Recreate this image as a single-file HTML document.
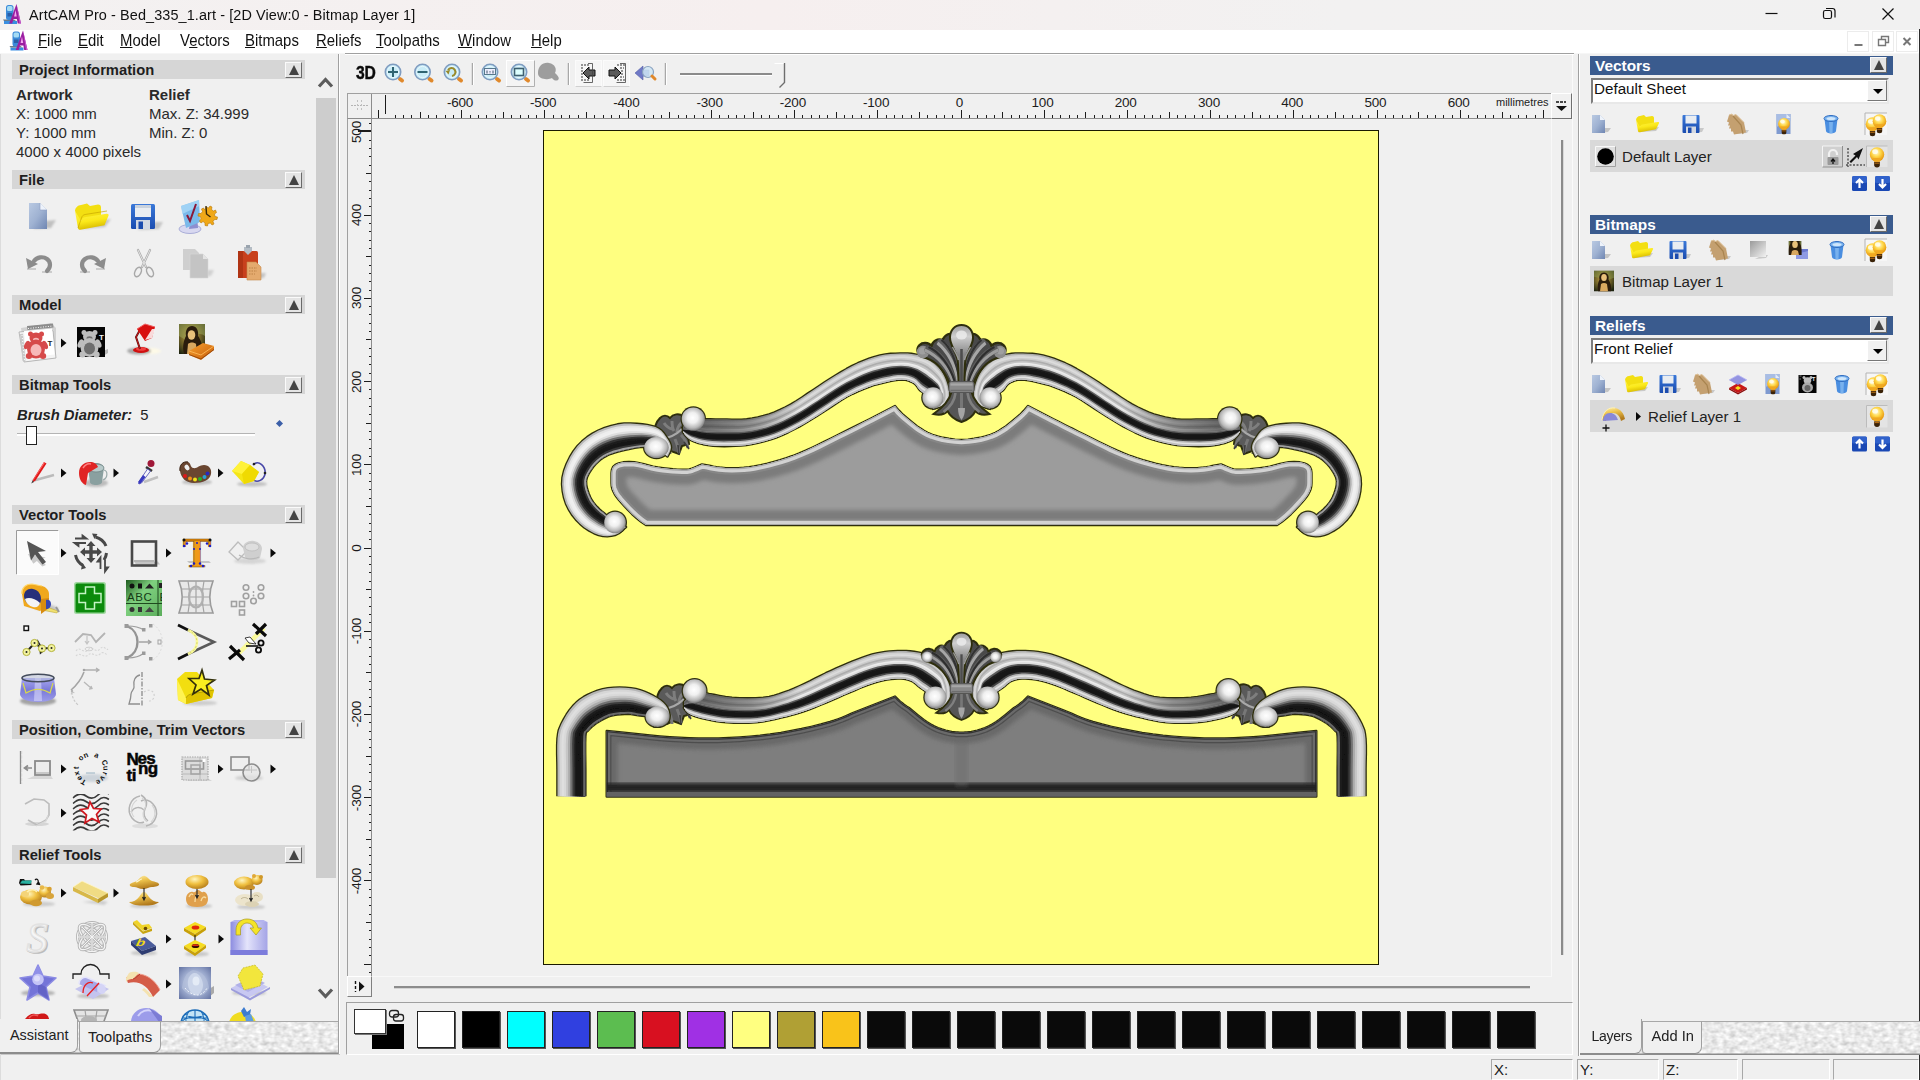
<!DOCTYPE html><html><head><meta charset="utf-8"><title>ArtCAM Pro</title><style>

*{box-sizing:border-box;margin:0;padding:0}
html,body{width:1920px;height:1080px;overflow:hidden;background:#f0f0f0;font-family:"Liberation Sans",sans-serif;color:#1a1a1a}
.a{position:absolute}
.t{position:absolute;white-space:nowrap;line-height:1}
svg{position:absolute;overflow:visible}
.hdr{position:absolute;left:12px;width:293px;height:19px;background:#d6d6d6}
.hdr b{position:absolute;left:7px;top:2px;font-size:14.75px;line-height:16px;color:#1e1e1e;white-space:nowrap}
.cb{position:absolute;width:17px;height:16px;background:#e4e4e4;border:1px solid;border-color:#fafafa #6a6a6a #6a6a6a #fafafa}
.cb i{position:absolute;left:3px;top:2px;width:0;height:0;border-left:5px solid transparent;border-right:5px solid transparent;border-bottom:10px solid #444}
.rh{position:absolute;left:1590px;width:303px;height:19px;background:#3a5b8e}
.rh b{position:absolute;left:5px;top:1px;font-size:15.4px;line-height:17px;color:#fff;white-space:nowrap}
.row{position:absolute;left:1590px;width:303px;background:#d9d9d9}
.dd{position:absolute;left:1591px;width:298px;height:26px;background:#fff;border:2px solid;border-color:#7d7d7d #e8e8e8 #e8e8e8 #7d7d7d}
.dd span{position:absolute;left:1px;top:0px;font-size:15.2px;line-height:18px;color:#111;white-space:nowrap}
.dd em{position:absolute;right:0;top:0;width:20px;height:21px;background:#f0f0f0;border:1px solid;border-color:#fff #777 #777 #fff}
.dd em i{position:absolute;left:5px;top:8px;width:0;height:0;border-left:5px solid transparent;border-right:5px solid transparent;border-top:5px solid #000}
.ar{position:absolute;width:0;height:0;border-top:4px solid transparent;border-bottom:4px solid transparent;border-left:5px solid #111}
.sw{position:absolute;top:1011px;width:38px;height:37px;border:1px solid #222;box-shadow:1px 1px 0 #555}

</style></head><body>
<div class="a" style="left:0;top:0;width:1920px;height:30px;background:linear-gradient(90deg,#f3f1f1 0%,#f6efef 40%,#f2f1f1 70%,#f1f1f1 100%)"></div>
<div class="t" style="left:29px;top:6.5px;font-size:15.3px;letter-spacing:0.1px;color:#111;transform:scaleX(0.944);transform-origin:0 0">ArtCAM Pro - Bed_335_1.art - [2D View:0 - Bitmap Layer 1]</div>
<svg style="left:1750px;top:0" width="170" height="30" viewBox="0 0 170 30"><path d="M15.5 13.5h12" stroke="#111" stroke-width="1.2" fill="none"/><rect x="73.5" y="10.5" width="8" height="8" rx="1.8" fill="none" stroke="#111" stroke-width="1.2"/><path d="M76 8.5h6.5a2.5 2.5 0 0 1 2.500 2.500v6.500" fill="none" stroke="#111" stroke-width="1.2"/><path d="M132.500 8.500l11 11M143.500 8.500l-11 11" stroke="#111" stroke-width="1.2" fill="none"/></svg>
<div class="a" style="left:0;top:30px;width:1920px;height:23px;background:#fff"></div>
<div class="a" style="left:0;top:53px;width:1920px;height:1px;background:#f6f6f6"></div>
<div class="t" style="left:38px;top:32.5px;font-size:15.7px;color:#111;transform:scaleX(0.95);transform-origin:0 0"><u>F</u>ile</div>
<div class="t" style="left:78px;top:32.5px;font-size:15.7px;color:#111;transform:scaleX(0.95);transform-origin:0 0"><u>E</u>dit</div>
<div class="t" style="left:120px;top:32.5px;font-size:15.7px;color:#111;transform:scaleX(0.95);transform-origin:0 0"><u>M</u>odel</div>
<div class="t" style="left:180px;top:32.5px;font-size:15.7px;color:#111;transform:scaleX(0.95);transform-origin:0 0">V<u>e</u>ctors</div>
<div class="t" style="left:245px;top:32.5px;font-size:15.7px;color:#111;transform:scaleX(0.95);transform-origin:0 0"><u>B</u>itmaps</div>
<div class="t" style="left:316px;top:32.5px;font-size:15.7px;color:#111;transform:scaleX(0.95);transform-origin:0 0"><u>R</u>eliefs</div>
<div class="t" style="left:376px;top:32.5px;font-size:15.7px;color:#111;transform:scaleX(0.95);transform-origin:0 0"><u>T</u>oolpaths</div>
<div class="t" style="left:458px;top:32.5px;font-size:15.7px;color:#111;transform:scaleX(0.95);transform-origin:0 0"><u>W</u>indow</div>
<div class="t" style="left:531px;top:32.5px;font-size:15.7px;color:#111;transform:scaleX(0.95);transform-origin:0 0"><u>H</u>elp</div>
<div class="a" style="left:1847px;top:31px;width:22px;height:21px;background:#fff;border:1px solid #ececec"></div>
<div class="a" style="left:1872px;top:31px;width:22px;height:21px;background:#fff;border:1px solid #ececec"></div>
<div class="a" style="left:1896px;top:31px;width:22px;height:21px;background:#fff;border:1px solid #ececec"></div>
<svg style="left:1847px;top:31px" width="72" height="22" viewBox="0 0 72 22"><path d="M7.500 14h8" stroke="#777" stroke-width="2"/><path d="M31.500 8.500h7v6h-7zM34.500 8v-2.500h7v6h-2.500" fill="none" stroke="#777" stroke-width="1.4"/><path d="M56.500 7l7 7M63.500 7l-7 7" stroke="#777" stroke-width="2"/></svg>
<div class="a" style="left:0;top:1056px;width:1920px;height:24px;background:#f0f0f0"></div>
<div class="a" style="left:0;top:1054px;width:340px;height:1px;background:#c8c8c8"></div>
<div class="a" style="left:1491px;top:1059px;width:82px;height:21px;border:1px solid;border-color:#a8a8a8 #fff #fff #a8a8a8"></div>
<div class="t" style="left:1494px;top:1062px;font-size:15px;color:#222">X:</div>
<div class="a" style="left:1577px;top:1059px;width:82px;height:21px;border:1px solid;border-color:#a8a8a8 #fff #fff #a8a8a8"></div>
<div class="t" style="left:1580px;top:1062px;font-size:15px;color:#222">Y:</div>
<div class="a" style="left:1663px;top:1059px;width:75px;height:21px;border:1px solid;border-color:#a8a8a8 #fff #fff #a8a8a8"></div>
<div class="t" style="left:1666px;top:1062px;font-size:15px;color:#222">Z:</div>
<div class="a" style="left:1742px;top:1059px;width:88px;height:21px;border:1px solid;border-color:#a8a8a8 #fff #fff #a8a8a8"></div>
<div class="a" style="left:1833px;top:1059px;width:86px;height:21px;border:1px solid;border-color:#a8a8a8 #fff #fff #a8a8a8"></div>
<div class="a" style="left:1919px;top:29px;width:1px;height:1051px;background:#2c2c2c"></div><div class="a" style="left:0;top:54px;width:1px;height:1026px;background:#dcdcdc"></div>
<svg style="left:0;top:0" width="40" height="54" viewBox="0 0 40 54"><g transform="translate(3 4)"><path d="M1 17h13v3h-13z" fill="#3a8ee0"/><path d="M0 15.500h11l2 1.500h-12z" fill="#6a7a8a"/><rect x="3" y="1" width="7.500" height="15" rx="2.500" fill="#3c8ad8"/><rect x="4" y="2" width="5.500" height="5" rx="1.500" fill="#a6dcf4"/><rect x="4.500" y="9" width="4.500" height="3.500" fill="#2a5ea8"/><path d="M13.500 0l4.500 19.500h-3.300l-0.800-4.500h-3.500l-1.200 4.500h-3z" fill="#9a1ea0"/><path d="M12.500 6l1.200 6.500h-2.600z" fill="#f4a8f0"/><path d="M13.500 0l4.500 19.500h-1.500z" fill="#c858cc"/></g><g transform="translate(9.5 30.5)"><path d="M1 17h13v3h-13z" fill="#3a8ee0"/><path d="M0 15.500h11l2 1.500h-12z" fill="#6a7a8a"/><rect x="3" y="1" width="7.500" height="15" rx="2.500" fill="#3c8ad8"/><rect x="4" y="2" width="5.500" height="5" rx="1.500" fill="#a6dcf4"/><rect x="4.500" y="9" width="4.500" height="3.500" fill="#2a5ea8"/><path d="M13.500 0l4.500 19.500h-3.300l-0.800-4.500h-3.500l-1.200 4.500h-3z" fill="#9a1ea0"/><path d="M12.500 6l1.200 6.500h-2.600z" fill="#f4a8f0"/><path d="M13.500 0l4.500 19.500h-1.500z" fill="#c858cc"/></g></svg>
<div class="a" style="left:338px;top:54px;width:2px;height:1000px;background:linear-gradient(90deg,#a0a0a0 50%,#fff 50%)"></div>
<div class="a" style="left:316px;top:98px;width:20px;height:780px;background:#cdcdcd"></div>
<svg style="left:316px;top:70px" width="20" height="940" viewBox="0 0 20 940"><path d="M3 16.500l6.500-7 6.500 7" fill="none" stroke="#5c5c5c" stroke-width="3.200"/><path d="M3 919.500l6.500 7 6.500-7" fill="none" stroke="#5c5c5c" stroke-width="3.200"/></svg>
<div class="hdr" style="top:60px"><b>Project Information</b><div class="cb" style="left:273px;top:2px"><i></i></div></div>
<div class="hdr" style="top:170px"><b>File</b><div class="cb" style="left:273px;top:2px"><i></i></div></div>
<div class="hdr" style="top:295px"><b>Model</b><div class="cb" style="left:273px;top:2px"><i></i></div></div>
<div class="hdr" style="top:375px"><b>Bitmap Tools</b><div class="cb" style="left:273px;top:2px"><i></i></div></div>
<div class="hdr" style="top:505px"><b>Vector Tools</b><div class="cb" style="left:273px;top:2px"><i></i></div></div>
<div class="hdr" style="top:720px"><b>Position, Combine, Trim Vectors</b><div class="cb" style="left:273px;top:2px"><i></i></div></div>
<div class="hdr" style="top:845px"><b>Relief Tools</b><div class="cb" style="left:273px;top:2px"><i></i></div></div>
<div class="t" style="left:16px;top:87px;font-size:15px;font-weight:bold;color:#2a2a2a">Artwork</div>
<div class="t" style="left:149px;top:87px;font-size:15px;font-weight:bold;color:#2a2a2a">Relief</div>
<div class="t" style="left:16px;top:106px;font-size:15px;color:#2a2a2a">X: 1000 mm</div>
<div class="t" style="left:149px;top:106px;font-size:15px;color:#2a2a2a">Max. Z: 34.999</div>
<div class="t" style="left:16px;top:125px;font-size:15px;color:#2a2a2a">Y: 1000 mm</div>
<div class="t" style="left:149px;top:125px;font-size:15px;color:#2a2a2a">Min. Z: 0</div>
<div class="t" style="left:16px;top:144px;font-size:15px;color:#2a2a2a">4000 x 4000 pixels</div>
<div class="t" style="left:17px;top:408px;font-size:14.8px;color:#222"><b><i>Brush Diameter:</i></b>&nbsp; 5</div>
<div class="a" style="left:17px;top:433px;width:238px;height:3px;background:linear-gradient(#b4b4b4 34%,#fff 34%)"></div>
<div class="a" style="left:26px;top:426px;width:11px;height:19px;background:#fff;border:1.500px solid #222"></div>
<div class="a" style="left:277px;top:421px;width:5px;height:5px;background:#3b5fa8;transform:rotate(45deg)"></div>
<svg style="left:0;top:0" width="340" height="1021" viewBox="0 0 340 1021"><defs>
<filter id="b1" x="-30%" y="-30%" width="160%" height="160%"><feGaussianBlur stdDeviation="0.9"/></filter>
<filter id="b2" x="-30%" y="-30%" width="160%" height="160%"><feGaussianBlur stdDeviation="1.6"/></filter>
<filter id="b05" x="-30%" y="-30%" width="160%" height="160%"><feGaussianBlur stdDeviation="0.5"/></filter>
<linearGradient id="gDoc" x1="0" y1="0" x2="1" y2="1"><stop offset="0" stop-color="#b9c9e2"/><stop offset="0.5" stop-color="#9fb2d2"/><stop offset="1" stop-color="#6f86b2"/></linearGradient>
<linearGradient id="gFold" x1="0" y1="0" x2="0.3" y2="1"><stop offset="0" stop-color="#fff450"/><stop offset="0.6" stop-color="#fbe91a"/><stop offset="1" stop-color="#d9bc00"/></linearGradient>
<linearGradient id="gGold" x1="0" y1="0" x2="0.4" y2="1"><stop offset="0" stop-color="#fff2b4"/><stop offset="0.45" stop-color="#ecc24c"/><stop offset="1" stop-color="#b27a1c"/></linearGradient>
<radialGradient id="gGoldR" cx="0.4" cy="0.3" r="0.7"><stop offset="0" stop-color="#fff6c0"/><stop offset="0.5" stop-color="#f0c040"/><stop offset="1" stop-color="#b8801c"/></radialGradient>
<linearGradient id="gBlueV" x1="0" y1="0" x2="0" y2="1"><stop offset="0" stop-color="#a8a8f0"/><stop offset="0.5" stop-color="#7a7ad8"/><stop offset="1" stop-color="#9c9cea"/></linearGradient>
<linearGradient id="gBlueH" x1="0" y1="0" x2="1" y2="0"><stop offset="0" stop-color="#8c8ce0"/><stop offset="0.45" stop-color="#e4e4fb"/><stop offset="1" stop-color="#a4a4e6"/></linearGradient>
<linearGradient id="gGreenA" x1="0" y1="0" x2="1" y2="1"><stop offset="0" stop-color="#1e5a1e"/><stop offset="0.4" stop-color="#7fd07f"/><stop offset="1" stop-color="#5cae5c"/></linearGradient>
<linearGradient id="gSave" x1="0" y1="0" x2="0" y2="1"><stop offset="0" stop-color="#3a78d8"/><stop offset="1" stop-color="#1a4cb0"/></linearGradient>
<radialGradient id="gMona" cx="0.45" cy="0.4" r="0.7"><stop offset="0" stop-color="#c9a24a"/><stop offset="0.5" stop-color="#7a6a2a"/><stop offset="1" stop-color="#1e2410"/></radialGradient>
<linearGradient id="gBook" x1="0" y1="0" x2="1" y2="1"><stop offset="0" stop-color="#f5a030"/><stop offset="1" stop-color="#c85c08"/></linearGradient>
<radialGradient id="gRelSq" cx="0.5" cy="0.5" r="0.75"><stop offset="0" stop-color="#e4ebf8"/><stop offset="0.55" stop-color="#9aa8cc"/><stop offset="1" stop-color="#5a6a9c"/></radialGradient>
<radialGradient id="gBulb" cx="0.45" cy="0.35" r="0.6"><stop offset="0" stop-color="#fffbe0"/><stop offset="0.5" stop-color="#ffd84a"/><stop offset="1" stop-color="#e89a10"/></radialGradient>
</defs><clipPath id="lp"><rect x="0" y="54" width="316" height="967"/></clipPath><g clip-path="url(#lp)"><g transform="translate(38 216)"><path d="M-5 13l18-1 5-8-10 1z" fill="#999" opacity="0.55" filter="url(#b1)"/><path d="M-9-13h11l7 7v19h-18z" fill="url(#gDoc)"/><path d="M2-13l7 7h-7z" fill="#eef3fb"/><path d="M2-13v7h7" fill="none" stroke="#8fa0c4" stroke-width="0.600"/></g><g transform="translate(91 217)"><path d="M-10 12l24-2 6-8-20 3z" fill="#999" opacity="0.5" filter="url(#b1)"/><path d="M-16-6c0-3 3-6 6-6l6-1.500 3 2.500 8-1.500c2 0 3 1 3 3v8l-22 5z" fill="#f3df12"/><path d="M-16-6l3 17c0 1 1 2 2.500 1.800l24-4.500 4-9.500c0.500-1.500-0.500-2.300-2-2l-22 3.500c-2 0.500-3 1.500-3.500 3.500z" fill="url(#gFold)"/><path d="M-13 11l3.500-10c0.500-2 1.500-3 3.500-3.500l22-3.500" fill="none" stroke="#c8a800" stroke-width="0.700"/></g><g transform="translate(143 217)"><path d="M-6 13l22-1 4-7-8 0z" fill="#999" opacity="0.5" filter="url(#b1)"/><rect x="-12" y="-13" width="24" height="25" rx="1.500" fill="url(#gSave)"/><rect x="-8" y="-12" width="16" height="12" fill="#e9edf2"/><rect x="-8" y="-12" width="16" height="3" fill="#c9d2de"/><rect x="-7" y="3" width="14" height="9" fill="#d4d9e2"/><rect x="-4.500" y="4.500" width="4.500" height="7.500" fill="#1c4cae"/></g><g transform="translate(196 217)"><ellipse cx="-6" cy="12" rx="11" ry="4.500" fill="#d8d8f0" stroke="#9aa0d0" stroke-width="0.800"/><path d="M-7 12l3-16 5 1 1 14z" fill="#8d8fd0"/><path d="M-15-11l18-6 1 22-14 6z" fill="#7ab9ea"/><path d="M-15-11l18-6 0.300 6-17 8z" fill="#a9d8f7" opacity="0.800"/><path d="M-9-2l3 6 6-17" fill="none" stroke="#8a1838" stroke-width="2"/><path d="M10-10l2.500 1 1.500-2 2 1-0.500 2.500 2 1.500 2-1 1 2.500-2 1.500 0.500 2.500 2.500 0.500-0.500 2.500-2.500 0-1.500 2 1 2.500-2 1-1.500-2-2.500 0.500-0.500 2.500-2.500-0.500 0-2.500-2-1.500-2 1.500-1.500-2 1.500-2-0.500-2.500-2.500-0.500 0.500-2.500 2.500 0 1.500-2-1-2.500 2-1 1.500 2z" fill="#f0a818" stroke="#b87808" stroke-width="0.600"/><path d="M10-11l0.500 8 4 3" fill="none" stroke="#3a2a08" stroke-width="1.400"/></g><g transform="translate(40 264)"><path d="M-13 5h9M2 8h10" stroke="#c4c4c4" stroke-width="2" opacity="0.8"/><path d="M-6-3c3-4 9-5 13-2c4 3 4 8 0 12" fill="none" stroke="#8c8c8c" stroke-width="4.200" stroke-linecap="round"/><path d="M-14-6l2 11 10-5z" fill="#8c8c8c"/></g><g transform="translate(92 264)"><path d="M4 5h9M-12 8h10" stroke="#c4c4c4" stroke-width="2" opacity="0.8"/><path d="M6-3c-3-4-9-5-13-2c-4 3-4 8 0 12" fill="none" stroke="#8c8c8c" stroke-width="4.200" stroke-linecap="round"/><path d="M14-6l-2 11-10-5z" fill="#8c8c8c"/></g><g transform="translate(144 263)"><path d="M-6-13l8 17M6-13l-8 17" stroke="#a8a8a8" stroke-width="2.200" stroke-linecap="round"/><path d="M-6-13l8 17M6-13l-8 17" stroke="#f2f2f2" stroke-width="0.800" stroke-linecap="round"/><ellipse cx="-6" cy="9" rx="3" ry="5" transform="rotate(25 -6 9)" fill="none" stroke="#a8a8a8" stroke-width="1.500"/><ellipse cx="6" cy="9" rx="3" ry="5" transform="rotate(-25 6 9)" fill="none" stroke="#a8a8a8" stroke-width="1.500"/></g><g transform="translate(197 263)"><path d="M-4 14l18-1 3-6-6 0z" fill="#aaa" opacity="0.45" filter="url(#b1)"/><path d="M-14-14h12l4 4v17h-16z" fill="#cfcfcf"/><path d="M-7-9h13l5 5v19h-18z" fill="#c4c4c4" stroke="#d8d8d8" stroke-width="0.600"/><path d="M6-9v5h5z" fill="#e4e4e4"/></g><g transform="translate(250 263)"><path d="M-4 16l18-1 2-5-6 0z" fill="#999" opacity="0.5" filter="url(#b1)"/><rect x="-12" y="-12" width="20" height="27" rx="1.500" fill="#c8401c"/><rect x="-12" y="-12" width="5" height="27" fill="#b03414"/><path d="M-6-12v-4h8v4l-4 4z" fill="#b4bcc4"/><path d="M-4-18h4v3h-4z" fill="#9aa4ae"/><path d="M-3-1h9l5 5v13h-14z" fill="#e4aa6e"/><path d="M-3-1h9l5 5v13h-14z" fill="none" stroke="#c88a4a" stroke-width="0.600"/><path d="M-1 5h8M-1 8h8M-1 11h6" stroke="#b47a3e" stroke-width="0.800" stroke-dasharray="1.500 1"/></g><g transform="translate(37 342)"><path d="M-16-14l30-5 5 5v30l-31 4z" fill="#d2d2d2"/><path d="M-18-10l31-3 3 2 3 27-32 4z" fill="#f4f4f4" stroke="#aaa" stroke-width="0.800"/><path d="M-10-16l26-2.500 0.500 4-26 2.500z" fill="#8c8c8c"/><path d="M-9-13.500l25-2.500" stroke="#fff" stroke-width="1" stroke-dasharray="1 1.500"/><path d="M-17-8l3-0.300 2.500 27-3 0.300z" fill="#c8c8c8"/><path d="M-15-7l2.500 25" stroke="#fff" stroke-width="1" stroke-dasharray="1 2"/><path d="M-13-11l28-2.500 2.500 26-28 3z" fill="#fff"/><g transform="translate(-1 3)" ><ellipse cx="-5.500" cy="-11" rx="2.500" ry="2.500" fill="#d64a4a"/><ellipse cx="5.500" cy="-11" rx="2.500" ry="2.500" fill="#d64a4a"/><ellipse cx="0" cy="-7" rx="6.500" ry="5.500" fill="#d64a4a"/><ellipse cx="0" cy="-5" rx="3" ry="2.300" fill="#f7b9b9"/><ellipse cx="0" cy="4" rx="9" ry="9.500" fill="#d64a4a"/><ellipse cx="0" cy="5" rx="5.500" ry="6" fill="#f7b9b9"/><ellipse cx="-7" cy="11" rx="3.200" ry="3" fill="#d64a4a"/><ellipse cx="7" cy="11" rx="3.200" ry="3" fill="#d64a4a"/><ellipse cx="-9" cy="0" rx="2.500" ry="4.500" transform="rotate(25 -9 0)" fill="#d64a4a"/><ellipse cx="9" cy="0" rx="2.500" ry="4.500" transform="rotate(-25 9 0)" fill="#d64a4a"/></g><text x="10.5" y="3.5" font-family="Liberation Sans,sans-serif" font-weight="bold" font-size="8" fill="#222">T</text></g><path d="M61 338.5l5.5 4.5-5.5 4.5z" fill="#0a0a0a"/><g transform="translate(91 342)"><path d="M12 9l5-2v4l-5 3z" fill="#b8b8b8"/><rect x="-14" y="-15" width="28" height="30" fill="#050505"/><g transform="translate(-1.5 1.5)"><ellipse cx="-5.500" cy="-11" rx="2.500" ry="2.500" fill="#bdbdbd"/><ellipse cx="5.500" cy="-11" rx="2.500" ry="2.500" fill="#bdbdbd"/><ellipse cx="0" cy="-7" rx="6.500" ry="5.500" fill="#bdbdbd"/><ellipse cx="0" cy="-5" rx="3" ry="2.300" fill="#6e6e6e"/><ellipse cx="0" cy="4" rx="9" ry="9.500" fill="#bdbdbd"/><ellipse cx="0" cy="5" rx="5.500" ry="6" fill="#6e6e6e"/><ellipse cx="-7" cy="11" rx="3.200" ry="3" fill="#bdbdbd"/><ellipse cx="7" cy="11" rx="3.200" ry="3" fill="#bdbdbd"/><ellipse cx="-9" cy="0" rx="2.500" ry="4.500" transform="rotate(25 -9 0)" fill="#bdbdbd"/><ellipse cx="9" cy="0" rx="2.500" ry="4.500" transform="rotate(-25 9 0)" fill="#bdbdbd"/></g><text x="8" y="-2" font-family="Liberation Sans,sans-serif" font-weight="bold" font-size="8" fill="#f4f4f4">T</text></g><g transform="translate(143 341)"><ellipse cx="8" cy="10" rx="10" ry="3" fill="#fffbe6" opacity="0.9" filter="url(#b1)"/><ellipse cx="-4" cy="10" rx="12" ry="3.500" fill="#777" opacity="0.6" filter="url(#b1)"/><ellipse cx="-2" cy="9" rx="8" ry="3" fill="#d01010"/><ellipse cx="-2" cy="8" rx="5" ry="1.800" fill="#f04040"/><path d="M-3 8l-4-12 5-9" fill="none" stroke="#5a1010" stroke-width="2"/><path d="M-3 8l-4-12 5-9" fill="none" stroke="#c01818" stroke-width="1"/><path d="M-6-12l8-5 10 3-3 11-7 3z" fill="#d81010"/><path d="M2-1l7-11 3 0-3 9z" fill="#fff" opacity="0.850"/><path d="M-6-12l8-5 10 3" fill="none" stroke="#f06060" stroke-width="1"/></g><g transform="translate(194 342)"><rect x="-15" y="-18" width="26" height="30" fill="url(#gMona)"/><path d="M-15-18h26v12c-4-3-8-3-10 2l-6 4-10-6z" fill="#9aa65a" opacity="0.550"/><path d="M-10 12c-2-8 0-14 2-18c-1-6 2-10 6-10c4 0 7 4 6 10c3 4 5 10 4 18z" fill="#2a1c0c"/><ellipse cx="-2.500" cy="-7" rx="3.800" ry="4.800" fill="#e8c07a"/><path d="M-6 2c2-2 6-2 8 0l1 10h-10z" fill="#d8a860"/><path d="M-5 9l14-8 11 3 0 4-13 10-12-5z" fill="url(#gBook)"/><path d="M-5 9l12 4 13-9" fill="none" stroke="#ffc060" stroke-width="0.800"/><path d="M-5 12.500l12 4.500 13-9.500" fill="none" stroke="#8a3c04" stroke-width="0.800"/></g><g transform="translate(40 472)"><path d="M-8 9l22-6" stroke="#999" stroke-width="2.500" opacity="0.6" filter="url(#b05)"/><path d="M4-10l2.500 1.500-11 17-3 2 0.800-3.500z" fill="#e01818"/><path d="M4-10l1 0.600-11.500 17.500-1 0.800z" fill="#ff7070"/><path d="M-7.500 8.500l-1.300 3 2.800-1.500z" fill="#444"/></g><path d="M61 468.5l5.5 4.5-5.5 4.5z" fill="#0a0a0a"/><g transform="translate(92 474)"><ellipse cx="4" cy="9" rx="12" ry="4" fill="#888" opacity="0.5" filter="url(#b1)"/><path d="M-4-6c0-3 4-5 8-5s8 2 8 5l-2 14c0 2-3 3-6 3s-6-1-6-3z" fill="#8aa0a0"/><ellipse cx="4" cy="-6" rx="8" ry="4" fill="#b8caca" stroke="#6a8080" stroke-width="0.700"/><path d="M12-4c4 1 4 8-1 10" fill="none" stroke="#9aa" stroke-width="1.200"/><path d="M-13-1c0-7 5-11 11-11c4 0 7 2 8 5l-10 6-2 12c-4-1-7-6-7-12z" fill="#e02424"/><path d="M-9-6c2-3 5-5 8-4" fill="none" stroke="#ff8080" stroke-width="1.400"/></g><path d="M113.5 468.5l5.5 4.5-5.5 4.5z" fill="#0a0a0a"/><g transform="translate(146 472)"><path d="M-2 10l14-5" stroke="#999" stroke-width="2.500" opacity="0.55" filter="url(#b05)"/><circle cx="5" cy="-8.500" r="3.500" fill="#a01838"/><path d="M0-5l6 4" stroke="#333" stroke-width="2.400"/><path d="M1.500-3l3 2-9 12-2.500 1 0-2.500z" fill="#f4f4fb" stroke="#4848b0" stroke-width="0.800"/><path d="M-3 3l2.500 2-4.500 6-2.500 1 0-2.500z" fill="#3838c0"/></g><g transform="translate(195 473)"><ellipse cx="2" cy="9" rx="15" ry="3" fill="#888" opacity="0.45" filter="url(#b1)"/><path d="M-15-2c-1-6 3-10 8-9c3 1 2 5 5 6c4 1 6-3 11-3c5 0 8 4 7 9c-1 6-8 9-17 9c-8 0-13-5-14-12z" fill="#6a4630"/><path d="M-15-2c-1-6 3-10 8-9" fill="none" stroke="#3a2416" stroke-width="1"/><ellipse cx="-8" cy="-5.500" rx="2.200" ry="3" fill="#f0f0f0" transform="rotate(-30 -8 -5.500)"/><circle cx="-10" cy="3" r="2" fill="#e01818"/><circle cx="-5" cy="5.500" r="2" fill="#f09018"/><circle cx="0" cy="6.500" r="2" fill="#f0e018"/><circle cx="5" cy="6" r="2" fill="#28b028"/><circle cx="9.500" cy="4" r="2" fill="#28a0d8"/><circle cx="12.500" cy="0.500" r="2" fill="#2828c0"/></g><path d="M218 468.5l5.5 4.5-5.5 4.5z" fill="#0a0a0a"/><g transform="translate(249 473)"><ellipse cx="3" cy="11" rx="15" ry="2.500" fill="#888" opacity="0.45" filter="url(#b1)"/><path d="M4-8c6-6 13 2 12 9c-1 6-8 9-11 6" fill="none" stroke="#4848a8" stroke-width="1.600"/><circle cx="5" cy="-9" r="1.300" fill="#222"/><circle cx="16" cy="0" r="1.300" fill="#222"/><path d="M-17-2l9-10 9 4 9 7-5 9-10 3z" fill="#f5e616"/><path d="M-17-2l9-10 9 4-8 9z" fill="#fff23a"/><path d="M-7 1l8-9 9 7-5 9-10 3z" fill="#eed800" opacity="0.900"/></g><rect x="16.5" y="530.5" width="42" height="44" fill="#fbfbfb"/><path d="M16.500 574.500v-44h42" fill="none" stroke="#9a9a9a" stroke-width="1"/><path d="M58.500 530.500v44h-42" fill="none" stroke="#fff" stroke-width="1"/><g transform="translate(37 552)"><path d="M-9 1l20 5-6 3 6 8-4 2-6-8-4 4z" fill="#aaa" opacity="0.600" filter="url(#b05)" transform="translate(-1 -3) scale(0.9 0.7) translate(0 6)"/><path d="M-10-11l19 10-8 1 8 10-3.500 2.500-7.500-10-4 6z" fill="#555"/></g><path d="M61 548.5l5.5 4.5-5.5 4.5z" fill="#0a0a0a"/><g transform="translate(91 552)"><g fill="#484848" stroke="none"><path d="M-1.700-6.500h3.400v13h-3.400zM-6.500-1.700h13v3.400h-13z"/><path d="M0-11l4.500 5h-9zM0 11l4.500-5h-9zM-11 0l5-4.500v9zM11 0l-5-4.500v9z"/></g><g fill="none" stroke="#484848" stroke-width="3"><path d="M-15.500 3a15.500 15.500 0 0 0 7.500 10.500"/><path d="M4.500-15a15.500 15.500 0 0 1 10.500 9"/><path d="M15.500 1a15.500 15.500 0 0 1-2.500 7"/></g><g fill="#484848"><path d="M-10 17.500l5-1.500-3.500-5z"/><path d="M1-18.500l5.500 0.500-3 5z"/></g><g stroke="#484848" stroke-width="1.800" fill="#484848"><path d="M-16-13.500h8M-8.500-16.500l4 3-4 0z"/><path d="M-5-9h-8M-12.500-6l-4-3 4 0z"/><path d="M9.500 17v-8M6.500 9.500l3-4 0 4z"/><path d="M14 8v8M17 15.500l-3 4 0-4z"/></g></g><g transform="translate(144 553.5)"><path d="M-10 8h24l2 3h-24z" fill="#999" opacity="0.500" filter="url(#b05)"/><rect x="-12" y="-12" width="24" height="24" fill="none" stroke="#484848" stroke-width="2.600"/><path d="M-10.500 7.500h21" stroke="#b4b4b4" stroke-width="2"/></g><path d="M166 548.5l5.5 4.5-5.5 4.5z" fill="#0a0a0a"/><g transform="translate(197 553)"><path d="M-10 8h22l2 2h-22z" fill="#999" opacity="0.500" filter="url(#b05)"/><text x="0" y="14" text-anchor="middle" font-family="Liberation Serif,serif" font-weight="bold" font-size="42" fill="#f09a18" stroke="#7a4a08" stroke-width="0.6" transform="scale(1.02 1)">T</text><path d="M-13-13h26" stroke="#c87808" stroke-width="2"/><g fill="#1a1ac8"><circle cx="-13" cy="-7" r="1.200"/><circle cx="-10" cy="-9.500" r="1.200"/><circle cx="10" cy="-9.500" r="1.200"/><circle cx="13" cy="-7" r="1.200"/><circle cx="-6" cy="13" r="1.200"/><circle cx="-3" cy="10.500" r="1.200"/><circle cx="3" cy="10.500" r="1.200"/><circle cx="6" cy="13" r="1.200"/><circle cx="0" cy="-10" r="1"/><circle cx="-3" cy="-4" r="1"/><circle cx="3" cy="-4" r="1"/></g><circle cx="-13" cy="-13" r="1.500" fill="#111"/><circle cx="13" cy="-13" r="1.500" fill="#111"/></g><g transform="translate(247 552)"><ellipse cx="3" cy="9" rx="16" ry="3" fill="#bbb" opacity="0.500" filter="url(#b1)"/><path d="M-18 0l9-10 9 9-9 9z" fill="none" stroke="#bdbdbd" stroke-width="1.300"/><path d="M-4-4c0-5 6-8 11-7c5 1 8 4 8 8l-2 9c-3 3-12 3-15-1z" fill="#cfcfcf"/><ellipse cx="5" cy="-5" rx="7" ry="4" fill="#dedede" stroke="#bbb" stroke-width="0.800"/><path d="M-8 3c4 3 12 6 20 2" fill="none" stroke="#b8b8b8" stroke-width="1.200"/></g><path d="M270.5 548.5l5.5 4.5-5.5 4.5z" fill="#0a0a0a"/><g transform="translate(38 598)"><path d="M-4 11l22 2 3-3-10-4z" fill="#999" opacity="0.500" filter="url(#b1)"/><path d="M6 8l14 5-1 2-15-3z" fill="#f0e070" stroke="#b8a020" stroke-width="0.500"/><path d="M18 9l3 5" stroke="#999" stroke-width="2"/><path d="M-16-4c-1-5 3-10 10-10l10 2c4 1 7 4 7 8v10l-9 7-16-5z" fill="#f0a81c"/><path d="M-16-4c-1-5 3-10 10-10l10 2" fill="none" stroke="#ffd870" stroke-width="1.200"/><path d="M-14-2c0-5 4-8 9-7c5 1 8 5 8 10c0 5-3 8-8 7c-5-1-9-5-9-10z" fill="#28307a"/><path d="M-13 1c3-2 10-1 15 4c-1 3-3 5-7 4c-4-1-7-4-8-8z" fill="#f4f4f4"/><path d="M3 1l8-1v10l-8 6z" fill="#d88c10"/><path d="M8 2c3-1 5 1 5 4s-2 5-5 5z" fill="#3848b0"/></g><g transform="translate(90 598)"><rect x="-16" y="-16" width="32" height="32" rx="2.500" fill="#9fd89f"/><rect x="-14.500" y="-14.500" width="29" height="29" rx="1.500" fill="#0c8a0c"/><path d="M-4.500-11h9v6.500h6.500v9h-6.500v6.500h-9v-6.500h-6.500v-9h6.500z" fill="#0c8a0c" stroke="#c4f4c4" stroke-width="1.500"/></g><g transform="translate(144 598)"><clipPath id="abcc"><rect x="-18" y="-18" width="36" height="36"/></clipPath><g clip-path="url(#abcc)"><rect x="-18" y="-18" width="36" height="36" fill="url(#gGreenA)"/><path d="M-18 5.500h36M14-18v36" stroke="#1e4a1e" stroke-width="1"/><circle cx="-12" cy="-12" r="2.500" fill="#111"/><rect x="-6" y="-14.500" width="4" height="5" fill="#111"/><path d="M1-9.500l4.500-5 4.500 5z" fill="#222"/><circle cx="-12" cy="11.500" r="2.500" fill="#333"/><rect x="-6" y="9" width="4" height="5" fill="#333"/><path d="M1 14l4.500-5 4.500 5z" fill="#444"/><text x="-17" y="2.500" font-family="Liberation Sans,sans-serif" font-size="11.5" fill="#153a15" letter-spacing="0.6">ABC</text><text x="15.5" y="2.500" font-family="Liberation Sans,sans-serif" font-size="11.5" fill="#153a15">E</text><rect x="15" y="-15" width="3" height="5" fill="#222"/></g></g><g transform="translate(196 597)"><path d="M-17-16h34c-4 10-4 22 0 32h-34c4-10 4-22 0-32z" fill="#e9e9e9" stroke="#9a9a9a" stroke-width="1.600"/><path d="M-15-8h30M-14 0h28M-15 8h30M-8-16c2 10 2 22 0 32M0-16v32M8-16c-2 10-2 22 0 32" fill="none" stroke="#a4a4a4" stroke-width="1.200"/><ellipse cx="0" cy="0" rx="7" ry="10.500" fill="none" stroke="#b0b0b0" stroke-width="2.200"/></g><g transform="translate(248 600)"><g fill="none" stroke="#a0a0a0" stroke-width="1.600"><rect x="-16.500" y="1.500" width="5" height="5"/><rect x="-8.500" y="1.500" width="5" height="5"/><rect x="-8.500" y="10" width="5" height="5"/><circle cx="-2" cy="-12.500" r="2.800"/><circle cx="13" cy="-12.500" r="2.800"/><circle cx="-2" cy="-4" r="2.800"/><circle cx="13" cy="-4" r="2.800"/><circle cx="5.500" cy="1" r="2.800"/></g><circle cx="5.500" cy="-8" r="0.900" fill="#a0a0a0"/><circle cx="5.500" cy="-4.500" r="0.900" fill="#a0a0a0"/></g><g transform="translate(38 643)"><rect x="-14" y="-17" width="4.500" height="4.500" fill="#fff" stroke="#111" stroke-width="1.400"/><path d="M-11.500 9l8-9 7.500 5.500 9.500-0.500" fill="none" stroke="#222" stroke-width="2"/><path d="M-1-3l3.500 6M5 8l-3-2 0.500 4z" stroke="#222" stroke-width="1.500" fill="#222"/><g fill="#f2f2a0" stroke="#b4b43c" stroke-width="1"><circle cx="-11.500" cy="9" r="3.600"/><circle cx="-3.500" cy="0" r="3.600"/><circle cx="4" cy="5.500" r="3.600"/><circle cx="13.500" cy="5" r="3.600"/></g><g fill="#222"><circle cx="-11.500" cy="9" r="1"/><circle cx="-3.500" cy="0" r="1"/><circle cx="4" cy="5.500" r="1"/><circle cx="13.500" cy="5" r="1"/></g></g><g transform="translate(91 645)"><path d="M-16-3l8-8 8 1 5 7 9-9" fill="none" stroke="#b4b4b4" stroke-width="1.800"/><path d="M-4-9v7M-6-4l2 3 2-3" fill="none" stroke="#c4c4c4" stroke-width="1.200"/><path d="M-15 6c4-6 8 4 12-1s8 4 12-1 6 2 8 0M-15 11c4-5 8 3 12-1s8 3 12-1 6 2 8 0" fill="none" stroke="#d6d6d6" stroke-width="1.100" stroke-dasharray="2 1.500"/><ellipse cx="-2" cy="4" rx="4" ry="1.800" fill="none" stroke="#d0d0d0"/></g><g transform="translate(143 642)"><path d="M-16-16c14 6 14 26 0 32" fill="none" stroke="#949494" stroke-width="2.400"/><path d="M-15-16c6 0 11 1 16 4M-15 16c6 0 11-1 16-5" fill="none" stroke="#9c9c9c" stroke-width="1.200"/><path d="M10-18a22 22 0 0 1 0 36" fill="none" stroke="#dcdcdc" stroke-width="1" stroke-dasharray="2 2"/><path d="M-4 0h11M5-2l3 2-3 2" fill="none" stroke="#a4a4a4" stroke-width="1.300"/><g fill="#9a9a9a"><rect x="-18.500" y="-18" width="4" height="4"/><rect x="-18.500" y="14" width="4" height="4"/><rect x="-1" y="-14" width="3.500" height="3.500"/><rect x="-1" y="9.500" width="3.500" height="3.500"/><rect x="6" y="-18" width="3.500" height="3.500"/><rect x="6" y="15" width="3.500" height="3.500"/></g><rect x="15" y="-2" width="3" height="4" fill="none" stroke="#a4a4a4"/></g><g transform="translate(196 642)"><path d="M-18-17l10 5M-18 17l10-5" stroke="#111" stroke-width="2.800"/><path d="M-8-12l26 12-26 12" fill="none" stroke="#5a5a5a" stroke-width="2.600"/><path d="M-8-12c12 5 12 19 0 24" fill="none" stroke="#fafa9a" stroke-width="2.600"/><path d="M-8-12c12 5 12 19 0 24" fill="none" stroke="#c8c86a" stroke-width="0.800" stroke-dasharray="2 2"/></g><g transform="translate(248 642)"><path d="M-10 12l26-26" stroke="#fafa9a" stroke-width="4.500"/><path d="M-18 4l14 14M-19 17l11-9" stroke="#0a0a0a" stroke-width="3.200"/><path d="M5-18l13 12M8-8l10-10" stroke="#0a0a0a" stroke-width="3.200"/><path d="M-3-4l5-1 6 7-7-1z" fill="#fff" stroke="#111" stroke-width="0.800"/><path d="M-2 4h12" stroke="#111" stroke-width="1.600"/><circle cx="13" cy="1" r="2.600" fill="none" stroke="#0a0a0a" stroke-width="1.800"/><circle cx="10.500" cy="8" r="2.600" fill="none" stroke="#0a0a0a" stroke-width="1.800"/></g><g transform="translate(38 689)"><ellipse cx="0" cy="12" rx="18" ry="4.500" fill="#666" opacity="0.550" filter="url(#b1)"/><path d="M-16-11l-2 16c0 5 8 8 18 8s18-3 18-8l-2-16z" fill="url(#gBlueV)"/><path d="M-3-11l-1 23h8l-1-23z" fill="#d8d8fa" opacity="0.600"/><ellipse cx="0" cy="-11" rx="16" ry="3.800" fill="#b8c0d8" fill-opacity="0.500" stroke="#444c5c" stroke-width="1.600"/><path d="M-15-6l3 10c8-5 16-5 24 0l3-10" fill="none" stroke="#d8d84a" stroke-width="1.200"/></g><g transform="translate(90 687)"><path d="M-6-17h14M6-19l3 2-3 2" fill="none" stroke="#b0b0b0" stroke-width="1.300"/><path d="M-6-15c-3 8-7 13-13 18" fill="none" stroke="#a4a4a4" stroke-width="1.600"/><circle cx="-6" cy="-17" r="1.300" fill="#a4a4a4"/><path d="M-6-5l7 6M-1 2l3-0.500-1-2.500" fill="none" stroke="#b8b8b8" stroke-width="1.300"/><path d="M-18 5c0 5 2 9 6 13M-18 5l-1 3M-18 5l3 1" fill="none" stroke="#c8c8c8" stroke-width="1.200" stroke-dasharray="2.500 1.500"/><circle cx="-18" cy="4" r="1.200" fill="#b4b4b4"/></g><g transform="translate(142 689)"><path d="M0-17v34" stroke="#8a8a8a" stroke-width="1.300" stroke-dasharray="5 1.500 1.500 1.500"/><path d="M-2-14c-5 1-7 6-6 11c1 3-3 5-3 8c0 4-1 7-2 10h11" fill="none" stroke="#8e8e8e" stroke-width="1.300"/><path d="M2 3c4-3 9-2 10 2s-2 7-5 7" fill="none" stroke="#d0d0d0" stroke-width="1.100" stroke-dasharray="2 2"/></g><g transform="translate(196 688)"><ellipse cx="4" cy="15" rx="17" ry="2.500" fill="#999" opacity="0.400" filter="url(#b1)"/><path d="M-19-9l8-7 12 0 17 18-2 8-26 6-8-4z" fill="#f2de10"/><path d="M-10 10c1-3 4-4 8-4.500l20-3.500-2 8-26 6z" fill="#e0c400"/><path d="M-19-9l1 21 8 4 0-6z" fill="#fff352"/><path d="M-10 10c1-3 4-4 8-4.500l20-3.500" fill="none" stroke="#a89200" stroke-width="0.700"/><path d="M6-18l2.500 9 10 1-8 5.500 2.500 9.500-8-6-8 5 3-9-7-6.500 10 0z" fill="#f8ee20" stroke="#33300c" stroke-width="1.700" stroke-linejoin="miter"/></g><g transform="translate(37 768)"><path d="M-16.500-17v33" stroke="#8c8c8c" stroke-width="1.300"/><path d="M-16.500-17v33" stroke="#d0d0d0" stroke-width="0.700" transform="translate(1.200 0)" stroke-dasharray="3 1.500"/><path d="M-3 8h17l2 3h-26z" fill="#bbb" opacity="0.450" filter="url(#b05)"/><path d="M-5 0h-7M-9-2.500l-3.500 2.500 3.500 2.500" fill="none" stroke="#8c8c8c" stroke-width="1.700"/><rect x="-2" y="-7" width="15" height="14" fill="#ececec" stroke="#8a8a8a" stroke-width="1.800"/><path d="M-1 5h13" stroke="#bcbcbc" stroke-width="1.500"/></g><path d="M61 764.5l5.5 4.5-5.5 4.5z" fill="#0a0a0a"/><g transform="translate(91 769)"><ellipse cx="2" cy="9" rx="15" ry="4" fill="#9ab" opacity="0.400" filter="url(#b1)"/><text transform="rotate(-150.0) translate(0 -12.5)" font-family="Liberation Sans,sans-serif" font-weight="bold" font-size="7.5" text-anchor="middle" fill="#111">T</text><text transform="rotate(-128.5) translate(0 -12.5)" font-family="Liberation Sans,sans-serif" font-weight="bold" font-size="7.5" text-anchor="middle" fill="#111">e</text><text transform="rotate(-107.0) translate(0 -12.5)" font-family="Liberation Sans,sans-serif" font-weight="bold" font-size="7.5" text-anchor="middle" fill="#111">x</text><text transform="rotate(-85.5) translate(0 -12.5)" font-family="Liberation Sans,sans-serif" font-weight="bold" font-size="7.5" text-anchor="middle" fill="#111">t</text><text transform="rotate(-42.5) translate(0 -12.5)" font-family="Liberation Sans,sans-serif" font-weight="bold" font-size="7.5" text-anchor="middle" fill="#111">o</text><text transform="rotate(-21.0) translate(0 -12.5)" font-family="Liberation Sans,sans-serif" font-weight="bold" font-size="7.5" text-anchor="middle" fill="#111">n</text><text transform="rotate(22.0) translate(0 -12.5)" font-family="Liberation Sans,sans-serif" font-weight="bold" font-size="7.5" text-anchor="middle" fill="#111">a</text><text transform="rotate(65.0) translate(0 -12.5)" font-family="Liberation Sans,sans-serif" font-weight="bold" font-size="7.5" text-anchor="middle" fill="#111">C</text><text transform="rotate(86.5) translate(0 -12.5)" font-family="Liberation Sans,sans-serif" font-weight="bold" font-size="7.5" text-anchor="middle" fill="#111">u</text><text transform="rotate(108.0) translate(0 -12.5)" font-family="Liberation Sans,sans-serif" font-weight="bold" font-size="7.5" text-anchor="middle" fill="#111">r</text><text transform="rotate(129.5) translate(0 -12.5)" font-family="Liberation Sans,sans-serif" font-weight="bold" font-size="7.5" text-anchor="middle" fill="#111">v</text><text transform="rotate(151.0) translate(0 -12.5)" font-family="Liberation Sans,sans-serif" font-weight="bold" font-size="7.5" text-anchor="middle" fill="#111">e</text><path d="M-5 4h9" stroke="#9ab4c4" stroke-width="1"/></g><g transform="translate(143 767)"><g font-family="Liberation Sans,sans-serif" font-weight="bold" font-size="17" fill="#050505" stroke="#050505" stroke-width="0.5"><text x="-16.500" y="-2" letter-spacing="-1.1">N</text><text x="-5.5" y="-3.5" letter-spacing="-0.8">es</text><text x="-5" y="7" letter-spacing="-0.6">ng</text><text x="-16.500" y="14" letter-spacing="-0.500">ti</text></g></g><g transform="translate(195 768)"><path d="M-10 11h24l3 2h-24z" fill="#bbb" opacity="0.500" filter="url(#b05)"/><rect x="-13" y="-11" width="26" height="23" fill="#dcdcdc" stroke="#a8a8a8" stroke-width="1.200" stroke-dasharray="1.500 1"/><path d="M-12 6h25M5-11v23" stroke="#b8b8b8" stroke-width="1"/><rect x="-9.500" y="-7" width="18" height="8" fill="none" stroke="#999" stroke-width="1.600"/><rect x="-4" y="-3" width="9" height="9" fill="none" stroke="#a4a4a4" stroke-width="1.500"/><rect x="7.500" y="-9" width="3" height="3" fill="#fff"/></g><path d="M218 764.5l5.5 4.5-5.5 4.5z" fill="#0a0a0a"/><g transform="translate(246 769)"><ellipse cx="3" cy="9" rx="14" ry="2.500" fill="#aaa" opacity="0.450" filter="url(#b1)"/><rect x="-15" y="-12" width="18" height="13" fill="#efefef" stroke="#8c8c8c" stroke-width="1.600"/><circle cx="5.500" cy="3.500" r="8.500" fill="#e4e4e4" fill-opacity="0.700" stroke="#8c8c8c" stroke-width="1.600"/><path d="M5.500-3v7M0 1h11" stroke="#c4c4c4" stroke-width="1"/></g><path d="M270.5 764.5l5.5 4.5-5.5 4.5z" fill="#0a0a0a"/><g transform="translate(37 812)"><ellipse cx="0" cy="12" rx="12" ry="2" fill="#bbb" opacity="0.500" filter="url(#b05)"/><path d="M-12-8l9-5 10 1 5 4v11l-3 5-9 5-9-5" fill="none" stroke="#bcbcbc" stroke-width="1.600"/><path d="M11 3l-2 6-10 5" fill="none" stroke="#d8d8d8" stroke-width="1.200"/></g><path d="M61 808.5l5.5 4.5-5.5 4.5z" fill="#0a0a0a"/><g transform="translate(91 812)"><clipPath id="cw"><rect x="-18.500" y="-18" width="37" height="36.500"/></clipPath><g clip-path="url(#cw)"><path d="M-18 -14c5-5 9-5 13-2s8 3 12-1 7-4 11-1" fill="none" stroke="#3a3a3a" stroke-width="1.700"/><path d="M-18 -8.5c5-5 9-5 13-2s8 3 12-1 7-4 11-1" fill="none" stroke="#3a3a3a" stroke-width="1.700"/><path d="M-18 -3c5-5 9-5 13-2s8 3 12-1 7-4 11-1" fill="none" stroke="#3a3a3a" stroke-width="1.700"/><path d="M-18 2.5c5-5 9-5 13-2s8 3 12-1 7-4 11-1" fill="none" stroke="#3a3a3a" stroke-width="1.700"/><path d="M-18 8c5-5 9-5 13-2s8 3 12-1 7-4 11-1" fill="none" stroke="#3a3a3a" stroke-width="1.700"/><path d="M-18 13.5c5-5 9-5 13-2s8 3 12-1 7-4 11-1" fill="none" stroke="#3a3a3a" stroke-width="1.700"/><path d="M-18 19c5-5 9-5 13-2s8 3 12-1 7-4 11-1" fill="none" stroke="#3a3a3a" stroke-width="1.700"/></g><path d="M0-12l3.500 6.500 7.500 0.500-4.500 5.500 2.500 7.500-7-3.500-7 4.500 1.500-8-6-5.500 7.500-1z" fill="#fbfbfb" stroke="#d01820" stroke-width="1.700" stroke-linejoin="miter" transform="translate(-1 2)"/></g><g transform="translate(143 812)"><ellipse cx="2" cy="14" rx="13" ry="2.500" fill="#ccc" opacity="0.500" filter="url(#b05)"/><path d="M-3-16c-10 2-14 14-8 22c3 4 8 6 12 4M3 14c10-2 14-14 7-22c-3-4-8-5-12-3M-2-17c5 3 7 8 4 14c-2 4-1 9 3 12M-12 0c3-5 9-6 13-2" fill="none" stroke="#b4b4b4" stroke-width="1.500"/><path d="M-1-14c4 3 5 7 2 12c-2 4-1 9 3 12M-6-12c-6 4-7 12-3 17M8 10c5-5 5-12 1-17" fill="none" stroke="#d4d4d4" stroke-width="1.100"/></g><g transform="translate(37 892)"><path d="M-18-9l1-4 4 0 1 1.500 6 0 0.500 4.500-11 0.500z" fill="#111"/><path d="M-17-8.500l2-3 10 0-1.500 3.500z" fill="#28b0a0"/><path d="M-2-12c2-2 4 0 3 3M0-8l1.500-2 1 2.500z" fill="none" stroke="#111" stroke-width="1.300"/><ellipse cx="2" cy="12" rx="16" ry="2.500" fill="#999" opacity="0.400" filter="url(#b1)"/><ellipse cx="-6" cy="5" rx="11" ry="7.500" fill="url(#gGoldR)"/><ellipse cx="8" cy="0" rx="6" ry="5.500" fill="url(#gGoldR)"/><circle cx="5" cy="-4.500" r="2.300" fill="#e8b848"/><circle cx="12.500" cy="-3" r="2.300" fill="#d8a030"/><ellipse cx="13" cy="4" rx="4" ry="3" fill="#d8a43a"/><ellipse cx="-1" cy="11" rx="6" ry="3.200" fill="#d09a30"/><ellipse cx="-12" cy="2" rx="4" ry="3" fill="#f4d478"/><path d="M-10 0c3-3 8-3 10 0" fill="none" stroke="#fff2b4" stroke-width="1.500"/></g><path d="M61 888.5l5.5 4.5-5.5 4.5z" fill="#0a0a0a"/><g transform="translate(90 893)"><path d="M-8 9l22 3 4-3-8-2z" fill="#999" opacity="0.400" filter="url(#b1)"/><path d="M-17-6l9-6 26 12-8 6z" fill="#f0dc84"/><path d="M-17-6l25 12v4l-25-12z" fill="#d8b848"/><path d="M8 6l10-6v4l-10 6z" fill="#b8962c"/><path d="M-17-6l9-6 26 12" fill="none" stroke="#fff6c8" stroke-width="0.800"/></g><path d="M113.5 888.5l5.5 4.5-5.5 4.5z" fill="#0a0a0a"/><g transform="translate(144 892)"><ellipse cx="0" cy="14" rx="14" ry="2" fill="#999" opacity="0.400" filter="url(#b1)"/><path d="M-14-8c3-2 6-2 8-4s4-5 7-4 4 4 7 5 6 1 7 3-4 3-7 3-5 2-9 2-6-2-9-2-5-1-4-3z" fill="url(#gGold)"/><path d="M-8-10c2 0 4-3 6-3" fill="none" stroke="#fff8d0" stroke-width="1.200"/><path d="M-15 10c4 0 8-2 10-5s3-5 5-5 3 2 5 5 6 5 10 5c-3 3-9 3.500-15 3.500s-12-0.500-15-3.500z" fill="url(#gGold)"/><path d="M0-4v11M-1.500 5l1.500 3 1.500-3" fill="none" stroke="#222" stroke-width="1.100"/></g><g transform="translate(197 892)"><ellipse cx="2" cy="14" rx="13" ry="2.500" fill="#999" opacity="0.450" filter="url(#b1)"/><ellipse cx="0" cy="-10" rx="11.500" ry="7" fill="url(#gGoldR)"/><path d="M-11 7c0-5 4-8 7-7s3-2 5-2 3 3 5 2 5 2 5 7-3 8-11 8-11-3-11-8z" fill="#e0a04c"/><path d="M-8 5c1-3 3-4 4-2M-2 10c0-5 2-8 4-7M4 9c1-4 3-5 5-3" fill="none" stroke="#f8dca0" stroke-width="1.300"/><path d="M0-3v8M-1.500 3l1.500 3 1.500-3" fill="none" stroke="#222" stroke-width="1.100"/></g><g transform="translate(249 892)"><ellipse cx="2" cy="15" rx="14" ry="2.500" fill="#999" opacity="0.400" filter="url(#b1)"/><ellipse cx="-4" cy="8" rx="10" ry="6" fill="#ece4cc"/><ellipse cx="8" cy="5" rx="6" ry="5" fill="#e8dfc4"/><ellipse cx="3" cy="12" rx="7" ry="3" fill="#dcd2b4"/><path d="M-8 7c2-2 5-2 7 0M5 4c2-1.500 4-1 5 1" fill="none" stroke="#b8ac88" stroke-width="0.900"/><ellipse cx="-5" cy="-9" rx="10" ry="6.500" fill="url(#gGoldR)"/><ellipse cx="8" cy="-12" rx="5.500" ry="5" fill="url(#gGoldR)"/><circle cx="5" cy="-16" r="2" fill="#e0a838"/><circle cx="12" cy="-15" r="2" fill="#d09828"/><ellipse cx="1" cy="-4.500" rx="5" ry="2.500" fill="#c8902c"/><path d="M2-3v11M0.500 6l1.500 3 1.500-3" fill="none" stroke="#222" stroke-width="1.100"/></g><g transform="translate(40 938)"><text x="-13.5" y="14" font-family="Liberation Serif,serif" font-style="italic" font-size="42" fill="#bcbcbc" stroke="#bcbcbc" stroke-width="1.6" transform="translate(1.2 1.2)">S</text><text x="-13.5" y="14" font-family="Liberation Serif,serif" font-style="italic" font-size="42" fill="#f6f6f6" stroke="#e2e2e2" stroke-width="1.4">S</text></g><g transform="translate(92 937)"><circle r="15" fill="#e6e6e6" opacity="0.600"/><circle r="14.500" fill="none" stroke="#b4b4b4" stroke-width="3"/><circle r="14.500" fill="none" stroke="#f4f4f4" stroke-width="1.200"/><ellipse cx="0" cy="0" rx="16.500" ry="7" transform="rotate(45)" fill="none" stroke="#b4b4b4" stroke-width="3.200"/><ellipse cx="0" cy="0" rx="16.500" ry="7" transform="rotate(45)" fill="none" stroke="#f4f4f4" stroke-width="1.300"/><ellipse cx="0" cy="0" rx="16.500" ry="7" transform="rotate(-45)" fill="none" stroke="#b4b4b4" stroke-width="3.200"/><ellipse cx="0" cy="0" rx="16.500" ry="7" transform="rotate(-45)" fill="none" stroke="#f4f4f4" stroke-width="1.300"/><path d="M-10-10l20 20M10-10l-20 20M-14 0h28M0-14v28" stroke="#bcbcbc" stroke-width="2.600"/><path d="M-10-10l20 20M10-10l-20 20M-14 0h28M0-14v28" stroke="#f4f4f4" stroke-width="1"/></g><g transform="translate(143 938)"><ellipse cx="1" cy="15" rx="13" ry="2.500" fill="#999" opacity="0.450" filter="url(#b1)"/><path d="M-12 3l14-4 11 9-14 5z" fill="#4a5c9c"/><path d="M-12 3v4l11 10v-4zM-1 13v4l14-5v-4z" fill="#2e3c72"/><text x="-4" y="10" font-family="Liberation Sans,sans-serif" font-weight="bold" font-size="13" fill="#f0d818" transform="skewX(-25) scale(1.15 0.8)">b</text><path d="M-10-16l4-2 5 5 7-1 3 4-9 3z" fill="#f0d428"/><path d="M-10-16v2.500l10 9.500 9-3v-2.500l-9 3z" fill="#c8a410"/><circle cx="2.500" cy="-9.500" r="1.800" fill="#6a4a08"/></g><path d="M166 934.5l5.5 4.5-5.5 4.5z" fill="#0a0a0a"/><g transform="translate(195 938)"><ellipse cx="2" cy="16" rx="12" ry="2.500" fill="#999" opacity="0.450" filter="url(#b1)"/><path d="M-11-10l11-6 11 5-11 7z" fill="#f6dc20"/><path d="M-11-10v3l11 6.500 11-7.500v-3l-11 7z" fill="#c8a008"/><ellipse cx="0.500" cy="-10.500" rx="3.800" ry="2" fill="#e02808"/><path d="M0-3v9M-1.500 4l1.500 3 1.500-3" fill="none" stroke="#222" stroke-width="1.100"/><path d="M-11 8l11-6 11 5-11 8z" fill="#f6dc20"/><path d="M-11 8v3l11 7 11-8v-3l-11 8z" fill="#c8a008"/><ellipse cx="0.500" cy="8" rx="3.800" ry="2" fill="#3a0a04"/><path d="M-3.300 8c1-2.500 6-2.500 7.600 0z" fill="#e03010"/></g><path d="M218.5 934.5l5.5 4.5-5.5 4.5z" fill="#0a0a0a"/><g transform="translate(249 938)"><rect x="-18.500" y="-16" width="37" height="33" fill="url(#gBlueH)"/><path d="M-18.500 12h37v5h-37z" fill="#7c7cdc"/><path d="M-18.500-16l4-2h29l4 2z" fill="#b4b4ee"/><path d="M-13-3v-5c0-7 5-11 11-11s10 3 11 9h3.500l-5.500 7-6-7h3.500c-1-3-3-5-6.500-5s-6.500 3-6.500 7v5z" fill="#f4e428" stroke="#a8981c" stroke-width="0.700"/></g><g transform="translate(38 983)"><ellipse cx="0" cy="10" rx="17" ry="3" fill="#777" opacity="0.500" filter="url(#b1)"/><path d="M0-18l5 11 13 2-10 9 3 13-11-7-11 7 3-13-10-9 13-2z" fill="#7474d8" stroke="#8c8ce4" stroke-width="1.600" stroke-linejoin="round"/><path d="M0-18l5 11-5 7-5-7z" fill="#9090e8"/><path d="M0 0l8 4 3 13-11-7z" fill="#5c5cc0" opacity="0.700"/><circle cx="0" cy="-3.500" r="5.800" fill="#c4c4f6"/><circle cx="-1" cy="-4.500" r="3" fill="#dcdcfb"/></g><g transform="translate(91 983)"><ellipse cx="2" cy="13" rx="16" ry="2.500" fill="#888" opacity="0.450" filter="url(#b1)"/><path d="M-18-4v-5h8a9.500 9.500 0 0 1 19 0h9v5" fill="none" stroke="#222" stroke-width="1.300"/><path d="M-16 6l18 10 16-10-18-8z" fill="#c4c4ee"/><path d="M-12 1c0-5 5-8 9-6l18 8c-4-2-9 1-9 6z" fill="#a8a8e8"/><path d="M-12 1c0-5 5-8 9-6l18 8" fill="none" stroke="#e4e4fb" stroke-width="1.500"/><ellipse cx="10.500" cy="6" rx="4.200" ry="5" fill="#d4d4f6" transform="rotate(-25 10.500 6)"/><path d="M-8 10c0-8 5-12 10-10M-4 13l12-13" fill="none" stroke="#e82020" stroke-width="1.300"/></g><g transform="translate(143 984)"><path d="M-17-6c10-8 26-4 34 12l-7 7c-5-11-14-17-25-14z" fill="#d45c48"/><path d="M-17-6c10-8 26-4 34 12" fill="none" stroke="#f0a090" stroke-width="1"/><path d="M-17-6l3-5c5-2 8-1 10 0l-6 6c-2 0-5 0-7 3z" fill="#f4e2b0"/><path d="M1 4c3 2 6 5 9 9l-4 0c-2-3-4-5-7-7z" fill="#f4e2b0"/><path d="M-3-10c-3 3-6 5-7 5" fill="none" stroke="#b84030" stroke-width="1"/></g><path d="M166 979.5l5.5 4.5-5.5 4.5z" fill="#0a0a0a"/><g transform="translate(195 983)"><path d="M14 6l5-3v7l-5 4z" fill="#aaa"/><rect x="-16" y="-16" width="32" height="32" fill="url(#gRelSq)"/><path d="M-2-13c-7 2-10 9-11 18c3 5 9 8 14 8c6 0 11-3 13-8c-1-9-6-17-16-18z" fill="#b4c0dc" opacity="0.650"/><path d="M-1-10c-4 1-7 6-6 12s4 10 8 10 7-5 7-10-4-13-9-12z" fill="#ccd6ea"/><ellipse cx="1" cy="-2" rx="3.500" ry="4.500" fill="#e4ebf6"/><path d="M-10 5c3 4 8 7 12 7s8-3 10-7" fill="none" stroke="#eef2fa" stroke-width="1" stroke-dasharray="2 1.500"/></g><g transform="translate(249 982)"><ellipse cx="0" cy="11" rx="17" ry="2.500" fill="#888" opacity="0.400" filter="url(#b1)"/><path d="M-18 6l20-10 17 9-20 11z" fill="#c8c8f2"/><path d="M-18 6v2l19 10.500 20-11.500v-2l-20 11z" fill="#9c9cdc"/><path d="M-14 3l18-8 12 6-17 9z" fill="#b0b0e8"/><path d="M-11-6l5-8 12-3 8 9-3 12-16 4z" fill="#f2e63c" stroke="#c8bc28" stroke-width="0.800" stroke-dasharray="2 1"/></g><g transform="translate(36 1020)"><path d="M-13 2c3-5 7-9 12-8s9-3 13 2l3 8h-30z" fill="#d01818"/><path d="M-7-2c2-3 6-4 9-2" stroke="#f05858" stroke-width="1.5" fill="none"/></g><g transform="translate(91 1018)"><path d="M-17-8h34l-5 14h-24z" fill="#e4e4e4" stroke="#8c8c8c" stroke-width="1.600"/><path d="M-15-2h30M-6-8l2 14M6-8l-2 14" stroke="#a4a4a4" stroke-width="1.200"/><ellipse cx="-2" cy="2" rx="8" ry="4" fill="#b4b4b4"/></g><g transform="translate(146 1022)"><path d="M-15 0c0-8 7-14 15-14s16 6 16 14z" fill="#9c9cea"/><path d="M-8-6c3-5 9-7 14-5" fill="none" stroke="#d4d4fb" stroke-width="2"/><path d="M3-14l13 8v6h-3z" fill="#7c7cd4"/></g><g transform="translate(195 1024)"><circle r="14" fill="#c4e4f6" stroke="#1c6cb8" stroke-width="1.500"/><path d="M-14 0a14 7 0 0 1 28 0M-10-10a16 16 0 0 0 20 0M-6-13c-4 6-4 16 0 26M6-13c4 6 4 16 0 26M0-14v28M-12-6l24 0M-13 3h26" fill="none" stroke="#1c6cb8" stroke-width="1.100"/></g><g transform="translate(243 1022)"><path d="M-14 0c2-7 8-10 14-10s11 4 13 10z" fill="#f0dc20"/><path d="M-2-11l3-4 3 5 4-3-1 6-6 2z" fill="#3c7cd0"/><path d="M2-6l6-2 3 8h-8z" fill="#5c9ce0"/></g></g></svg>
<svg style="left:0;top:1021px" width="338" height="33" viewBox="0 0 338 33"><filter id="nz" x="0" y="0" width="100%" height="100%"><feTurbulence type="fractalNoise" baseFrequency="0.16 0.24" numOctaves="2" seed="4"/><feColorMatrix type="matrix" values="0.6 0 0 0 0.52  0.6 0 0 0 0.52  0.6 0 0 0 0.52  0 0 0 0 1"/></filter><rect x="0" y="0" width="338" height="33" filter="url(#nz)"/><path d="M0 0.500h338" stroke="#a8a8a8"/><path d="M0 32.300h338" stroke="#8c8c8c" stroke-width="1.400"/></svg>
<div class="a" style="left:0;top:1019px;width:78px;height:34px;background:#f0f0f0;border-right:1px solid #a0a0a0;border-bottom:1.4px solid #8c8c8c;border-bottom-right-radius:7px"></div>
<div class="a" style="left:79px;top:1021px;width:82px;height:32px;background:#f0f0f0;border:1px solid #a0a0a0;border-bottom:1.4px solid #8c8c8c;border-top-color:#a8a8a8;border-bottom-right-radius:7px;border-bottom-left-radius:4px"></div>
<div class="t" style="left:10px;top:1028px;font-size:14.4px;color:#222">Assistant</div>
<div class="t" style="left:88px;top:1029px;font-size:15px;color:#222">Toolpaths</div>
<div class="a" style="left:345px;top:53px;width:1229px;height:2px;background:linear-gradient(#a0a0a0 50%,#fff 50%)"></div>
<div class="a" style="left:347px;top:93px;width:1205px;height:26px;border:1px solid;border-color:#a0a0a0 #fff #8c8c8c #a0a0a0"></div>
<div class="a" style="left:347px;top:118px;width:25px;height:859px;border:1px solid;border-color:#8c8c8c #8c8c8c #a0a0a0 #a0a0a0"></div>
<div class="a" style="left:371px;top:94px;width:1px;height:24px;background:#8c8c8c"></div>
<svg style="left:347px;top:93px" width="25" height="25" viewBox="0 0 25 25" shape-rendering="crispEdges"><path d="M4 12.500h18" stroke="#b4b4b4" stroke-dasharray="2 1"/><path d="M10.500 7v12M14.500 7v12" stroke="#c0c0c0" stroke-dasharray="2 2"/></svg>
<svg style="left:0;top:0" width="1920" height="1080" viewBox="0 0 1920 1080" shape-rendering="crispEdges"><path d="M395.5 115v3 M403.5 115v3 M411.5 115v3 M420.5 112v6 M428.5 115v3 M436.5 115v3 M445.5 115v3 M453.5 115v3 M461.5 110v8 M470.5 115v3 M478.5 115v3 M486.5 115v3 M495.5 115v3 M503.5 112v6 M511.5 115v3 M520.5 115v3 M528.5 115v3 M536.5 115v3 M544.5 110v8 M553.5 115v3 M561.5 115v3 M569.5 115v3 M578.5 115v3 M586.5 112v6 M594.5 115v3 M603.5 115v3 M611.5 115v3 M619.5 115v3 M628.5 110v8 M636.5 115v3 M644.5 115v3 M653.5 115v3 M661.5 115v3 M669.5 112v6 M678.5 115v3 M686.5 115v3 M694.5 115v3 M703.5 115v3 M711.5 110v8 M719.5 115v3 M728.5 115v3 M736.5 115v3 M744.5 115v3 M753.5 112v6 M761.5 115v3 M769.5 115v3 M778.5 115v3 M786.5 115v3 M794.5 110v8 M802.5 115v3 M811.5 115v3 M819.5 115v3 M827.5 115v3 M836.5 112v6 M844.5 115v3 M852.5 115v3 M861.5 115v3 M869.5 115v3 M877.5 110v8 M886.5 115v3 M894.5 115v3 M902.5 115v3 M911.5 115v3 M919.5 112v6 M927.5 115v3 M936.5 115v3 M944.5 115v3 M952.5 115v3 M961.5 110v8 M969.5 115v3 M977.5 115v3 M986.5 115v3 M994.5 115v3 M1002.5 112v6 M1011.5 115v3 M1019.5 115v3 M1027.5 115v3 M1035.5 115v3 M1044.5 110v8 M1052.5 115v3 M1060.5 115v3 M1069.5 115v3 M1077.5 115v3 M1085.5 112v6 M1094.5 115v3 M1102.5 115v3 M1110.5 115v3 M1119.5 115v3 M1127.5 110v8 M1135.5 115v3 M1144.5 115v3 M1152.5 115v3 M1160.5 115v3 M1169.5 112v6 M1177.5 115v3 M1185.5 115v3 M1194.5 115v3 M1202.5 115v3 M1210.5 110v8 M1219.5 115v3 M1227.5 115v3 M1235.5 115v3 M1244.5 115v3 M1252.5 112v6 M1260.5 115v3 M1269.5 115v3 M1277.5 115v3 M1285.5 115v3 M1293.5 110v8 M1302.5 115v3 M1310.5 115v3 M1318.5 115v3 M1327.5 115v3 M1335.5 112v6 M1343.5 115v3 M1352.5 115v3 M1360.5 115v3 M1368.5 115v3 M1377.5 110v8 M1385.5 115v3 M1393.5 115v3 M1402.5 115v3 M1410.5 115v3 M1418.5 112v6 M1427.5 115v3 M1435.5 115v3 M1443.5 115v3 M1452.5 115v3 M1460.5 110v8 M1468.5 115v3 M1477.5 115v3 M1485.5 115v3 M1493.5 115v3 M1502.5 112v6 M1510.5 115v3 M1518.5 115v3 M1526.5 115v3 M1535.5 115v3 M1543.5 110v8 M385.500 95v19M378.500 110v8" stroke="#1c1c1c" stroke-width="1" fill="none"/><path d="M369 972.5h2 M364 964.5h7 M369 955.5h2 M369 947.5h2 M369 939.5h2 M369 930.5h2 M366 922.5h5 M369 914.5h2 M369 905.5h2 M369 897.5h2 M369 889.5h2 M364 880.5h7 M369 872.5h2 M369 864.5h2 M369 855.5h2 M369 847.5h2 M366 839.5h5 M369 830.5h2 M369 822.5h2 M369 814.5h2 M369 805.5h2 M364 797.5h7 M369 789.5h2 M369 781.5h2 M369 772.5h2 M369 764.5h2 M366 756.5h5 M369 747.5h2 M369 739.5h2 M369 731.5h2 M369 722.5h2 M364 714.5h7 M369 706.5h2 M369 697.5h2 M369 689.5h2 M369 681.5h2 M366 672.5h5 M369 664.5h2 M369 656.5h2 M369 647.5h2 M369 639.5h2 M364 631.5h7 M369 622.5h2 M369 614.5h2 M369 606.5h2 M369 597.5h2 M366 589.5h5 M369 581.5h2 M369 572.5h2 M369 564.5h2 M369 556.5h2 M364 548.5h7 M369 539.5h2 M369 531.5h2 M369 523.5h2 M369 514.5h2 M366 506.5h5 M369 498.5h2 M369 489.5h2 M369 481.5h2 M369 473.5h2 M364 464.5h7 M369 456.5h2 M369 448.5h2 M369 439.5h2 M369 431.5h2 M366 423.5h5 M369 414.5h2 M369 406.5h2 M369 398.5h2 M369 389.5h2 M364 381.5h7 M369 373.5h2 M369 364.5h2 M369 356.5h2 M369 348.5h2 M366 339.5h5 M369 331.5h2 M369 323.5h2 M369 314.5h2 M369 306.5h2 M364 298.5h7 M369 290.5h2 M369 281.5h2 M369 273.5h2 M369 265.5h2 M366 256.5h5 M369 248.5h2 M369 240.5h2 M369 231.5h2 M369 223.5h2 M364 215.5h7 M369 206.5h2 M369 198.5h2 M369 190.5h2 M369 181.5h2 M366 173.5h5 M369 165.5h2 M369 156.5h2 M369 148.5h2 M369 140.5h2 M364 131.5h7 M369 123.5h2 M358 131.500h13M358 130.500h13" stroke="#1c1c1c" stroke-width="1" fill="none"/></svg>
<div class="t" style="left:430.0px;top:96px;width:60px;text-align:center;font-size:13.5px;letter-spacing:-0.2px;color:#1c1c1c">-600</div>
<div class="t" style="left:513.2px;top:96px;width:60px;text-align:center;font-size:13.5px;letter-spacing:-0.2px;color:#1c1c1c">-500</div>
<div class="t" style="left:596.4px;top:96px;width:60px;text-align:center;font-size:13.5px;letter-spacing:-0.2px;color:#1c1c1c">-400</div>
<div class="t" style="left:679.6px;top:96px;width:60px;text-align:center;font-size:13.5px;letter-spacing:-0.2px;color:#1c1c1c">-300</div>
<div class="t" style="left:762.9px;top:96px;width:60px;text-align:center;font-size:13.5px;letter-spacing:-0.2px;color:#1c1c1c">-200</div>
<div class="t" style="left:846.1px;top:96px;width:60px;text-align:center;font-size:13.5px;letter-spacing:-0.2px;color:#1c1c1c">-100</div>
<div class="t" style="left:929.3px;top:96px;width:60px;text-align:center;font-size:13.5px;letter-spacing:-0.2px;color:#1c1c1c">0</div>
<div class="t" style="left:1012.5px;top:96px;width:60px;text-align:center;font-size:13.5px;letter-spacing:-0.2px;color:#1c1c1c">100</div>
<div class="t" style="left:1095.7px;top:96px;width:60px;text-align:center;font-size:13.5px;letter-spacing:-0.2px;color:#1c1c1c">200</div>
<div class="t" style="left:1179.0px;top:96px;width:60px;text-align:center;font-size:13.5px;letter-spacing:-0.2px;color:#1c1c1c">300</div>
<div class="t" style="left:1262.2px;top:96px;width:60px;text-align:center;font-size:13.5px;letter-spacing:-0.2px;color:#1c1c1c">400</div>
<div class="t" style="left:1345.4px;top:96px;width:60px;text-align:center;font-size:13.5px;letter-spacing:-0.2px;color:#1c1c1c">500</div>
<div class="t" style="left:1428.6px;top:96px;width:60px;text-align:center;font-size:13.5px;letter-spacing:-0.2px;color:#1c1c1c">600</div>
<div class="t" style="left:1496px;top:97px;font-size:11px;color:#1c1c1c">millimetres</div>
<div class="t" style="left:327px;top:873.9px;width:60px;height:14px;text-align:center;font-size:13.5px;letter-spacing:-0.2px;color:#1c1c1c;transform:rotate(-90deg);transform-origin:50% 50%">-400</div>
<div class="t" style="left:327px;top:790.7px;width:60px;height:14px;text-align:center;font-size:13.5px;letter-spacing:-0.2px;color:#1c1c1c;transform:rotate(-90deg);transform-origin:50% 50%">-300</div>
<div class="t" style="left:327px;top:707.4px;width:60px;height:14px;text-align:center;font-size:13.5px;letter-spacing:-0.2px;color:#1c1c1c;transform:rotate(-90deg);transform-origin:50% 50%">-200</div>
<div class="t" style="left:327px;top:624.2px;width:60px;height:14px;text-align:center;font-size:13.5px;letter-spacing:-0.2px;color:#1c1c1c;transform:rotate(-90deg);transform-origin:50% 50%">-100</div>
<div class="t" style="left:327px;top:541.0px;width:60px;height:14px;text-align:center;font-size:13.5px;letter-spacing:-0.2px;color:#1c1c1c;transform:rotate(-90deg);transform-origin:50% 50%">0</div>
<div class="t" style="left:327px;top:457.8px;width:60px;height:14px;text-align:center;font-size:13.5px;letter-spacing:-0.2px;color:#1c1c1c;transform:rotate(-90deg);transform-origin:50% 50%">100</div>
<div class="t" style="left:327px;top:374.6px;width:60px;height:14px;text-align:center;font-size:13.5px;letter-spacing:-0.2px;color:#1c1c1c;transform:rotate(-90deg);transform-origin:50% 50%">200</div>
<div class="t" style="left:327px;top:291.3px;width:60px;height:14px;text-align:center;font-size:13.5px;letter-spacing:-0.2px;color:#1c1c1c;transform:rotate(-90deg);transform-origin:50% 50%">300</div>
<div class="t" style="left:327px;top:208.1px;width:60px;height:14px;text-align:center;font-size:13.5px;letter-spacing:-0.2px;color:#1c1c1c;transform:rotate(-90deg);transform-origin:50% 50%">400</div>
<div class="t" style="left:327px;top:124.9px;width:60px;height:14px;text-align:center;font-size:13.5px;letter-spacing:-0.2px;color:#1c1c1c;transform:rotate(-90deg);transform-origin:50% 50%">500</div>
<div class="a" style="left:1551px;top:93px;width:21px;height:26px;background:#f0f0f0;border:1px solid;border-color:#fff #707070 #707070 #fff"></div>
<svg style="left:1551px;top:93px" width="21" height="26" viewBox="0 0 21 26"><path d="M5 9h3M9 9h3M13 9h2" stroke="#111" stroke-width="1.3"/><path d="M5 13h11l-5.500 5z" fill="#111"/></svg>
<div class="t" style="left:356px;top:63.5px;font-size:18.2px;font-weight:bold;color:#0a0a0a;letter-spacing:-0.3px;-webkit-text-stroke:0.4px #0a0a0a;transform:scaleX(0.86);transform-origin:0 0">3D</div>
<svg style="left:0;top:0" width="1920" height="100" viewBox="0 0 1920 100"><g transform="translate(393,72)"><path d="M7 7l2 1.500" stroke="#e0892c" stroke-width="4" stroke-linecap="round"/><circle r="7.7" fill="#c9ecf7" stroke="#7f9cc0" stroke-width="1.6"/><circle r="5.600" fill="none" stroke="#e9f8fd" stroke-width="1"/><path d="M-5 0h10M0 -5v10" stroke="#2f6472" stroke-width="2"/></g><g transform="translate(422.5,72)"><path d="M7 7l2 1.500" stroke="#e0892c" stroke-width="4" stroke-linecap="round"/><circle r="7.7" fill="#c9ecf7" stroke="#7f9cc0" stroke-width="1.6"/><circle r="5.600" fill="none" stroke="#e9f8fd" stroke-width="1"/><path d="M-5 0h10" stroke="#2f6472" stroke-width="2"/></g><g transform="translate(452,72)"><path d="M7 7l2 1.500" stroke="#e0892c" stroke-width="4" stroke-linecap="round"/><circle r="7.7" fill="#c9ecf7" stroke="#7f9cc0" stroke-width="1.6"/><circle r="5.600" fill="none" stroke="#e9f8fd" stroke-width="1"/><path d="M-4 -2a4 4 0 1 1 4 6" fill="none" stroke="#9a8a2a" stroke-width="2"/><path d="M-6.500 -1l3 3.500 1.500-4.500z" fill="#9a8a2a"/></g><g transform="translate(490,72)"><path d="M7 7l2 1.500" stroke="#e0892c" stroke-width="4" stroke-linecap="round"/><circle r="7.7" fill="#c9ecf7" stroke="#7f9cc0" stroke-width="1.6"/><circle r="5.600" fill="none" stroke="#e9f8fd" stroke-width="1"/><rect x="-5.500" y="-3.500" width="11" height="6" fill="#eef" stroke="#56788c" stroke-width="1"/><path d="M-3 -1.500v3M3 -1.500v3M0 -1v0.800M0 0.500v0.800" stroke="#3a5566" stroke-width="1"/></g><rect x="506.500" y="60.500" width="28" height="26" fill="#f4f4f4" stroke="#fff"/><path d="M506.500 86.500h28v-26" fill="none" stroke="#b0b0b0"/><g transform="translate(519,72)"><path d="M7 7l2 1.500" stroke="#e0892c" stroke-width="4" stroke-linecap="round"/><circle r="7.7" fill="#c9ecf7" stroke="#7f9cc0" stroke-width="1.6"/><circle r="5.600" fill="none" stroke="#e9f8fd" stroke-width="1"/><rect x="-4.500" y="-3.500" width="9" height="7" fill="#dff" stroke="#3e6070" stroke-width="1.600"/></g><path d="M538 73c0-7 5-11 11-10c6 1 8 6 6 10c3 3 5 5 3 7c-2 1.500-5 0-6-2c-2 1-4 1.500-7 1c-4-0.500-7-2-7-6z" fill="#9d9d9d"/><path d="M472.5 63v22" stroke="#a8a8a8" stroke-width="1.500"/><path d="M473.5 63v22" stroke="#fff" stroke-width="1"/><path d="M568.5 63v22" stroke="#a8a8a8" stroke-width="1.500"/><path d="M569.5 63v22" stroke="#fff" stroke-width="1"/><path d="M665.5 63v22" stroke="#a8a8a8" stroke-width="1.500"/><path d="M666.5 63v22" stroke="#fff" stroke-width="1"/><rect x="575.5" y="60.500" width="26" height="26" fill="#f6f6f6" stroke="#fbfbfb"/><path d="M575.5 86.500h26" stroke="#d0d0d0" fill="none"/><rect x="603.5" y="60.500" width="26" height="26" fill="#f6f6f6" stroke="#fbfbfb"/><path d="M603.5 86.500h26" stroke="#d0d0d0" fill="none"/><g transform="translate(588,73)"><path d="M-7 -8h8M-7 -5h3M-7 -2h2M-7 1h2M-7 4h3M-7 7h8" stroke="#333" stroke-width="1" stroke-dasharray="2 1"/><path d="M-5 0l6-6v3h6v6h-6v3z" fill="#5a5a5a" stroke="#111" stroke-width="1"/><path d="M0 -9.500h4.500v19h-9" fill="none" stroke="#444" stroke-width="0.800"/></g><g transform="translate(616,73)"><path d="M1 -8h8M4 -5h4M5 -2h3M5 1h3M4 4h4M1 7h8" stroke="#333" stroke-width="1" stroke-dasharray="2 1"/><path d="M5 0l-6-6v3h-6v6h6v3z" fill="#5a5a5a" stroke="#111" stroke-width="1"/><path d="M4 -9.500h5.500v19h-9" fill="none" stroke="#444" stroke-width="0.800"/></g><g transform="translate(645,73)"><path d="M-10 0l8-7v4h6v6h-6v4z" fill="#6f79c6" stroke="#5560a8" stroke-width="0.600"/><circle cx="3" cy="-1" r="5.500" fill="#cfe6f4" fill-opacity="0.850" stroke="#8aa3c0" stroke-width="1.200"/><path d="M7 3l3 3" stroke="#e0892c" stroke-width="3" stroke-linecap="round"/></g><path d="M680 74h92" stroke="#6a6a6a" stroke-width="1.600"/><path d="M680 75.500h92" stroke="#fff" stroke-width="1"/><path d="M774.500 63.500h10v19l-5 5" fill="#f0f0f0" stroke="none"/><path d="M784.500 63v19.500l-5 5" fill="none" stroke="#6e6e6e" stroke-width="1.400"/><path d="M774.500 63.500h9" stroke="#fff"/></svg>
<div class="a" style="left:1551px;top:119px;width:1px;height:858px;background:#f8f8f8"></div>
<div class="a" style="left:372px;top:976px;width:1180px;height:1px;background:#f8f8f8"></div>
<div class="a" style="left:1561px;top:140px;width:3px;height:815px;background:linear-gradient(90deg,#8a8a8a 66%,#d8d8d8 66%)"></div>
<div class="a" style="left:1572px;top:55px;width:1px;height:1000px;background:#fafafa"></div>
<div class="a" style="left:543px;top:130px;width:835.5px;height:834.5px;background:#ffff80;border:1.3px solid #1a1a00"></div>
<svg style="left:0;top:0" width="1920" height="1080" viewBox="0 0 1920 1080"><defs><radialGradient id="rb" cx="0.47" cy="0.45" r="0.56"><stop offset="0" stop-color="#ffffff"/><stop offset="0.4" stop-color="#f0f0f0"/><stop offset="0.78" stop-color="#b8b8b8"/><stop offset="1" stop-color="#7c7c7c"/></radialGradient><linearGradient id="bud" x1="0" y1="0" x2="0" y2="1"><stop offset="0" stop-color="#9c9c9c"/><stop offset="0.2" stop-color="#cfcfcf"/><stop offset="0.5" stop-color="#888888"/><stop offset="1" stop-color="#6a6a6a"/></linearGradient><linearGradient id="fdT" gradientUnits="userSpaceOnUse" x1="700" y1="0" x2="800" y2="0"><stop offset="0" stop-color="#202020" stop-opacity="0.62"/><stop offset="0.5" stop-color="#202020" stop-opacity="0.4"/><stop offset="1" stop-color="#202020" stop-opacity="0"/></linearGradient><filter id="rbl" x="-5%" y="-5%" width="110%" height="110%"><feGaussianBlur stdDeviation="0.7"/></filter><filter id="rbl2" x="-5%" y="-5%" width="110%" height="110%"><feGaussianBlur stdDeviation="2.2"/></filter></defs><g filter="url(#rbl)"><clipPath id="ptc"><path d="M646.0 525.0L641.2 521.8L636.6 518.1L632.1 514.0L627.8 509.6L623.4 504.9L619.0 500.0L616.7 497.1L614.8 494.3L613.4 491.5L612.3 488.7L611.7 485.9L611.5 483.0L611.5 473.0L611.9 469.8L613.1 467.0L615.4 464.9L618.7 463.3L623.2 462.3L629.0 462.0L634.3 462.3L639.2 463.1L643.9 464.2L648.5 465.4L653.1 466.6L658.0 467.5L663.0 468.2L668.0 468.8L672.8 469.3L677.6 469.6L682.2 469.8L686.7 469.8L689.3 469.4L691.9 468.6L694.5 467.6L697.0 466.5L699.5 465.4L702.0 464.5L704.9 464.9L707.8 465.4L710.6 466.0L713.4 466.6L716.4 467.1L719.5 467.5L725.8 468.1L732.0 468.2L738.1 468.1L743.8 467.8L749.2 467.2L754.0 466.5L760.8 465.2L767.4 463.7L773.8 462.0L780.1 460.2L786.4 458.2L792.7 456.0L799.3 453.4L805.7 450.7L812.0 447.8L818.2 444.8L824.6 441.7L831.0 438.5L837.9 435.0L844.7 431.7L851.2 428.4L857.7 425.2L863.9 422.0L870.0 419.0L895.0 406.0L897.0 408.4L899.0 410.7L901.1 412.9L903.3 415.0L905.6 417.0L908.0 419.0L911.0 421.5L914.1 424.0L917.2 426.4L920.5 428.6L923.9 430.8L927.6 432.8L932.4 434.8L937.6 436.4L943.0 437.8L948.8 438.8L955.0 439.6L961.5 440.0L968.0 439.6L974.2 438.8L980.0 437.8L985.4 436.4L990.6 434.8L995.4 432.8L999.1 430.8L1002.5 428.6L1005.8 426.4L1008.9 424.0L1012.0 421.5L1015.0 419.0L1017.4 417.0L1019.7 415.0L1021.9 412.9L1024.0 410.7L1026.0 408.4L1028.0 406.0L1053.0 419.0L1059.1 422.0L1065.3 425.2L1071.8 428.4L1078.3 431.7L1085.1 435.0L1092.0 438.5L1098.4 441.7L1104.8 444.8L1111.0 447.8L1117.3 450.7L1123.7 453.4L1130.3 456.0L1136.6 458.2L1142.9 460.2L1149.2 462.0L1155.6 463.7L1162.2 465.2L1169.0 466.5L1173.8 467.2L1179.2 467.8L1184.9 468.1L1191.0 468.2L1197.2 468.1L1203.5 467.5L1206.6 467.1L1209.6 466.6L1212.4 466.0L1215.2 465.4L1218.1 464.9L1221.0 464.5L1223.5 465.4L1226.0 466.5L1228.5 467.6L1231.1 468.6L1233.7 469.4L1236.3 469.8L1240.8 469.8L1245.4 469.6L1250.2 469.3L1255.0 468.8L1260.0 468.2L1265.0 467.5L1269.9 466.6L1274.5 465.4L1279.1 464.2L1283.8 463.1L1288.7 462.3L1294.0 462.0L1299.8 462.3L1304.3 463.3L1307.6 464.9L1309.9 467.0L1311.1 469.8L1311.5 473.0L1311.5 483.0L1311.3 485.9L1310.7 488.7L1309.6 491.5L1308.2 494.3L1306.3 497.1L1304.0 500.0L1299.6 504.9L1295.2 509.6L1290.9 514.0L1286.4 518.1L1281.8 521.8L1277.0 525.0z"/></clipPath><path d="M646.0 525.0L641.2 521.8L636.6 518.1L632.1 514.0L627.8 509.6L623.4 504.9L619.0 500.0L616.7 497.1L614.8 494.3L613.4 491.5L612.3 488.7L611.7 485.9L611.5 483.0L611.5 473.0L611.9 469.8L613.1 467.0L615.4 464.9L618.7 463.3L623.2 462.3L629.0 462.0L634.3 462.3L639.2 463.1L643.9 464.2L648.5 465.4L653.1 466.6L658.0 467.5L663.0 468.2L668.0 468.8L672.8 469.3L677.6 469.6L682.2 469.8L686.7 469.8L689.3 469.4L691.9 468.6L694.5 467.6L697.0 466.5L699.5 465.4L702.0 464.5L704.9 464.9L707.8 465.4L710.6 466.0L713.4 466.6L716.4 467.1L719.5 467.5L725.8 468.1L732.0 468.2L738.1 468.1L743.8 467.8L749.2 467.2L754.0 466.5L760.8 465.2L767.4 463.7L773.8 462.0L780.1 460.2L786.4 458.2L792.7 456.0L799.3 453.4L805.7 450.7L812.0 447.8L818.2 444.8L824.6 441.7L831.0 438.5L837.9 435.0L844.7 431.7L851.2 428.4L857.7 425.2L863.9 422.0L870.0 419.0L895.0 406.0L897.0 408.4L899.0 410.7L901.1 412.9L903.3 415.0L905.6 417.0L908.0 419.0L911.0 421.5L914.1 424.0L917.2 426.4L920.5 428.6L923.9 430.8L927.6 432.8L932.4 434.8L937.6 436.4L943.0 437.8L948.8 438.8L955.0 439.6L961.5 440.0L968.0 439.6L974.2 438.8L980.0 437.8L985.4 436.4L990.6 434.8L995.4 432.8L999.1 430.8L1002.5 428.6L1005.8 426.4L1008.9 424.0L1012.0 421.5L1015.0 419.0L1017.4 417.0L1019.7 415.0L1021.9 412.9L1024.0 410.7L1026.0 408.4L1028.0 406.0L1053.0 419.0L1059.1 422.0L1065.3 425.2L1071.8 428.4L1078.3 431.7L1085.1 435.0L1092.0 438.5L1098.4 441.7L1104.8 444.8L1111.0 447.8L1117.3 450.7L1123.7 453.4L1130.3 456.0L1136.6 458.2L1142.9 460.2L1149.2 462.0L1155.6 463.7L1162.2 465.2L1169.0 466.5L1173.8 467.2L1179.2 467.8L1184.9 468.1L1191.0 468.2L1197.2 468.1L1203.5 467.5L1206.6 467.1L1209.6 466.6L1212.4 466.0L1215.2 465.4L1218.1 464.9L1221.0 464.5L1223.5 465.4L1226.0 466.5L1228.5 467.6L1231.1 468.6L1233.7 469.4L1236.3 469.8L1240.8 469.8L1245.4 469.6L1250.2 469.3L1255.0 468.8L1260.0 468.2L1265.0 467.5L1269.9 466.6L1274.5 465.4L1279.1 464.2L1283.8 463.1L1288.7 462.3L1294.0 462.0L1299.8 462.3L1304.3 463.3L1307.6 464.9L1309.9 467.0L1311.1 469.8L1311.5 473.0L1311.5 483.0L1311.3 485.9L1310.7 488.7L1309.6 491.5L1308.2 494.3L1306.3 497.1L1304.0 500.0L1299.6 504.9L1295.2 509.6L1290.9 514.0L1286.4 518.1L1281.8 521.8L1277.0 525.0z" fill="#9c9c9c" stroke="#2e2e0c" stroke-width="2.4" stroke-linejoin="round"/><g clip-path="url(#ptc)"><path d="M646.0 525.0L641.2 521.8L636.6 518.1L632.1 514.0L627.8 509.6L623.4 504.9L619.0 500.0L616.7 497.1L614.8 494.3L613.4 491.5L612.3 488.7L611.7 485.9L611.5 483.0L611.5 473.0L611.9 469.8L613.1 467.0L615.4 464.9L618.7 463.3L623.2 462.3L629.0 462.0L634.3 462.3L639.2 463.1L643.9 464.2L648.5 465.4L653.1 466.6L658.0 467.5L663.0 468.2L668.0 468.8L672.8 469.3L677.6 469.6L682.2 469.8L686.7 469.8L689.3 469.4L691.9 468.6L694.5 467.6L697.0 466.5L699.5 465.4L702.0 464.5L704.9 464.9L707.8 465.4L710.6 466.0L713.4 466.6L716.4 467.1L719.5 467.5L725.8 468.1L732.0 468.2L738.1 468.1L743.8 467.8L749.2 467.2L754.0 466.5L760.8 465.2L767.4 463.7L773.8 462.0L780.1 460.2L786.4 458.2L792.7 456.0L799.3 453.4L805.7 450.7L812.0 447.8L818.2 444.8L824.6 441.7L831.0 438.5L837.9 435.0L844.7 431.7L851.2 428.4L857.7 425.2L863.9 422.0L870.0 419.0L895.0 406.0L897.0 408.4L899.0 410.7L901.1 412.9L903.3 415.0L905.6 417.0L908.0 419.0L911.0 421.5L914.1 424.0L917.2 426.4L920.5 428.6L923.9 430.8L927.6 432.8L932.4 434.8L937.6 436.4L943.0 437.8L948.8 438.8L955.0 439.6L961.5 440.0L968.0 439.6L974.2 438.8L980.0 437.8L985.4 436.4L990.6 434.8L995.4 432.8L999.1 430.8L1002.5 428.6L1005.8 426.4L1008.9 424.0L1012.0 421.5L1015.0 419.0L1017.4 417.0L1019.7 415.0L1021.9 412.9L1024.0 410.7L1026.0 408.4L1028.0 406.0L1053.0 419.0L1059.1 422.0L1065.3 425.2L1071.8 428.4L1078.3 431.7L1085.1 435.0L1092.0 438.5L1098.4 441.7L1104.8 444.8L1111.0 447.8L1117.3 450.7L1123.7 453.4L1130.3 456.0L1136.6 458.2L1142.9 460.2L1149.2 462.0L1155.6 463.7L1162.2 465.2L1169.0 466.5L1173.8 467.2L1179.2 467.8L1184.9 468.1L1191.0 468.2L1197.2 468.1L1203.5 467.5L1206.6 467.1L1209.6 466.6L1212.4 466.0L1215.2 465.4L1218.1 464.9L1221.0 464.5L1223.5 465.4L1226.0 466.5L1228.5 467.6L1231.1 468.6L1233.7 469.4L1236.3 469.8L1240.8 469.8L1245.4 469.6L1250.2 469.3L1255.0 468.8L1260.0 468.2L1265.0 467.5L1269.9 466.6L1274.5 465.4L1279.1 464.2L1283.8 463.1L1288.7 462.3L1294.0 462.0L1299.8 462.3L1304.3 463.3L1307.6 464.9L1309.9 467.0L1311.1 469.8L1311.5 473.0L1311.5 483.0L1311.3 485.9L1310.7 488.7L1309.6 491.5L1308.2 494.3L1306.3 497.1L1304.0 500.0L1299.6 504.9L1295.2 509.6L1290.9 514.0L1286.4 518.1L1281.8 521.8L1277.0 525.0z" fill="none" stroke="#7c7c7c" stroke-width="30" stroke-linejoin="round" filter="url(#rbl2)"/><path d="M646.0 525.0L641.2 521.8L636.6 518.1L632.1 514.0L627.8 509.6L623.4 504.9L619.0 500.0L616.7 497.1L614.8 494.3L613.4 491.5L612.3 488.7L611.7 485.9L611.5 483.0L611.5 473.0L611.9 469.8L613.1 467.0L615.4 464.9L618.7 463.3L623.2 462.3L629.0 462.0L634.3 462.3L639.2 463.1L643.9 464.2L648.5 465.4L653.1 466.6L658.0 467.5L663.0 468.2L668.0 468.8L672.8 469.3L677.6 469.6L682.2 469.8L686.7 469.8L689.3 469.4L691.9 468.6L694.5 467.6L697.0 466.5L699.5 465.4L702.0 464.5L704.9 464.9L707.8 465.4L710.6 466.0L713.4 466.6L716.4 467.1L719.5 467.5L725.8 468.1L732.0 468.2L738.1 468.1L743.8 467.8L749.2 467.2L754.0 466.5L760.8 465.2L767.4 463.7L773.8 462.0L780.1 460.2L786.4 458.2L792.7 456.0L799.3 453.4L805.7 450.7L812.0 447.8L818.2 444.8L824.6 441.7L831.0 438.5L837.9 435.0L844.7 431.7L851.2 428.4L857.7 425.2L863.9 422.0L870.0 419.0L895.0 406.0L897.0 408.4L899.0 410.7L901.1 412.9L903.3 415.0L905.6 417.0L908.0 419.0L911.0 421.5L914.1 424.0L917.2 426.4L920.5 428.6L923.9 430.8L927.6 432.8L932.4 434.8L937.6 436.4L943.0 437.8L948.8 438.8L955.0 439.6L961.5 440.0L968.0 439.6L974.2 438.8L980.0 437.8L985.4 436.4L990.6 434.8L995.4 432.8L999.1 430.8L1002.5 428.6L1005.8 426.4L1008.9 424.0L1012.0 421.5L1015.0 419.0L1017.4 417.0L1019.7 415.0L1021.9 412.9L1024.0 410.7L1026.0 408.4L1028.0 406.0L1053.0 419.0L1059.1 422.0L1065.3 425.2L1071.8 428.4L1078.3 431.7L1085.1 435.0L1092.0 438.5L1098.4 441.7L1104.8 444.8L1111.0 447.8L1117.3 450.7L1123.7 453.4L1130.3 456.0L1136.6 458.2L1142.9 460.2L1149.2 462.0L1155.6 463.7L1162.2 465.2L1169.0 466.5L1173.8 467.2L1179.2 467.8L1184.9 468.1L1191.0 468.2L1197.2 468.1L1203.5 467.5L1206.6 467.1L1209.6 466.6L1212.4 466.0L1215.2 465.4L1218.1 464.9L1221.0 464.5L1223.5 465.4L1226.0 466.5L1228.5 467.6L1231.1 468.6L1233.7 469.4L1236.3 469.8L1240.8 469.8L1245.4 469.6L1250.2 469.3L1255.0 468.8L1260.0 468.2L1265.0 467.5L1269.9 466.6L1274.5 465.4L1279.1 464.2L1283.8 463.1L1288.7 462.3L1294.0 462.0L1299.8 462.3L1304.3 463.3L1307.6 464.9L1309.9 467.0L1311.1 469.8L1311.5 473.0L1311.5 483.0L1311.3 485.9L1310.7 488.7L1309.6 491.5L1308.2 494.3L1306.3 497.1L1304.0 500.0L1299.6 504.9L1295.2 509.6L1290.9 514.0L1286.4 518.1L1281.8 521.8L1277.0 525.0z" fill="none" stroke="#868686" stroke-width="13" stroke-linejoin="round"/><path d="M646.0 525.0L641.2 521.8L636.6 518.1L632.1 514.0L627.8 509.6L623.4 504.9L619.0 500.0L616.7 497.1L614.8 494.3L613.4 491.5L612.3 488.7L611.7 485.9L611.5 483.0L611.5 473.0L611.9 469.8L613.1 467.0L615.4 464.9L618.7 463.3L623.2 462.3L629.0 462.0L634.3 462.3L639.2 463.1L643.9 464.2L648.5 465.4L653.1 466.6L658.0 467.5L663.0 468.2L668.0 468.8L672.8 469.3L677.6 469.6L682.2 469.8L686.7 469.8L689.3 469.4L691.9 468.6L694.5 467.6L697.0 466.5L699.5 465.4L702.0 464.5L704.9 464.9L707.8 465.4L710.6 466.0L713.4 466.6L716.4 467.1L719.5 467.5L725.8 468.1L732.0 468.2L738.1 468.1L743.8 467.8L749.2 467.2L754.0 466.5L760.8 465.2L767.4 463.7L773.8 462.0L780.1 460.2L786.4 458.2L792.7 456.0L799.3 453.4L805.7 450.7L812.0 447.8L818.2 444.8L824.6 441.7L831.0 438.5L837.9 435.0L844.7 431.7L851.2 428.4L857.7 425.2L863.9 422.0L870.0 419.0L895.0 406.0L897.0 408.4L899.0 410.7L901.1 412.9L903.3 415.0L905.6 417.0L908.0 419.0L911.0 421.5L914.1 424.0L917.2 426.4L920.5 428.6L923.9 430.8L927.6 432.8L932.4 434.8L937.6 436.4L943.0 437.8L948.8 438.8L955.0 439.6L961.5 440.0L968.0 439.6L974.2 438.8L980.0 437.8L985.4 436.4L990.6 434.8L995.4 432.8L999.1 430.8L1002.5 428.6L1005.8 426.4L1008.9 424.0L1012.0 421.5L1015.0 419.0L1017.4 417.0L1019.7 415.0L1021.9 412.9L1024.0 410.7L1026.0 408.4L1028.0 406.0L1053.0 419.0L1059.1 422.0L1065.3 425.2L1071.8 428.4L1078.3 431.7L1085.1 435.0L1092.0 438.5L1098.4 441.7L1104.8 444.8L1111.0 447.8L1117.3 450.7L1123.7 453.4L1130.3 456.0L1136.6 458.2L1142.9 460.2L1149.2 462.0L1155.6 463.7L1162.2 465.2L1169.0 466.5L1173.8 467.2L1179.2 467.8L1184.9 468.1L1191.0 468.2L1197.2 468.1L1203.5 467.5L1206.6 467.1L1209.6 466.6L1212.4 466.0L1215.2 465.4L1218.1 464.9L1221.0 464.5L1223.5 465.4L1226.0 466.5L1228.5 467.6L1231.1 468.6L1233.7 469.4L1236.3 469.8L1240.8 469.8L1245.4 469.6L1250.2 469.3L1255.0 468.8L1260.0 468.2L1265.0 467.5L1269.9 466.6L1274.5 465.4L1279.1 464.2L1283.8 463.1L1288.7 462.3L1294.0 462.0L1299.8 462.3L1304.3 463.3L1307.6 464.9L1309.9 467.0L1311.1 469.8L1311.5 473.0L1311.5 483.0L1311.3 485.9L1310.7 488.7L1309.6 491.5L1308.2 494.3L1306.3 497.1L1304.0 500.0L1299.6 504.9L1295.2 509.6L1290.9 514.0L1286.4 518.1L1281.8 521.8L1277.0 525.0z" fill="none" stroke="#d2d2d2" stroke-width="8.5" stroke-linejoin="round"/><path d="M646.0 525.0L641.2 521.8L636.6 518.1L632.1 514.0L627.8 509.6L623.4 504.9L619.0 500.0L616.7 497.1L614.8 494.3L613.4 491.5L612.3 488.7L611.7 485.9L611.5 483.0L611.5 473.0L611.9 469.8L613.1 467.0L615.4 464.9L618.7 463.3L623.2 462.3L629.0 462.0L634.3 462.3L639.2 463.1L643.9 464.2L648.5 465.4L653.1 466.6L658.0 467.5L663.0 468.2L668.0 468.8L672.8 469.3L677.6 469.6L682.2 469.8L686.7 469.8L689.3 469.4L691.9 468.6L694.5 467.6L697.0 466.5L699.5 465.4L702.0 464.5L704.9 464.9L707.8 465.4L710.6 466.0L713.4 466.6L716.4 467.1L719.5 467.5L725.8 468.1L732.0 468.2L738.1 468.1L743.8 467.8L749.2 467.2L754.0 466.5L760.8 465.2L767.4 463.7L773.8 462.0L780.1 460.2L786.4 458.2L792.7 456.0L799.3 453.4L805.7 450.7L812.0 447.8L818.2 444.8L824.6 441.7L831.0 438.5L837.9 435.0L844.7 431.7L851.2 428.4L857.7 425.2L863.9 422.0L870.0 419.0L895.0 406.0L897.0 408.4L899.0 410.7L901.1 412.9L903.3 415.0L905.6 417.0L908.0 419.0L911.0 421.5L914.1 424.0L917.2 426.4L920.5 428.6L923.9 430.8L927.6 432.8L932.4 434.8L937.6 436.4L943.0 437.8L948.8 438.8L955.0 439.6L961.5 440.0L968.0 439.6L974.2 438.8L980.0 437.8L985.4 436.4L990.6 434.8L995.4 432.8L999.1 430.8L1002.5 428.6L1005.8 426.4L1008.9 424.0L1012.0 421.5L1015.0 419.0L1017.4 417.0L1019.7 415.0L1021.9 412.9L1024.0 410.7L1026.0 408.4L1028.0 406.0L1053.0 419.0L1059.1 422.0L1065.3 425.2L1071.8 428.4L1078.3 431.7L1085.1 435.0L1092.0 438.5L1098.4 441.7L1104.8 444.8L1111.0 447.8L1117.3 450.7L1123.7 453.4L1130.3 456.0L1136.6 458.2L1142.9 460.2L1149.2 462.0L1155.6 463.7L1162.2 465.2L1169.0 466.5L1173.8 467.2L1179.2 467.8L1184.9 468.1L1191.0 468.2L1197.2 468.1L1203.5 467.5L1206.6 467.1L1209.6 466.6L1212.4 466.0L1215.2 465.4L1218.1 464.9L1221.0 464.5L1223.5 465.4L1226.0 466.5L1228.5 467.6L1231.1 468.6L1233.7 469.4L1236.3 469.8L1240.8 469.8L1245.4 469.6L1250.2 469.3L1255.0 468.8L1260.0 468.2L1265.0 467.5L1269.9 466.6L1274.5 465.4L1279.1 464.2L1283.8 463.1L1288.7 462.3L1294.0 462.0L1299.8 462.3L1304.3 463.3L1307.6 464.9L1309.9 467.0L1311.1 469.8L1311.5 473.0L1311.5 483.0L1311.3 485.9L1310.7 488.7L1309.6 491.5L1308.2 494.3L1306.3 497.1L1304.0 500.0L1299.6 504.9L1295.2 509.6L1290.9 514.0L1286.4 518.1L1281.8 521.8L1277.0 525.0z" fill="none" stroke="#a8a8a8" stroke-width="2.2" stroke-linejoin="round"/></g><clipPath id="pbc"><path d="M606.7 796.5L606.7 731.0L614.2 731.8L621.6 732.5L628.8 733.2L636.0 734.0L643.0 734.8L650.0 735.5L660.0 736.4L669.9 737.2L679.6 737.8L689.1 738.2L698.3 738.4L707.0 738.5L718.3 738.4L729.1 738.0L739.6 737.4L749.9 736.6L760.0 735.7L770.0 734.5L780.8 732.9L791.3 731.0L801.5 729.0L811.3 726.8L820.8 724.5L830.0 722.0L834.0 720.7L838.0 719.3L841.9 717.9L845.6 716.3L849.3 714.7L852.8 713.0L895.0 696.5L897.1 698.7L899.3 700.8L901.6 702.8L904.0 704.7L906.5 706.4L909.0 708.0L912.0 710.5L915.0 713.0L918.0 715.4L920.9 717.7L923.8 719.9L926.7 722.0L930.4 724.3L934.2 726.4L938.0 728.1L941.9 729.5L945.7 730.6L949.5 731.5L951.7 731.9L953.8 732.1L955.9 732.4L957.8 732.5L959.7 732.6L961.5 732.6L963.3 732.6L965.2 732.5L967.1 732.4L969.2 732.1L971.3 731.9L973.5 731.5L977.3 730.6L981.1 729.5L985.0 728.1L988.8 726.4L992.6 724.3L996.3 722.0L999.2 719.9L1002.1 717.7L1005.0 715.4L1008.0 713.0L1011.0 710.5L1014.0 708.0L1016.5 706.4L1019.0 704.7L1021.4 702.8L1023.7 700.8L1025.9 698.7L1028.0 696.5L1070.2 713.0L1073.7 714.7L1077.4 716.3L1081.2 717.9L1085.0 719.3L1089.0 720.7L1093.0 722.0L1102.2 724.5L1111.7 726.8L1121.5 729.0L1131.7 731.0L1142.2 732.9L1153.0 734.5L1163.0 735.7L1173.1 736.6L1183.4 737.4L1193.9 738.0L1204.7 738.4L1216.0 738.5L1224.7 738.4L1233.9 738.2L1243.4 737.8L1253.1 737.2L1263.0 736.4L1273.0 735.5L1280.0 734.8L1287.0 734.0L1294.2 733.2L1301.4 732.5L1308.8 731.8L1316.3 731.0L1316.3 796.5z"/></clipPath><path d="M606.7 796.5L606.7 731.0L614.2 731.8L621.6 732.5L628.8 733.2L636.0 734.0L643.0 734.8L650.0 735.5L660.0 736.4L669.9 737.2L679.6 737.8L689.1 738.2L698.3 738.4L707.0 738.5L718.3 738.4L729.1 738.0L739.6 737.4L749.9 736.6L760.0 735.7L770.0 734.5L780.8 732.9L791.3 731.0L801.5 729.0L811.3 726.8L820.8 724.5L830.0 722.0L834.0 720.7L838.0 719.3L841.9 717.9L845.6 716.3L849.3 714.7L852.8 713.0L895.0 696.5L897.1 698.7L899.3 700.8L901.6 702.8L904.0 704.7L906.5 706.4L909.0 708.0L912.0 710.5L915.0 713.0L918.0 715.4L920.9 717.7L923.8 719.9L926.7 722.0L930.4 724.3L934.2 726.4L938.0 728.1L941.9 729.5L945.7 730.6L949.5 731.5L951.7 731.9L953.8 732.1L955.9 732.4L957.8 732.5L959.7 732.6L961.5 732.6L963.3 732.6L965.2 732.5L967.1 732.4L969.2 732.1L971.3 731.9L973.5 731.5L977.3 730.6L981.1 729.5L985.0 728.1L988.8 726.4L992.6 724.3L996.3 722.0L999.2 719.9L1002.1 717.7L1005.0 715.4L1008.0 713.0L1011.0 710.5L1014.0 708.0L1016.5 706.4L1019.0 704.7L1021.4 702.8L1023.7 700.8L1025.9 698.7L1028.0 696.5L1070.2 713.0L1073.7 714.7L1077.4 716.3L1081.2 717.9L1085.0 719.3L1089.0 720.7L1093.0 722.0L1102.2 724.5L1111.7 726.8L1121.5 729.0L1131.7 731.0L1142.2 732.9L1153.0 734.5L1163.0 735.7L1173.1 736.6L1183.4 737.4L1193.9 738.0L1204.7 738.4L1216.0 738.5L1224.7 738.4L1233.9 738.2L1243.4 737.8L1253.1 737.2L1263.0 736.4L1273.0 735.5L1280.0 734.8L1287.0 734.0L1294.2 733.2L1301.4 732.5L1308.8 731.8L1316.3 731.0L1316.3 796.5z" fill="#7e7e7e" stroke="#2e2e0c" stroke-width="2.4" stroke-linejoin="round"/><g clip-path="url(#pbc)"><path d="M606.7 796.5L606.7 731.0L614.2 731.8L621.6 732.5L628.8 733.2L636.0 734.0L643.0 734.8L650.0 735.5L660.0 736.4L669.9 737.2L679.6 737.8L689.1 738.2L698.3 738.4L707.0 738.5L718.3 738.4L729.1 738.0L739.6 737.4L749.9 736.6L760.0 735.7L770.0 734.5L780.8 732.9L791.3 731.0L801.5 729.0L811.3 726.8L820.8 724.5L830.0 722.0L834.0 720.7L838.0 719.3L841.9 717.9L845.6 716.3L849.3 714.7L852.8 713.0L895.0 696.5L897.1 698.7L899.3 700.8L901.6 702.8L904.0 704.7L906.5 706.4L909.0 708.0L912.0 710.5L915.0 713.0L918.0 715.4L920.9 717.7L923.8 719.9L926.7 722.0L930.4 724.3L934.2 726.4L938.0 728.1L941.9 729.5L945.7 730.6L949.5 731.5L951.7 731.9L953.8 732.1L955.9 732.4L957.8 732.5L959.7 732.6L961.5 732.6L963.3 732.6L965.2 732.5L967.1 732.4L969.2 732.1L971.3 731.9L973.5 731.5L977.3 730.6L981.1 729.5L985.0 728.1L988.8 726.4L992.6 724.3L996.3 722.0L999.2 719.9L1002.1 717.7L1005.0 715.4L1008.0 713.0L1011.0 710.5L1014.0 708.0L1016.5 706.4L1019.0 704.7L1021.4 702.8L1023.7 700.8L1025.9 698.7L1028.0 696.5L1070.2 713.0L1073.7 714.7L1077.4 716.3L1081.2 717.9L1085.0 719.3L1089.0 720.7L1093.0 722.0L1102.2 724.5L1111.7 726.8L1121.5 729.0L1131.7 731.0L1142.2 732.9L1153.0 734.5L1163.0 735.7L1173.1 736.6L1183.4 737.4L1193.9 738.0L1204.7 738.4L1216.0 738.5L1224.7 738.4L1233.9 738.2L1243.4 737.8L1253.1 737.2L1263.0 736.4L1273.0 735.5L1280.0 734.8L1287.0 734.0L1294.2 733.2L1301.4 732.5L1308.8 731.8L1316.3 731.0L1316.3 796.5z" fill="none" stroke="#696969" stroke-width="22" stroke-linejoin="round" filter="url(#rbl2)"/><path d="M606.7 796.5L606.7 731.0L614.2 731.8L621.6 732.5L628.8 733.2L636.0 734.0L643.0 734.8L650.0 735.5L660.0 736.4L669.9 737.2L679.6 737.8L689.1 738.2L698.3 738.4L707.0 738.5L718.3 738.4L729.1 738.0L739.6 737.4L749.9 736.6L760.0 735.7L770.0 734.5L780.8 732.9L791.3 731.0L801.5 729.0L811.3 726.8L820.8 724.5L830.0 722.0L834.0 720.7L838.0 719.3L841.9 717.9L845.6 716.3L849.3 714.7L852.8 713.0L895.0 696.5L897.1 698.7L899.3 700.8L901.6 702.8L904.0 704.7L906.5 706.4L909.0 708.0L912.0 710.5L915.0 713.0L918.0 715.4L920.9 717.7L923.8 719.9L926.7 722.0L930.4 724.3L934.2 726.4L938.0 728.1L941.9 729.5L945.7 730.6L949.5 731.5L951.7 731.9L953.8 732.1L955.9 732.4L957.8 732.5L959.7 732.6L961.5 732.6L963.3 732.6L965.2 732.5L967.1 732.4L969.2 732.1L971.3 731.9L973.5 731.5L977.3 730.6L981.1 729.5L985.0 728.1L988.8 726.4L992.6 724.3L996.3 722.0L999.2 719.9L1002.1 717.7L1005.0 715.4L1008.0 713.0L1011.0 710.5L1014.0 708.0L1016.5 706.4L1019.0 704.7L1021.4 702.8L1023.7 700.8L1025.9 698.7L1028.0 696.5L1070.2 713.0L1073.7 714.7L1077.4 716.3L1081.2 717.9L1085.0 719.3L1089.0 720.7L1093.0 722.0L1102.2 724.5L1111.7 726.8L1121.5 729.0L1131.7 731.0L1142.2 732.9L1153.0 734.5L1163.0 735.7L1173.1 736.6L1183.4 737.4L1193.9 738.0L1204.7 738.4L1216.0 738.5L1224.7 738.4L1233.9 738.2L1243.4 737.8L1253.1 737.2L1263.0 736.4L1273.0 735.5L1280.0 734.8L1287.0 734.0L1294.2 733.2L1301.4 732.5L1308.8 731.8L1316.3 731.0L1316.3 796.5z" fill="none" stroke="#4e4e4e" stroke-width="9.5" stroke-linejoin="round"/><path d="M606.7 796.5L606.7 731.0L614.2 731.8L621.6 732.5L628.8 733.2L636.0 734.0L643.0 734.8L650.0 735.5L660.0 736.4L669.9 737.2L679.6 737.8L689.1 738.2L698.3 738.4L707.0 738.5L718.3 738.4L729.1 738.0L739.6 737.4L749.9 736.6L760.0 735.7L770.0 734.5L780.8 732.9L791.3 731.0L801.5 729.0L811.3 726.8L820.8 724.5L830.0 722.0L834.0 720.7L838.0 719.3L841.9 717.9L845.6 716.3L849.3 714.7L852.8 713.0L895.0 696.5L897.1 698.7L899.3 700.8L901.6 702.8L904.0 704.7L906.5 706.4L909.0 708.0L912.0 710.5L915.0 713.0L918.0 715.4L920.9 717.7L923.8 719.9L926.7 722.0L930.4 724.3L934.2 726.4L938.0 728.1L941.9 729.5L945.7 730.6L949.5 731.5L951.7 731.9L953.8 732.1L955.9 732.4L957.8 732.5L959.7 732.6L961.5 732.6L963.3 732.6L965.2 732.5L967.1 732.4L969.2 732.1L971.3 731.9L973.5 731.5L977.3 730.6L981.1 729.5L985.0 728.1L988.8 726.4L992.6 724.3L996.3 722.0L999.2 719.9L1002.1 717.7L1005.0 715.4L1008.0 713.0L1011.0 710.5L1014.0 708.0L1016.5 706.4L1019.0 704.7L1021.4 702.8L1023.7 700.8L1025.9 698.7L1028.0 696.5L1070.2 713.0L1073.7 714.7L1077.4 716.3L1081.2 717.9L1085.0 719.3L1089.0 720.7L1093.0 722.0L1102.2 724.5L1111.7 726.8L1121.5 729.0L1131.7 731.0L1142.2 732.9L1153.0 734.5L1163.0 735.7L1173.1 736.6L1183.4 737.4L1193.9 738.0L1204.7 738.4L1216.0 738.5L1224.7 738.4L1233.9 738.2L1243.4 737.8L1253.1 737.2L1263.0 736.4L1273.0 735.5L1280.0 734.8L1287.0 734.0L1294.2 733.2L1301.4 732.5L1308.8 731.8L1316.3 731.0L1316.3 796.5z" fill="none" stroke="#6a6a6a" stroke-width="7" stroke-linejoin="round"/><path d="M606.7 796.5L606.7 731.0L614.2 731.8L621.6 732.5L628.8 733.2L636.0 734.0L643.0 734.8L650.0 735.5L660.0 736.4L669.9 737.2L679.6 737.8L689.1 738.2L698.3 738.4L707.0 738.5L718.3 738.4L729.1 738.0L739.6 737.4L749.9 736.6L760.0 735.7L770.0 734.5L780.8 732.9L791.3 731.0L801.5 729.0L811.3 726.8L820.8 724.5L830.0 722.0L834.0 720.7L838.0 719.3L841.9 717.9L845.6 716.3L849.3 714.7L852.8 713.0L895.0 696.5L897.1 698.7L899.3 700.8L901.6 702.8L904.0 704.7L906.5 706.4L909.0 708.0L912.0 710.5L915.0 713.0L918.0 715.4L920.9 717.7L923.8 719.9L926.7 722.0L930.4 724.3L934.2 726.4L938.0 728.1L941.9 729.5L945.7 730.6L949.5 731.5L951.7 731.9L953.8 732.1L955.9 732.4L957.8 732.5L959.7 732.6L961.5 732.6L963.3 732.6L965.2 732.5L967.1 732.4L969.2 732.1L971.3 731.9L973.5 731.5L977.3 730.6L981.1 729.5L985.0 728.1L988.8 726.4L992.6 724.3L996.3 722.0L999.2 719.9L1002.1 717.7L1005.0 715.4L1008.0 713.0L1011.0 710.5L1014.0 708.0L1016.5 706.4L1019.0 704.7L1021.4 702.8L1023.7 700.8L1025.9 698.7L1028.0 696.5L1070.2 713.0L1073.7 714.7L1077.4 716.3L1081.2 717.9L1085.0 719.3L1089.0 720.7L1093.0 722.0L1102.2 724.5L1111.7 726.8L1121.5 729.0L1131.7 731.0L1142.2 732.9L1153.0 734.5L1163.0 735.7L1173.1 736.6L1183.4 737.4L1193.9 738.0L1204.7 738.4L1216.0 738.5L1224.7 738.4L1233.9 738.2L1243.4 737.8L1253.1 737.2L1263.0 736.4L1273.0 735.5L1280.0 734.8L1287.0 734.0L1294.2 733.2L1301.4 732.5L1308.8 731.8L1316.3 731.0L1316.3 796.5z" fill="none" stroke="#363636" stroke-width="2.6" stroke-linejoin="round"/><rect x="600" y="783" width="730" height="9" fill="#242424" filter="url(#rbl2)"/><rect x="600" y="792" width="730" height="5" fill="#646464"/><rect x="955" y="740" width="13" height="46" fill="#6a6a6a" filter="url(#rbl2)" opacity="0.45"/></g><g id="lh0"><g transform="translate(673 433)"><path d="M-13-15c3-3 7-3 10 0c3-4 9-5 13-2l5 4-6 8c4 4 7 10 7 16l-7 2-3 8-8-3-6 3c-4-4-5-10-3-15l-6-5c-2-6 0-12 4-16z" fill="#5a5a5a" stroke="#2e2e0c" stroke-width="2"/><path d="M-9-10c2 3 4 5 8 6M-1-12c0 4 0 7 2 10M9-11c-3 3-5 6-5 10" fill="none" stroke="#7e7e7e" stroke-width="3"/><path d="M-8 8c3 3 5 8 5 13M2 6c2 5 4 10 4 14M8 2c3 3 6 8 7 13" fill="none" stroke="#777" stroke-width="3"/><path d="M-12 6c8-1 15-4 21-10" fill="none" stroke="#a8a8a8" stroke-width="2.2"/><path d="M-6 12l-2 8M5 12l1 10M11 9l5 7" stroke="#3c3c3c" stroke-width="1.6"/></g><ellipse cx="615" cy="522.5" rx="12.0" ry="12.0" fill="#2e2e0c"/><ellipse cx="656.5" cy="447.5" rx="13.5" ry="11.799999999999999" fill="#2e2e0c"/><ellipse cx="693.3" cy="419" rx="12.799999999999999" ry="12.799999999999999" fill="#2e2e0c"/><ellipse cx="933" cy="397.8" rx="11.799999999999999" ry="11.799999999999999" fill="#2e2e0c"/><path d="M626 527 624.1 528.6 621.5 531 618.4 533.4 615 535 611.4 535.8 607.3 536.2 603.1 536 598.7 535 594.1 533.2 589.2 530.6 584.4 527.4 580 523.7 575.9 519.5 572 514.6 568.7 509.3 566 503.7 564 497.6 562.7 491 562.1 484.2 562.5 477.5 564.1 470.7 566.7 463.7 570 457 573.7 451 577.7 445.8 582.2 441.3 587.2 437.2 592.5 433.7 598.3 430.6 604.6 428 611.1 425.9 617.5 424.4 624 423.6 630.6 423.6 636.9 423.9 642.5 424.4 647.3 425 651.6 425.9 655.4 427.1 658.7 428.7 661.5 430.8 663.9 433.4 665.8 436.2 667.5 438.7 668.9 441 670 443.2 670.7 445.3 671 447.5 670.5 449.9 669.5 452.6 668.3 454.9 667.5 456.5 656 447.5 656 447.5 656 447.5 656 447.5 656 447.5 656 447.5 656 447.5 656 447.5 656 447.5 656.4 447.5 657 447.5 657.1 447.5 656 447.5 653.3 447.3 649.4 447 644.8 446.8 640 447 634.7 447.8 628.9 448.9 623.1 450.2 618 451.5 613.9 452.7 610.3 453.9 607.1 455.3 604 457 600.9 459.1 598.1 461.5 595.4 464.1 593 467 590.7 470.2 588.6 473.6 586.9 477.3 586 481 586.2 485 587.1 489.2 588.5 493.4 590 497 591.5 500 593.2 502.5 595 504.8 597 507 599.1 509.2 601.4 511.2 603.7 513.1 606 515 608.5 517.1 611.1 519.2 613.4 521.2 615 522.5 615.6 523 615.6 523 615.2 522.7 615 522.5z" fill="none" stroke="#2e2e0c" stroke-width="2.6" stroke-linejoin="round"/><path d="M626 527 624.1 528.6 621.5 531 618.4 533.4 615 535 611.4 535.8 607.3 536.2 603.1 536 598.7 535 594.1 533.2 589.2 530.6 584.4 527.4 580 523.7 575.9 519.5 572 514.6 568.7 509.3 566 503.7 564 497.6 562.7 491 562.1 484.2 562.5 477.5 564.1 470.7 566.7 463.7 570 457 573.7 451 577.7 445.8 582.2 441.3 587.2 437.2 592.5 433.7 598.3 430.6 604.6 428 611.1 425.9 617.5 424.4 624 423.6 630.6 423.6 636.9 423.9 642.5 424.4 647.3 425 651.6 425.9 655.4 427.1 658.7 428.7 661.5 430.8 663.9 433.4 665.8 436.2 667.5 438.7 668.9 441 670 443.2 670.7 445.3 671 447.5 670.5 449.9 669.5 452.6 668.3 454.9 667.5 456.5 656 447.5 656 447.5 656 447.5 656 447.5 656 447.5 656 447.5 656 447.5 656 447.5 656 447.5 656.4 447.5 657 447.5 657.1 447.5 656 447.5 653.3 447.3 649.4 447 644.8 446.8 640 447 634.7 447.8 628.9 448.9 623.1 450.2 618 451.5 613.9 452.7 610.3 453.9 607.1 455.3 604 457 600.9 459.1 598.1 461.5 595.4 464.1 593 467 590.7 470.2 588.6 473.6 586.9 477.3 586 481 586.2 485 587.1 489.2 588.5 493.4 590 497 591.5 500 593.2 502.5 595 504.8 597 507 599.1 509.2 601.4 511.2 603.7 513.1 606 515 608.5 517.1 611.1 519.2 613.4 521.2 615 522.5 615.6 523 615.6 523 615.2 522.7 615 522.5z" fill="#bababa"/><path d="M625.2 526.7 623.5 528.2 621.1 530.4 618.2 532.6 615 534 611.5 534.7 607.6 534.9 603.5 534.5 599.3 533.5 594.8 531.6 590.1 529.1 585.5 526 581.3 522.4 577.4 518.3 573.7 513.7 570.4 508.6 567.8 503.2 565.9 497.3 564.6 490.9 563.9 484.3 564.3 477.8 565.8 471.2 568.4 464.5 571.6 458 575.2 452.2 579.1 447.2 583.5 442.8 588.2 438.9 593.4 435.5 599 432.5 605.1 430 611.3 427.9 617.5 426.5 623.9 425.7 630.4 425.5 636.7 425.7 642.3 426.1 647.1 426.7 651.4 427.5 655.2 428.7 658.5 430.1 661.2 432.1 663.4 434.5 665.1 437 666.6 439.4 667.9 441.5 668.9 443.5 669.6 445.5 669.8 447.5 669.4 449.8 668.4 452.2 667.3 454.3 666.6 455.8 656 447.5 656 447.5 656 447.5 656 447.5 656 447.5 656 447.5 656 447.5 656 447.5 656 447.5 656.4 447.5 657 447.5 657.1 447.5 656 447.5 653.3 447.3 649.4 447 644.8 446.8 640 447 634.7 447.8 628.9 448.9 623.1 450.2 618 451.5 613.9 452.7 610.3 453.9 607.1 455.3 604 457 600.9 459.1 598.1 461.5 595.4 464.1 593 467 590.7 470.2 588.6 473.6 586.9 477.3 586 481 586.2 485 587.1 489.2 588.5 493.4 590 497 591.5 500 593.2 502.5 595 504.8 597 507 599.1 509.2 601.4 511.2 603.7 513.1 606 515 608.5 517.1 611.1 519.2 613.4 521.2 615 522.5 615.6 523 615.6 523 615.2 522.7 615 522.5z" fill="#e2e2e2"/><path d="M624.3 526.3 622.8 527.7 620.6 529.8 618 531.8 615 533.1 611.7 533.6 607.9 533.6 603.9 533.1 599.8 531.9 595.6 530.1 591.1 527.6 586.7 524.6 582.6 521.1 578.9 517.2 575.3 512.8 572.2 507.9 569.7 502.7 567.8 496.9 566.4 490.7 565.8 484.3 566.1 478 567.6 471.7 570.1 465.2 573.2 459 576.7 453.5 580.4 448.7 584.7 444.4 589.3 440.6 594.3 437.3 599.7 434.4 605.5 432 611.5 430 617.6 428.6 623.8 427.7 630.3 427.4 636.5 427.6 642.1 427.9 647 428.4 651.3 429.2 655.1 430.2 658.3 431.6 660.9 433.4 662.8 435.6 664.4 437.9 665.7 440.1 666.9 442 667.9 443.8 668.5 445.7 668.7 447.5 668.3 449.6 667.4 451.8 666.4 453.7 665.7 455.1 656 447.5 656 447.5 656 447.5 656 447.5 656 447.5 656 447.5 656 447.5 656 447.5 656 447.5 656.4 447.5 657 447.5 657.1 447.5 656 447.5 653.3 447.3 649.4 447 644.8 446.8 640 447 634.7 447.8 628.9 448.9 623.1 450.2 618 451.5 613.9 452.7 610.3 453.9 607.1 455.3 604 457 600.9 459.1 598.1 461.5 595.4 464.1 593 467 590.7 470.2 588.6 473.6 586.9 477.3 586 481 586.2 485 587.1 489.2 588.5 493.4 590 497 591.5 500 593.2 502.5 595 504.8 597 507 599.1 509.2 601.4 511.2 603.7 513.1 606 515 608.5 517.1 611.1 519.2 613.4 521.2 615 522.5 615.6 523 615.6 523 615.2 522.7 615 522.5z" fill="#eeeeee"/><path d="M623.5 526 622.1 527.3 620.1 529.1 617.7 531 615 532.1 611.8 532.4 608.2 532.3 604.3 531.6 600.4 530.4 596.3 528.5 592 526.1 587.8 523.2 583.9 519.8 580.3 516.1 576.9 511.8 573.9 507.2 571.5 502.2 569.7 496.6 568.3 490.6 567.6 484.4 567.9 478.3 569.3 472.2 571.8 466 574.8 460 578.2 454.7 581.8 450.1 585.9 445.9 590.4 442.3 595.2 439.1 600.3 436.3 605.9 434 611.7 432.1 617.6 430.7 623.8 429.8 630.2 429.4 636.4 429.4 641.9 429.6 646.8 430.1 651.1 430.8 654.9 431.8 658.1 433 660.5 434.7 662.3 436.7 663.7 438.8 664.8 440.7 665.9 442.5 666.8 444.2 667.3 445.8 667.5 447.5 667.2 449.4 666.4 451.4 665.5 453.2 664.8 454.4 656 447.5 656 447.5 656 447.5 656 447.5 656 447.5 656 447.5 656 447.5 656 447.5 656 447.5 656.4 447.5 657 447.5 657.1 447.5 656 447.5 653.3 447.3 649.4 447 644.8 446.8 640 447 634.7 447.8 628.9 448.9 623.1 450.2 618 451.5 613.9 452.7 610.3 453.9 607.1 455.3 604 457 600.9 459.1 598.1 461.5 595.4 464.1 593 467 590.7 470.2 588.6 473.6 586.9 477.3 586 481 586.2 485 587.1 489.2 588.5 493.4 590 497 591.5 500 593.2 502.5 595 504.8 597 507 599.1 509.2 601.4 511.2 603.7 513.1 606 515 608.5 517.1 611.1 519.2 613.4 521.2 615 522.5 615.6 523 615.6 523 615.2 522.7 615 522.5z" fill="#f0f0f0"/><path d="M622.6 525.6 621.4 526.8 619.7 528.5 617.5 530.2 615 531.2 612 531.3 608.5 531 604.7 530.2 600.9 528.8 597 527 593 524.6 588.9 521.8 585.2 518.6 581.8 514.9 578.6 510.9 575.7 506.5 573.4 501.6 571.6 496.3 570.2 490.5 569.5 484.5 569.7 478.6 571.1 472.7 573.4 466.7 576.4 461 579.6 455.9 583.2 451.5 587.1 447.5 591.4 444 596 440.9 601 438.2 606.4 435.9 612 434.1 617.7 432.7 623.7 431.8 630 431.3 636.2 431.2 641.7 431.4 646.6 431.7 650.9 432.4 654.7 433.3 657.9 434.5 660.2 436 661.8 437.8 662.9 439.6 664 441.4 664.9 443 665.7 444.5 666.2 446 666.4 447.5 666.1 449.2 665.3 451 664.5 452.6 664 453.7 656 447.5 656 447.5 656 447.5 656 447.5 656 447.5 656 447.5 656 447.5 656 447.5 656 447.5 656.4 447.5 657 447.5 657.1 447.5 656 447.5 653.3 447.3 649.4 447 644.8 446.8 640 447 634.7 447.8 628.9 448.9 623.1 450.2 618 451.5 613.9 452.7 610.3 453.9 607.1 455.3 604 457 600.9 459.1 598.1 461.5 595.4 464.1 593 467 590.7 470.2 588.6 473.6 586.9 477.3 586 481 586.2 485 587.1 489.2 588.5 493.4 590 497 591.5 500 593.2 502.5 595 504.8 597 507 599.1 509.2 601.4 511.2 603.7 513.1 606 515 608.5 517.1 611.1 519.2 613.4 521.2 615 522.5 615.6 523 615.6 523 615.2 522.7 615 522.5z" fill="#dedede"/><path d="M621.8 525.3 620.7 526.3 619.2 527.9 617.3 529.4 615 530.2 612.1 530.2 608.8 529.7 605.1 528.7 601.5 527.3 597.8 525.4 593.9 523.1 590.1 520.4 586.5 517.3 583.3 513.8 580.2 510 577.4 505.7 575.2 501.1 573.5 496 572.1 490.3 571.3 484.5 571.5 478.8 572.9 473.2 575.1 467.5 578 462.1 581.1 457.2 584.5 452.9 588.3 449 592.5 445.6 596.9 442.7 601.7 440.1 606.8 437.9 612.2 436.2 617.7 434.8 623.6 433.9 629.9 433.3 636 433.1 641.5 433.1 646.4 433.4 650.8 434 654.6 434.9 657.7 435.9 659.8 437.3 661.2 438.8 662.2 440.5 663.1 442.1 663.9 443.5 664.6 444.8 665.1 446.2 665.2 447.5 664.9 449 664.3 450.6 663.6 452 663.1 453 656 447.5 656 447.5 656 447.5 656 447.5 656 447.5 656 447.5 656 447.5 656 447.5 656 447.5 656.4 447.5 657 447.5 657.1 447.5 656 447.5 653.3 447.3 649.4 447 644.8 446.8 640 447 634.7 447.8 628.9 448.9 623.1 450.2 618 451.5 613.9 452.7 610.3 453.9 607.1 455.3 604 457 600.9 459.1 598.1 461.5 595.4 464.1 593 467 590.7 470.2 588.6 473.6 586.9 477.3 586 481 586.2 485 587.1 489.2 588.5 493.4 590 497 591.5 500 593.2 502.5 595 504.8 597 507 599.1 509.2 601.4 511.2 603.7 513.1 606 515 608.5 517.1 611.1 519.2 613.4 521.2 615 522.5 615.6 523 615.6 523 615.2 522.7 615 522.5z" fill="#b2b2b2"/><path d="M620.9 524.9 620 525.9 618.8 527.3 617.1 528.6 615 529.2 612.3 529.1 609.1 528.4 605.6 527.3 602.1 525.8 598.5 523.9 594.8 521.6 591.2 519 587.8 516 584.7 512.7 581.8 509 579.2 505 577.1 500.6 575.3 495.6 574 490.2 573.2 484.6 573.3 479.1 574.6 473.7 576.8 468.3 579.6 463.1 582.6 458.4 585.9 454.3 589.5 450.6 593.5 447.3 597.8 444.5 602.4 442 607.2 439.9 612.4 438.3 617.7 436.9 623.6 435.9 629.8 435.2 635.9 434.9 641.3 434.8 646.2 435.1 650.6 435.6 654.4 436.4 657.5 437.4 659.5 438.5 660.7 439.9 661.5 441.4 662.2 442.8 663 444 663.5 445.2 663.9 446.3 664.1 447.5 663.8 448.8 663.3 450.2 662.6 451.5 662.2 452.3 656 447.5 656 447.5 656 447.5 656 447.5 656 447.5 656 447.5 656 447.5 656 447.5 656 447.5 656.4 447.5 657 447.5 657.1 447.5 656 447.5 653.3 447.3 649.4 447 644.8 446.8 640 447 634.7 447.8 628.9 448.9 623.1 450.2 618 451.5 613.9 452.7 610.3 453.9 607.1 455.3 604 457 600.9 459.1 598.1 461.5 595.4 464.1 593 467 590.7 470.2 588.6 473.6 586.9 477.3 586 481 586.2 485 587.1 489.2 588.5 493.4 590 497 591.5 500 593.2 502.5 595 504.8 597 507 599.1 509.2 601.4 511.2 603.7 513.1 606 515 608.5 517.1 611.1 519.2 613.4 521.2 615 522.5 615.6 523 615.6 523 615.2 522.7 615 522.5z" fill="#6e6e6e"/><path d="M620.1 524.6 619.3 525.4 618.3 526.7 616.9 527.8 615 528.3 612.4 527.9 609.3 527.1 606 525.8 602.6 524.2 599.3 522.4 595.8 520.1 592.3 517.6 589.2 514.7 586.2 511.6 583.4 508.1 581 504.3 578.9 500.1 577.2 495.3 575.8 490.1 575.1 484.6 575.2 479.4 576.4 474.2 578.5 469 581.2 464.1 584.1 459.6 587.2 455.7 590.8 452.1 594.6 449 598.7 446.2 603 443.9 607.7 441.9 612.6 440.3 617.8 439 623.5 437.9 629.6 437.2 635.7 436.7 641.2 436.6 646 436.7 650.4 437.3 654.2 438 657.2 438.8 659.2 439.8 660.2 441 660.7 442.3 661.3 443.4 662 444.5 662.5 445.5 662.8 446.5 662.9 447.5 662.7 448.6 662.2 449.8 661.7 450.9 661.3 451.7 656 447.5 656 447.5 656 447.5 656 447.5 656 447.5 656 447.5 656 447.5 656 447.5 656 447.5 656.4 447.5 657 447.5 657.1 447.5 656 447.5 653.3 447.3 649.4 447 644.8 446.8 640 447 634.7 447.8 628.9 448.9 623.1 450.2 618 451.5 613.9 452.7 610.3 453.9 607.1 455.3 604 457 600.9 459.1 598.1 461.5 595.4 464.1 593 467 590.7 470.2 588.6 473.6 586.9 477.3 586 481 586.2 485 587.1 489.2 588.5 493.4 590 497 591.5 500 593.2 502.5 595 504.8 597 507 599.1 509.2 601.4 511.2 603.7 513.1 606 515 608.5 517.1 611.1 519.2 613.4 521.2 615 522.5 615.6 523 615.6 523 615.2 522.7 615 522.5z" fill="#313131"/><path d="M619.2 524.2 618.6 525 617.9 526.1 616.7 527 615 527.3 612.6 526.8 609.6 525.8 606.4 524.4 603.2 522.7 600 520.8 596.7 518.6 593.5 516.2 590.5 513.4 587.7 510.4 585.1 507.2 582.7 503.6 580.8 499.6 579.1 495 577.7 489.9 576.9 484.7 577 479.7 578.1 474.7 580.2 469.8 582.8 465.1 585.6 460.8 588.6 457.1 592 453.7 595.7 450.7 599.6 448 603.7 445.8 608.1 443.9 612.8 442.4 617.8 441.1 623.4 440 629.5 439.1 635.6 438.6 641 438.3 645.8 438.4 650.2 438.9 654.1 439.5 657 440.3 658.8 441.1 659.7 442.1 660 443.1 660.4 444.1 661 445 661.4 445.8 661.7 446.7 661.8 447.5 661.6 448.4 661.2 449.4 660.7 450.3 660.4 451 656 447.5 656 447.5 656 447.5 656 447.5 656 447.5 656 447.5 656 447.5 656 447.5 656 447.5 656.4 447.5 657 447.5 657.1 447.5 656 447.5 653.3 447.3 649.4 447 644.8 446.8 640 447 634.7 447.8 628.9 448.9 623.1 450.2 618 451.5 613.9 452.7 610.3 453.9 607.1 455.3 604 457 600.9 459.1 598.1 461.5 595.4 464.1 593 467 590.7 470.2 588.6 473.6 586.9 477.3 586 481 586.2 485 587.1 489.2 588.5 493.4 590 497 591.5 500 593.2 502.5 595 504.8 597 507 599.1 509.2 601.4 511.2 603.7 513.1 606 515 608.5 517.1 611.1 519.2 613.4 521.2 615 522.5 615.6 523 615.6 523 615.2 522.7 615 522.5z" fill="#1c1c1c"/><path d="M618.4 523.9 618 524.5 617.4 525.4 616.5 526.2 615 526.3 612.8 525.7 609.9 524.5 606.8 522.9 603.8 521.2 600.7 519.3 597.6 517.1 594.6 514.8 591.8 512.1 589.2 509.3 586.7 506.2 584.5 502.9 582.6 499.1 581 494.7 579.6 489.8 578.8 484.8 578.8 479.9 579.9 475.2 581.8 470.6 584.3 466.1 587.1 462.1 590 458.5 593.2 455.3 596.7 452.4 600.5 449.8 604.4 447.7 608.6 445.9 613 444.4 617.8 443.2 623.3 442 629.4 441.1 635.4 440.4 640.8 440 645.6 440.1 650.1 440.5 653.9 441.1 656.8 441.7 658.5 442.4 659.1 443.2 659.3 444 659.5 444.8 660 445.5 660.3 446.2 660.5 446.8 660.6 447.5 660.5 448.3 660.1 449.1 659.8 449.8 659.5 450.3 656 447.5 656 447.5 656 447.5 656 447.5 656 447.5 656 447.5 656 447.5 656 447.5 656 447.5 656.4 447.5 657 447.5 657.1 447.5 656 447.5 653.3 447.3 649.4 447 644.8 446.8 640 447 634.7 447.8 628.9 448.9 623.1 450.2 618 451.5 613.9 452.7 610.3 453.9 607.1 455.3 604 457 600.9 459.1 598.1 461.5 595.4 464.1 593 467 590.7 470.2 588.6 473.6 586.9 477.3 586 481 586.2 485 587.1 489.2 588.5 493.4 590 497 591.5 500 593.2 502.5 595 504.8 597 507 599.1 509.2 601.4 511.2 603.7 513.1 606 515 608.5 517.1 611.1 519.2 613.4 521.2 615 522.5 615.6 523 615.6 523 615.2 522.7 615 522.5z" fill="#191919"/><path d="M617.5 523.5 617.3 524 616.9 524.8 616.3 525.4 615 525.4 612.9 524.5 610.2 523.2 607.2 521.4 604.3 519.6 601.5 517.7 598.6 515.6 595.7 513.4 593.1 510.9 590.6 508.2 588.3 505.3 586.2 502.1 584.5 498.5 582.9 494.3 581.5 489.7 580.6 484.8 580.6 480.2 581.6 475.7 583.5 471.3 585.9 467.1 588.5 463.3 591.3 459.9 594.4 456.8 597.8 454 601.3 451.6 605.1 449.6 609 447.9 613.2 446.5 617.9 445.2 623.3 444.1 629.3 443 635.2 442.2 640.6 441.8 645.4 441.8 649.9 442.1 653.8 442.6 656.6 443.2 658.1 443.7 658.6 444.3 658.6 444.9 658.7 445.5 659 446 659.2 446.5 659.4 447 659.5 447.5 659.4 448.1 659.1 448.7 658.8 449.2 658.7 449.6 656 447.5 656 447.5 656 447.5 656 447.5 656 447.5 656 447.5 656 447.5 656 447.5 656 447.5 656.4 447.5 657 447.5 657.1 447.5 656 447.5 653.3 447.3 649.4 447 644.8 446.8 640 447 634.7 447.8 628.9 448.9 623.1 450.2 618 451.5 613.9 452.7 610.3 453.9 607.1 455.3 604 457 600.9 459.1 598.1 461.5 595.4 464.1 593 467 590.7 470.2 588.6 473.6 586.9 477.3 586 481 586.2 485 587.1 489.2 588.5 493.4 590 497 591.5 500 593.2 502.5 595 504.8 597 507 599.1 509.2 601.4 511.2 603.7 513.1 606 515 608.5 517.1 611.1 519.2 613.4 521.2 615 522.5 615.6 523 615.6 523 615.2 522.7 615 522.5z" fill="#181818"/><path d="M616.7 523.2 616.6 523.6 616.5 524.2 616.1 524.6 615 524.4 613.1 523.4 610.5 521.9 607.6 520 604.9 518.1 602.2 516.2 599.5 514.1 596.8 512 594.4 509.6 592.1 507 589.9 504.4 588 501.4 586.3 498 584.8 494 583.4 489.5 582.5 484.9 582.4 480.5 583.4 476.3 585.2 472.1 587.5 468.1 590 464.5 592.7 461.3 595.6 458.4 598.8 455.7 602.2 453.4 605.7 451.5 609.4 449.9 613.4 448.6 617.9 447.3 623.2 446.1 629.1 445 635.1 444.1 640.4 443.5 645.2 443.4 649.7 443.7 653.6 444.2 656.4 444.6 657.8 445 658.1 445.4 657.8 445.8 657.8 446.1 658 446.5 658.2 446.8 658.3 447.2 658.3 447.5 658.2 447.9 658.1 448.3 657.9 448.6 657.8 448.9 656 447.5 656 447.5 656 447.5 656 447.5 656 447.5 656 447.5 656 447.5 656 447.5 656 447.5 656.4 447.5 657 447.5 657.1 447.5 656 447.5 653.3 447.3 649.4 447 644.8 446.8 640 447 634.7 447.8 628.9 448.9 623.1 450.2 618 451.5 613.9 452.7 610.3 453.9 607.1 455.3 604 457 600.9 459.1 598.1 461.5 595.4 464.1 593 467 590.7 470.2 588.6 473.6 586.9 477.3 586 481 586.2 485 587.1 489.2 588.5 493.4 590 497 591.5 500 593.2 502.5 595 504.8 597 507 599.1 509.2 601.4 511.2 603.7 513.1 606 515 608.5 517.1 611.1 519.2 613.4 521.2 615 522.5 615.6 523 615.6 523 615.2 522.7 615 522.5z" fill="#343434"/><path d="M615.8 522.8 615.9 523.1 616 523.6 615.8 523.8 615 523.5 613.2 522.3 610.8 520.6 608 518.5 605.4 516.5 603 514.6 600.4 512.7 598 510.6 595.7 508.3 593.6 505.9 591.6 503.4 589.7 500.7 588.2 497.5 586.6 493.7 585.2 489.4 584.3 484.9 584.2 480.7 585.1 476.8 586.9 472.9 589.1 469.2 591.5 465.8 594 462.7 596.8 459.9 599.9 457.4 603.1 455.2 606.4 453.4 609.9 451.9 613.7 450.6 618 449.4 623.1 448.1 629 446.9 634.9 445.9 640.2 445.3 645 445.1 649.5 445.4 653.4 445.7 656.2 446.1 657.5 446.2 657.5 446.4 657.1 446.6 656.9 446.8 657 447 657.1 447.2 657.1 447.3 657.2 447.5 657.1 447.7 657 447.9 656.9 448.1 656.9 448.2 656 447.5 656 447.5 656 447.5 656 447.5 656 447.5 656 447.5 656 447.5 656 447.5 656 447.5 656.4 447.5 657 447.5 657.1 447.5 656 447.5 653.3 447.3 649.4 447 644.8 446.8 640 447 634.7 447.8 628.9 448.9 623.1 450.2 618 451.5 613.9 452.7 610.3 453.9 607.1 455.3 604 457 600.9 459.1 598.1 461.5 595.4 464.1 593 467 590.7 470.2 588.6 473.6 586.9 477.3 586 481 586.2 485 587.1 489.2 588.5 493.4 590 497 591.5 500 593.2 502.5 595 504.8 597 507 599.1 509.2 601.4 511.2 603.7 513.1 606 515 608.5 517.1 611.1 519.2 613.4 521.2 615 522.5 615.6 523 615.6 523 615.2 522.7 615 522.5z" fill="#a1a1a1"/><ellipse cx="615" cy="522.5" rx="10.8" ry="10.8" fill="url(#rb)"/><ellipse cx="656.5" cy="447.5" rx="12.3" ry="10.6" fill="url(#rb)"/><path d="M683 427 685 425.6 687.8 423.5 691 421.5 694 420 696.6 419.4 699.1 419.3 701.9 419.3 705.5 419.4 710.2 419.4 715.7 419.5 721.5 419.6 727 419.6 732 419.7 736.8 419.8 741.6 419.8 746.7 419.4 752.1 418.6 757.7 417.5 763.4 416.1 769 414.4 774.5 412.4 780 410 785.5 407.3 791 404.4 796.6 401.1 802.1 397.5 807.7 393.7 813.3 390 818.9 386.3 824.4 382.6 829.9 379 835.5 375.5 841.1 372.2 846.6 369 852.2 366 857.8 363.3 863.4 360.9 869 358.8 874.6 356.9 880 355.5 885.3 354.5 890.5 353.9 895.4 353.7 900 353.5 904.1 353.5 907.8 353.6 911.4 353.9 915 354.5 918.8 355.2 922.7 356 926.5 357.2 930 359 933.4 361.6 936.6 364.9 939.5 368.5 942 372 944 375.4 945.6 378.9 946.8 382.3 947.8 385.5 948.5 388.5 949 391.5 949.1 394.2 949 396.7 948.7 398.9 948.1 401 947.1 402.8 945.5 404.4 942.7 405.8 939 407.1 935.5 408.1 933 408.8 933 397.8 933 397.8 933 397.8 933 397.8 933 397.8 933 397.8 933 397.8 933 397.8 933 397.8 933 397.8 933 397.8 933 397.8 933 397.8 933.3 398 933.8 398.2 933.8 398.3 933 397.8 930.7 396.6 927.4 394.9 923.9 392.9 921 391 919 389 917.5 386.8 916 384.7 914 383 911.4 381.7 908.6 380.6 905.4 379.8 902 379.5 898.3 379.7 894.3 380.2 890.2 381.1 886 382 881.9 382.9 877.9 383.9 873.6 385.1 869 386.7 863.8 388.7 858.3 391 852.5 393.7 846.7 396.7 840.9 400.2 834.9 404.1 828.9 408.1 823 412 817.2 415.7 811.5 419.2 805.8 422.7 800 426 794.1 429.2 788.1 432.2 782 435 776 437.5 770 439.6 763.9 441.3 757.9 442.8 752 444 746.4 444.9 740.9 445.5 735.5 445.8 730 446 724.3 446.1 718.6 445.9 713 445.6 707.8 445 703 444.1 698.5 442.9 694.5 441.6 691 440 688.2 438 685.9 435.7 684.2 433.5 683 432z" fill="none" stroke="#2e2e0c" stroke-width="2.6" stroke-linejoin="round"/><path d="M683 427 685 425.6 687.8 423.5 691 421.5 694 420 696.6 419.4 699.1 419.3 701.9 419.3 705.5 419.4 710.2 419.4 715.7 419.5 721.5 419.6 727 419.6 732 419.7 736.8 419.8 741.6 419.8 746.7 419.4 752.1 418.6 757.7 417.5 763.4 416.1 769 414.4 774.5 412.4 780 410 785.5 407.3 791 404.4 796.6 401.1 802.1 397.5 807.7 393.7 813.3 390 818.9 386.3 824.4 382.6 829.9 379 835.5 375.5 841.1 372.2 846.6 369 852.2 366 857.8 363.3 863.4 360.9 869 358.8 874.6 356.9 880 355.5 885.3 354.5 890.5 353.9 895.4 353.7 900 353.5 904.1 353.5 907.8 353.6 911.4 353.9 915 354.5 918.8 355.2 922.7 356 926.5 357.2 930 359 933.4 361.6 936.6 364.9 939.5 368.5 942 372 944 375.4 945.6 378.9 946.8 382.3 947.8 385.5 948.5 388.5 949 391.5 949.1 394.2 949 396.7 948.7 398.9 948.1 401 947.1 402.8 945.5 404.4 942.7 405.8 939 407.1 935.5 408.1 933 408.8 933 397.8 933 397.8 933 397.8 933 397.8 933 397.8 933 397.8 933 397.8 933 397.8 933 397.8 933 397.8 933 397.8 933 397.8 933 397.8 933.3 398 933.8 398.2 933.8 398.3 933 397.8 930.7 396.6 927.4 394.9 923.9 392.9 921 391 919 389 917.5 386.8 916 384.7 914 383 911.4 381.7 908.6 380.6 905.4 379.8 902 379.5 898.3 379.7 894.3 380.2 890.2 381.1 886 382 881.9 382.9 877.9 383.9 873.6 385.1 869 386.7 863.8 388.7 858.3 391 852.5 393.7 846.7 396.7 840.9 400.2 834.9 404.1 828.9 408.1 823 412 817.2 415.7 811.5 419.2 805.8 422.7 800 426 794.1 429.2 788.1 432.2 782 435 776 437.5 770 439.6 763.9 441.3 757.9 442.8 752 444 746.4 444.9 740.9 445.5 735.5 445.8 730 446 724.3 446.1 718.6 445.9 713 445.6 707.8 445 703 444.1 698.5 442.9 694.5 441.6 691 440 688.2 438 685.9 435.7 684.2 433.5 683 432z" fill="#afafaf"/><path d="M683 427.3 684.9 426.1 687.7 424.3 690.8 422.4 693.8 421.2 696.5 420.7 699.1 420.6 702 420.8 705.6 420.9 710.4 420.9 715.9 421 721.7 421.1 727.2 421.2 732.2 421.2 737 421.3 741.9 421.3 747 420.8 752.4 420 758.1 418.9 763.8 417.5 769.4 415.8 775 413.7 780.5 411.3 786 408.6 791.5 405.7 797.1 402.4 802.7 398.8 808.3 395 813.9 391.3 819.4 387.6 825 383.9 830.6 380.2 836.2 376.7 841.7 373.5 847.3 370.3 852.9 367.3 858.5 364.7 864 362.3 869.6 360.2 875 358.5 880.4 357.1 885.6 356.1 890.7 355.5 895.6 355.2 900.1 355 904.2 355 907.9 355.2 911.4 355.6 914.9 356.2 918.7 356.9 922.4 357.8 926 359.1 929.5 360.9 932.8 363.5 936 366.7 939 370.2 941.5 373.5 943.4 376.7 944.9 380 946 383.2 946.9 386.2 947.6 389.1 948 391.8 948.2 394.4 948.1 396.8 947.7 398.9 947.2 400.8 946.3 402.5 944.8 404 942.1 405.4 938.7 406.5 935.3 407.5 933 408.2 933 397.8 933 397.8 933 397.8 933 397.8 933 397.8 933 397.8 933 397.8 933 397.8 933 397.8 933 397.8 933 397.8 933 397.8 933 397.8 933.3 398 933.8 398.2 933.8 398.3 933 397.8 930.7 396.6 927.4 394.9 923.9 392.9 921 391 919 389 917.5 386.8 916 384.7 914 383 911.4 381.7 908.6 380.6 905.4 379.8 902 379.5 898.3 379.7 894.3 380.2 890.2 381.1 886 382 881.9 382.9 877.9 383.9 873.6 385.1 869 386.7 863.8 388.7 858.3 391 852.5 393.7 846.7 396.7 840.9 400.2 834.9 404.1 828.9 408.1 823 412 817.2 415.7 811.5 419.2 805.8 422.7 800 426 794.1 429.2 788.1 432.2 782 435 776 437.5 770 439.6 763.9 441.3 757.9 442.8 752 444 746.4 444.9 740.9 445.5 735.5 445.8 730 446 724.3 446.1 718.6 445.9 713 445.6 707.8 445 703 444.1 698.5 442.9 694.5 441.6 691 440 688.2 438 685.9 435.7 684.2 433.5 683 432z" fill="#d1d1d1"/><path d="M683 427.6 684.9 426.5 687.6 425 690.6 423.4 693.6 422.4 696.4 422 699 422 702 422.3 705.8 422.4 710.5 422.5 716.1 422.6 721.8 422.7 727.4 422.7 732.4 422.8 737.3 422.8 742.2 422.7 747.3 422.3 752.8 421.5 758.4 420.3 764.2 418.9 769.8 417.1 775.4 415 780.9 412.6 786.5 409.9 792.1 406.9 797.6 403.7 803.2 400 808.8 396.3 814.4 392.6 820 388.9 825.6 385.1 831.2 381.5 836.8 378 842.4 374.7 848 371.6 853.6 368.7 859.1 366.1 864.6 363.8 870.1 361.7 875.5 360 880.7 358.6 885.8 357.6 890.9 357 895.7 356.7 900.2 356.6 904.3 356.6 907.9 356.8 911.4 357.2 914.9 357.9 918.5 358.7 922.1 359.6 925.6 360.9 928.9 362.8 932.2 365.3 935.5 368.5 938.5 371.8 940.9 375 942.8 378.1 944.2 381.1 945.2 384.1 946.1 386.9 946.7 389.6 947.1 392.2 947.2 394.6 947.1 396.8 946.8 398.8 946.3 400.6 945.5 402.2 944 403.6 941.6 404.9 938.3 406 935.2 406.9 933 407.5 933 397.8 933 397.8 933 397.8 933 397.8 933 397.8 933 397.8 933 397.8 933 397.8 933 397.8 933 397.8 933 397.8 933 397.8 933 397.8 933.3 398 933.8 398.2 933.8 398.3 933 397.8 930.7 396.6 927.4 394.9 923.9 392.9 921 391 919 389 917.5 386.8 916 384.7 914 383 911.4 381.7 908.6 380.6 905.4 379.8 902 379.5 898.3 379.7 894.3 380.2 890.2 381.1 886 382 881.9 382.9 877.9 383.9 873.6 385.1 869 386.7 863.8 388.7 858.3 391 852.5 393.7 846.7 396.7 840.9 400.2 834.9 404.1 828.9 408.1 823 412 817.2 415.7 811.5 419.2 805.8 422.7 800 426 794.1 429.2 788.1 432.2 782 435 776 437.5 770 439.6 763.9 441.3 757.9 442.8 752 444 746.4 444.9 740.9 445.5 735.5 445.8 730 446 724.3 446.1 718.6 445.9 713 445.6 707.8 445 703 444.1 698.5 442.9 694.5 441.6 691 440 688.2 438 685.9 435.7 684.2 433.5 683 432z" fill="#dcdcdc"/><path d="M683 427.9 684.8 427 687.5 425.7 690.5 424.4 693.5 423.5 696.2 423.3 699 423.4 702.1 423.7 705.9 423.9 710.7 424 716.2 424.1 722 424.2 727.5 424.3 732.6 424.3 737.5 424.4 742.5 424.2 747.6 423.7 753.1 422.9 758.8 421.7 764.5 420.3 770.2 418.5 775.8 416.4 781.4 413.9 787 411.2 792.6 408.2 798.2 404.9 803.8 401.3 809.4 397.6 815 393.9 820.6 390.2 826.3 386.4 831.9 382.7 837.5 379.2 843.1 376 848.7 372.9 854.3 370 859.8 367.4 865.2 365.2 870.6 363.2 875.9 361.5 881.1 360.2 886.1 359.2 891.1 358.6 895.9 358.2 900.4 358.1 904.3 358.1 907.9 358.4 911.4 358.8 914.8 359.5 918.3 360.4 921.8 361.4 925.1 362.8 928.4 364.6 931.7 367.2 935 370.2 938 373.5 940.4 376.6 942.2 379.4 943.5 382.3 944.4 385 945.2 387.7 945.8 390.2 946.2 392.6 946.3 394.8 946.2 396.9 945.9 398.7 945.4 400.4 944.6 401.9 943.3 403.2 941 404.4 938 405.4 935 406.3 933 406.9 933 397.8 933 397.8 933 397.8 933 397.8 933 397.8 933 397.8 933 397.8 933 397.8 933 397.8 933 397.8 933 397.8 933 397.8 933 397.8 933.3 398 933.8 398.2 933.8 398.3 933 397.8 930.7 396.6 927.4 394.9 923.9 392.9 921 391 919 389 917.5 386.8 916 384.7 914 383 911.4 381.7 908.6 380.6 905.4 379.8 902 379.5 898.3 379.7 894.3 380.2 890.2 381.1 886 382 881.9 382.9 877.9 383.9 873.6 385.1 869 386.7 863.8 388.7 858.3 391 852.5 393.7 846.7 396.7 840.9 400.2 834.9 404.1 828.9 408.1 823 412 817.2 415.7 811.5 419.2 805.8 422.7 800 426 794.1 429.2 788.1 432.2 782 435 776 437.5 770 439.6 763.9 441.3 757.9 442.8 752 444 746.4 444.9 740.9 445.5 735.5 445.8 730 446 724.3 446.1 718.6 445.9 713 445.6 707.8 445 703 444.1 698.5 442.9 694.5 441.6 691 440 688.2 438 685.9 435.7 684.2 433.5 683 432z" fill="#cccccc"/><path d="M683 428.2 684.8 427.5 687.4 426.4 690.3 425.4 693.3 424.7 696.1 424.6 699 424.8 702.2 425.2 706 425.4 710.9 425.6 716.4 425.7 722.2 425.8 727.7 425.8 732.8 425.8 737.8 425.9 742.7 425.7 747.9 425.2 753.5 424.3 759.2 423.1 764.9 421.6 770.6 419.8 776.3 417.7 781.9 415.2 787.5 412.5 793.1 409.5 798.7 406.2 804.3 402.6 810 398.9 815.6 395.2 821.2 391.5 826.9 387.7 832.5 384 838.1 380.5 843.8 377.2 849.4 374.2 855 371.3 860.4 368.8 865.8 366.6 871.1 364.7 876.3 363 881.4 361.7 886.4 360.8 891.4 360.1 896.1 359.8 900.5 359.6 904.4 359.7 908 359.9 911.4 360.5 914.8 361.2 918.2 362.1 921.5 363.2 924.7 364.7 927.9 366.5 931.1 369 934.4 372 937.4 375.1 939.9 378.1 941.6 380.8 942.8 383.4 943.6 386 944.3 388.4 944.9 390.7 945.2 393 945.3 395 945.2 397 945 398.7 944.6 400.2 943.8 401.6 942.6 402.8 940.4 403.9 937.6 404.9 934.9 405.7 933 406.2 933 397.8 933 397.8 933 397.8 933 397.8 933 397.8 933 397.8 933 397.8 933 397.8 933 397.8 933 397.8 933 397.8 933 397.8 933 397.8 933.3 398 933.8 398.2 933.8 398.3 933 397.8 930.7 396.6 927.4 394.9 923.9 392.9 921 391 919 389 917.5 386.8 916 384.7 914 383 911.4 381.7 908.6 380.6 905.4 379.8 902 379.5 898.3 379.7 894.3 380.2 890.2 381.1 886 382 881.9 382.9 877.9 383.9 873.6 385.1 869 386.7 863.8 388.7 858.3 391 852.5 393.7 846.7 396.7 840.9 400.2 834.9 404.1 828.9 408.1 823 412 817.2 415.7 811.5 419.2 805.8 422.7 800 426 794.1 429.2 788.1 432.2 782 435 776 437.5 770 439.6 763.9 441.3 757.9 442.8 752 444 746.4 444.9 740.9 445.5 735.5 445.8 730 446 724.3 446.1 718.6 445.9 713 445.6 707.8 445 703 444.1 698.5 442.9 694.5 441.6 691 440 688.2 438 685.9 435.7 684.2 433.5 683 432z" fill="#adadad"/><path d="M683 428.5 684.7 427.9 687.2 427.1 690.1 426.3 693.1 425.9 696 425.9 698.9 426.2 702.2 426.6 706.2 426.9 711 427.1 716.6 427.3 722.3 427.4 727.9 427.4 733 427.4 738 427.4 743 427.2 748.3 426.6 753.8 425.7 759.5 424.5 765.3 423 771.1 421.2 776.7 419 782.4 416.5 788 413.8 793.6 410.8 799.3 407.5 804.9 403.9 810.5 400.2 816.2 396.5 821.8 392.7 827.5 388.9 833.2 385.2 838.8 381.7 844.4 378.5 850.1 375.5 855.6 372.7 861.1 370.2 866.4 368 871.6 366.2 876.8 364.6 881.8 363.3 886.7 362.3 891.6 361.7 896.3 361.3 900.6 361.1 904.5 361.2 908 361.5 911.4 362.1 914.7 362.9 918 363.9 921.2 365.1 924.3 366.5 927.4 368.4 930.6 370.8 933.9 373.8 936.9 376.8 939.4 379.6 941 382.1 942.1 384.6 942.8 386.9 943.4 389.1 944 391.3 944.3 393.3 944.4 395.3 944.3 397 944.1 398.6 943.7 400 943 401.3 941.8 402.5 939.9 403.5 937.3 404.4 934.7 405.1 933 405.6 933 397.8 933 397.8 933 397.8 933 397.8 933 397.8 933 397.8 933 397.8 933 397.8 933 397.8 933 397.8 933 397.8 933 397.8 933 397.8 933.3 398 933.8 398.2 933.8 398.3 933 397.8 930.7 396.6 927.4 394.9 923.9 392.9 921 391 919 389 917.5 386.8 916 384.7 914 383 911.4 381.7 908.6 380.6 905.4 379.8 902 379.5 898.3 379.7 894.3 380.2 890.2 381.1 886 382 881.9 382.9 877.9 383.9 873.6 385.1 869 386.7 863.8 388.7 858.3 391 852.5 393.7 846.7 396.7 840.9 400.2 834.9 404.1 828.9 408.1 823 412 817.2 415.7 811.5 419.2 805.8 422.7 800 426 794.1 429.2 788.1 432.2 782 435 776 437.5 770 439.6 763.9 441.3 757.9 442.8 752 444 746.4 444.9 740.9 445.5 735.5 445.8 730 446 724.3 446.1 718.6 445.9 713 445.6 707.8 445 703 444.1 698.5 442.9 694.5 441.6 691 440 688.2 438 685.9 435.7 684.2 433.5 683 432z" fill="#c4c4c4"/><path d="M683 428.8 684.7 428.4 687.1 427.8 690 427.3 692.9 427.1 695.8 427.2 698.9 427.6 702.3 428.1 706.3 428.4 711.2 428.6 716.7 428.8 722.5 428.9 728.1 428.9 733.2 428.9 738.2 428.9 743.3 428.7 748.6 428.1 754.1 427.1 759.9 425.9 765.7 424.4 771.5 422.6 777.2 420.4 782.8 417.8 788.5 415 794.2 412 799.8 408.7 805.4 405.2 811.1 401.5 816.7 397.8 822.4 394 828.1 390.2 833.8 386.5 839.5 383 845.1 379.8 850.8 376.8 856.3 374 861.8 371.6 867 369.4 872.2 367.6 877.2 366.1 882.1 364.9 887 363.9 891.8 363.2 896.4 362.8 900.7 362.7 904.6 362.8 908.1 363.1 911.4 363.7 914.6 364.6 917.8 365.6 920.9 366.9 923.8 368.4 926.8 370.3 930 372.7 933.3 375.5 936.4 378.4 938.8 381.1 940.4 383.5 941.4 385.7 942 387.8 942.6 389.8 943.1 391.8 943.3 393.7 943.4 395.5 943.4 397.1 943.1 398.5 942.8 399.9 942.1 401 941.1 402.1 939.3 403 936.9 403.8 934.6 404.5 933 404.9 933 397.8 933 397.8 933 397.8 933 397.8 933 397.8 933 397.8 933 397.8 933 397.8 933 397.8 933 397.8 933 397.8 933 397.8 933 397.8 933.3 398 933.8 398.2 933.8 398.3 933 397.8 930.7 396.6 927.4 394.9 923.9 392.9 921 391 919 389 917.5 386.8 916 384.7 914 383 911.4 381.7 908.6 380.6 905.4 379.8 902 379.5 898.3 379.7 894.3 380.2 890.2 381.1 886 382 881.9 382.9 877.9 383.9 873.6 385.1 869 386.7 863.8 388.7 858.3 391 852.5 393.7 846.7 396.7 840.9 400.2 834.9 404.1 828.9 408.1 823 412 817.2 415.7 811.5 419.2 805.8 422.7 800 426 794.1 429.2 788.1 432.2 782 435 776 437.5 770 439.6 763.9 441.3 757.9 442.8 752 444 746.4 444.9 740.9 445.5 735.5 445.8 730 446 724.3 446.1 718.6 445.9 713 445.6 707.8 445 703 444.1 698.5 442.9 694.5 441.6 691 440 688.2 438 685.9 435.7 684.2 433.5 683 432z" fill="#ebebeb"/><path d="M683 429.1 684.7 428.9 687 428.5 689.8 428.3 692.8 428.2 695.7 428.5 698.9 429 702.4 429.5 706.4 429.9 711.4 430.2 716.9 430.4 722.7 430.5 728.2 430.5 733.4 430.4 738.5 430.4 743.6 430.1 748.9 429.5 754.5 428.6 760.2 427.3 766.1 425.8 771.9 423.9 777.6 421.7 783.3 419.1 789 416.3 794.7 413.3 800.4 410 806 406.4 811.6 402.7 817.3 399.1 823 395.3 828.7 391.5 834.4 387.7 840.1 384.2 845.8 381 851.4 378.1 857 375.3 862.4 372.9 867.6 370.9 872.7 369.1 877.6 367.6 882.5 366.4 887.3 365.5 892 364.8 896.6 364.4 900.8 364.2 904.6 364.3 908.1 364.7 911.4 365.4 914.6 366.2 917.7 367.3 920.6 368.7 923.4 370.3 926.3 372.2 929.5 374.5 932.8 377.3 935.9 380.1 938.3 382.6 939.8 384.8 940.7 386.8 941.2 388.7 941.7 390.6 942.1 392.4 942.4 394.1 942.5 395.7 942.4 397.2 942.2 398.5 941.9 399.7 941.3 400.7 940.4 401.7 938.7 402.5 936.5 403.3 934.4 403.9 933 404.3 933 397.8 933 397.8 933 397.8 933 397.8 933 397.8 933 397.8 933 397.8 933 397.8 933 397.8 933 397.8 933 397.8 933 397.8 933 397.8 933.3 398 933.8 398.2 933.8 398.3 933 397.8 930.7 396.6 927.4 394.9 923.9 392.9 921 391 919 389 917.5 386.8 916 384.7 914 383 911.4 381.7 908.6 380.6 905.4 379.8 902 379.5 898.3 379.7 894.3 380.2 890.2 381.1 886 382 881.9 382.9 877.9 383.9 873.6 385.1 869 386.7 863.8 388.7 858.3 391 852.5 393.7 846.7 396.7 840.9 400.2 834.9 404.1 828.9 408.1 823 412 817.2 415.7 811.5 419.2 805.8 422.7 800 426 794.1 429.2 788.1 432.2 782 435 776 437.5 770 439.6 763.9 441.3 757.9 442.8 752 444 746.4 444.9 740.9 445.5 735.5 445.8 730 446 724.3 446.1 718.6 445.9 713 445.6 707.8 445 703 444.1 698.5 442.9 694.5 441.6 691 440 688.2 438 685.9 435.7 684.2 433.5 683 432z" fill="#dcdcdc"/><path d="M683 429.4 684.6 429.3 686.9 429.3 689.7 429.3 692.6 429.4 695.6 429.8 698.8 430.4 702.4 431 706.6 431.4 711.5 431.7 717.1 431.9 722.8 432 728.4 432 733.6 432 738.7 431.9 743.9 431.6 749.2 431 754.8 430 760.6 428.7 766.5 427.2 772.3 425.3 778 423 783.8 420.4 789.5 417.6 795.2 414.6 800.9 411.3 806.6 407.7 812.2 404 817.9 400.4 823.6 396.6 829.3 392.7 835.1 389 840.8 385.5 846.4 382.3 852.1 379.4 857.7 376.7 863.1 374.3 868.2 372.3 873.2 370.6 878.1 369.2 882.8 368 887.6 367 892.3 366.3 896.8 365.9 900.9 365.7 904.7 365.9 908.2 366.3 911.4 367 914.5 367.9 917.5 369.1 920.2 370.5 923 372.2 925.8 374.1 928.9 376.4 932.3 379 935.4 381.7 937.8 384.1 939.2 386.2 940 388 940.4 389.7 940.8 391.3 941.2 392.9 941.5 394.4 941.5 395.9 941.5 397.2 941.3 398.4 941 399.5 940.5 400.4 939.6 401.3 938.1 402.1 936.2 402.7 934.3 403.2 933 403.6 933 397.8 933 397.8 933 397.8 933 397.8 933 397.8 933 397.8 933 397.8 933 397.8 933 397.8 933 397.8 933 397.8 933 397.8 933 397.8 933.3 398 933.8 398.2 933.8 398.3 933 397.8 930.7 396.6 927.4 394.9 923.9 392.9 921 391 919 389 917.5 386.8 916 384.7 914 383 911.4 381.7 908.6 380.6 905.4 379.8 902 379.5 898.3 379.7 894.3 380.2 890.2 381.1 886 382 881.9 382.9 877.9 383.9 873.6 385.1 869 386.7 863.8 388.7 858.3 391 852.5 393.7 846.7 396.7 840.9 400.2 834.9 404.1 828.9 408.1 823 412 817.2 415.7 811.5 419.2 805.8 422.7 800 426 794.1 429.2 788.1 432.2 782 435 776 437.5 770 439.6 763.9 441.3 757.9 442.8 752 444 746.4 444.9 740.9 445.5 735.5 445.8 730 446 724.3 446.1 718.6 445.9 713 445.6 707.8 445 703 444.1 698.5 442.9 694.5 441.6 691 440 688.2 438 685.9 435.7 684.2 433.5 683 432z" fill="#5b5b5b"/><path d="M683 429.6 684.6 429.8 686.8 430 689.5 430.2 692.4 430.6 695.5 431.1 698.8 431.8 702.5 432.5 706.7 433 711.7 433.3 717.2 433.5 723 433.6 728.6 433.6 733.8 433.5 739 433.4 744.1 433.1 749.5 432.4 755.1 431.4 761 430.1 766.9 428.5 772.7 426.6 778.5 424.4 784.3 421.8 790 418.9 795.8 415.8 801.5 412.5 807.1 409 812.8 405.3 818.4 401.6 824.2 397.9 830 394 835.7 390.2 841.4 386.7 847.1 383.6 852.8 380.7 858.4 378 863.7 375.7 868.8 373.7 873.7 372.1 878.5 370.7 883.2 369.5 887.9 368.6 892.5 367.9 896.9 367.4 901.1 367.3 904.8 367.4 908.2 367.9 911.4 368.6 914.5 369.6 917.3 370.8 919.9 372.3 922.5 374 925.2 375.9 928.4 378.2 931.7 380.8 934.9 383.4 937.2 385.7 938.6 387.5 939.3 389.1 939.7 390.6 940 392 940.3 393.4 940.5 394.8 940.6 396.1 940.5 397.3 940.4 398.3 940.1 399.3 939.6 400.1 938.9 400.9 937.6 401.6 935.8 402.2 934.2 402.6 933 403 933 397.8 933 397.8 933 397.8 933 397.8 933 397.8 933 397.8 933 397.8 933 397.8 933 397.8 933 397.8 933 397.8 933 397.8 933 397.8 933.3 398 933.8 398.2 933.8 398.3 933 397.8 930.7 396.6 927.4 394.9 923.9 392.9 921 391 919 389 917.5 386.8 916 384.7 914 383 911.4 381.7 908.6 380.6 905.4 379.8 902 379.5 898.3 379.7 894.3 380.2 890.2 381.1 886 382 881.9 382.9 877.9 383.9 873.6 385.1 869 386.7 863.8 388.7 858.3 391 852.5 393.7 846.7 396.7 840.9 400.2 834.9 404.1 828.9 408.1 823 412 817.2 415.7 811.5 419.2 805.8 422.7 800 426 794.1 429.2 788.1 432.2 782 435 776 437.5 770 439.6 763.9 441.3 757.9 442.8 752 444 746.4 444.9 740.9 445.5 735.5 445.8 730 446 724.3 446.1 718.6 445.9 713 445.6 707.8 445 703 444.1 698.5 442.9 694.5 441.6 691 440 688.2 438 685.9 435.7 684.2 433.5 683 432z" fill="#1f1f1f"/><path d="M683 429.9 684.5 430.2 686.7 430.7 689.3 431.2 692.2 431.8 695.3 432.4 698.8 433.2 702.6 433.9 706.9 434.5 711.8 434.8 717.4 435 723.2 435.1 728.8 435.1 734 435.1 739.2 434.9 744.4 434.6 749.8 433.9 755.5 432.8 761.3 431.5 767.2 429.9 773.1 428 778.9 425.7 784.7 423.1 790.5 420.2 796.3 417.1 802 413.8 807.7 410.3 813.3 406.6 819 402.9 824.8 399.2 830.6 395.3 836.4 391.4 842.1 388 847.8 384.8 853.5 382 859.1 379.3 864.4 377.1 869.4 375.1 874.2 373.5 878.9 372.2 883.5 371.1 888.1 370.1 892.7 369.4 897.1 368.9 901.2 368.8 904.9 369 908.3 369.5 911.4 370.2 914.4 371.3 917.2 372.6 919.6 374.1 922.1 375.9 924.7 377.8 927.8 380.1 931.2 382.6 934.3 385 936.7 387.2 938 388.9 938.6 390.3 938.9 391.5 939.1 392.7 939.4 394 939.6 395.2 939.6 396.3 939.6 397.3 939.5 398.3 939.2 399.1 938.8 399.9 938.1 400.5 937 401.1 935.5 401.6 934 402 933 402.3 933 397.8 933 397.8 933 397.8 933 397.8 933 397.8 933 397.8 933 397.8 933 397.8 933 397.8 933 397.8 933 397.8 933 397.8 933 397.8 933.3 398 933.8 398.2 933.8 398.3 933 397.8 930.7 396.6 927.4 394.9 923.9 392.9 921 391 919 389 917.5 386.8 916 384.7 914 383 911.4 381.7 908.6 380.6 905.4 379.8 902 379.5 898.3 379.7 894.3 380.2 890.2 381.1 886 382 881.9 382.9 877.9 383.9 873.6 385.1 869 386.7 863.8 388.7 858.3 391 852.5 393.7 846.7 396.7 840.9 400.2 834.9 404.1 828.9 408.1 823 412 817.2 415.7 811.5 419.2 805.8 422.7 800 426 794.1 429.2 788.1 432.2 782 435 776 437.5 770 439.6 763.9 441.3 757.9 442.8 752 444 746.4 444.9 740.9 445.5 735.5 445.8 730 446 724.3 446.1 718.6 445.9 713 445.6 707.8 445 703 444.1 698.5 442.9 694.5 441.6 691 440 688.2 438 685.9 435.7 684.2 433.5 683 432z" fill="#171717"/><path d="M683 430.2 684.5 430.7 686.6 431.4 689.2 432.2 692.1 432.9 695.2 433.7 698.7 434.6 702.6 435.4 707 436 712 436.4 717.6 436.6 723.3 436.7 728.9 436.7 734.2 436.6 739.4 436.4 744.7 436 750.1 435.3 755.8 434.3 761.7 432.9 767.6 431.3 773.5 429.3 779.4 427 785.2 424.4 791 421.5 796.8 418.4 802.5 415.1 808.2 411.6 813.9 407.9 819.6 404.2 825.4 400.4 831.2 396.5 837 392.7 842.7 389.2 848.5 386.1 854.2 383.3 859.7 380.7 865 378.4 870 376.6 874.8 375 879.4 373.7 883.9 372.6 888.4 371.7 892.9 371 897.3 370.5 901.3 370.3 904.9 370.5 908.3 371.1 911.4 371.9 914.4 372.9 917 374.3 919.3 375.9 921.6 377.8 924.2 379.7 927.3 381.9 930.7 384.3 933.8 386.7 936.2 388.7 937.4 390.2 937.9 391.4 938.1 392.4 938.2 393.5 938.5 394.5 938.6 395.6 938.7 396.5 938.6 397.4 938.5 398.2 938.3 398.9 938 399.6 937.4 400.1 936.4 400.6 935.1 401.1 933.9 401.4 933 401.7 933 397.8 933 397.8 933 397.8 933 397.8 933 397.8 933 397.8 933 397.8 933 397.8 933 397.8 933 397.8 933 397.8 933 397.8 933 397.8 933.3 398 933.8 398.2 933.8 398.3 933 397.8 930.7 396.6 927.4 394.9 923.9 392.9 921 391 919 389 917.5 386.8 916 384.7 914 383 911.4 381.7 908.6 380.6 905.4 379.8 902 379.5 898.3 379.7 894.3 380.2 890.2 381.1 886 382 881.9 382.9 877.9 383.9 873.6 385.1 869 386.7 863.8 388.7 858.3 391 852.5 393.7 846.7 396.7 840.9 400.2 834.9 404.1 828.9 408.1 823 412 817.2 415.7 811.5 419.2 805.8 422.7 800 426 794.1 429.2 788.1 432.2 782 435 776 437.5 770 439.6 763.9 441.3 757.9 442.8 752 444 746.4 444.9 740.9 445.5 735.5 445.8 730 446 724.3 446.1 718.6 445.9 713 445.6 707.8 445 703 444.1 698.5 442.9 694.5 441.6 691 440 688.2 438 685.9 435.7 684.2 433.5 683 432z" fill="#131313"/><path d="M683 430.5 684.4 431.2 686.5 432.1 689 433.2 691.9 434.1 695.1 435 698.7 436 702.7 436.8 707.1 437.5 712.2 437.9 717.7 438.2 723.5 438.3 729.1 438.2 734.4 438.1 739.7 437.9 745 437.5 750.4 436.8 756.2 435.7 762.1 434.3 768 432.7 773.9 430.7 779.8 428.4 785.7 425.7 791.5 422.7 797.4 419.6 803.1 416.4 808.8 412.8 814.4 409.2 820.1 405.5 826 401.7 831.8 397.8 837.6 393.9 843.4 390.5 849.1 387.4 854.9 384.6 860.4 382 865.7 379.8 870.6 378 875.3 376.5 879.8 375.3 884.2 374.2 888.7 373.3 893.2 372.5 897.5 372 901.4 371.9 905 372.1 908.3 372.7 911.4 373.5 914.3 374.6 916.8 376 919 377.7 921.2 379.6 923.6 381.6 926.7 383.7 930.1 386.1 933.3 388.3 935.6 390.2 936.8 391.5 937.2 392.5 937.3 393.3 937.4 394.2 937.6 395.1 937.7 395.9 937.7 396.7 937.7 397.5 937.6 398.1 937.4 398.7 937.2 399.3 936.7 399.7 935.9 400.2 934.8 400.5 933.7 400.8 933 401 933 397.8 933 397.8 933 397.8 933 397.8 933 397.8 933 397.8 933 397.8 933 397.8 933 397.8 933 397.8 933 397.8 933 397.8 933 397.8 933.3 398 933.8 398.2 933.8 398.3 933 397.8 930.7 396.6 927.4 394.9 923.9 392.9 921 391 919 389 917.5 386.8 916 384.7 914 383 911.4 381.7 908.6 380.6 905.4 379.8 902 379.5 898.3 379.7 894.3 380.2 890.2 381.1 886 382 881.9 382.9 877.9 383.9 873.6 385.1 869 386.7 863.8 388.7 858.3 391 852.5 393.7 846.7 396.7 840.9 400.2 834.9 404.1 828.9 408.1 823 412 817.2 415.7 811.5 419.2 805.8 422.7 800 426 794.1 429.2 788.1 432.2 782 435 776 437.5 770 439.6 763.9 441.3 757.9 442.8 752 444 746.4 444.9 740.9 445.5 735.5 445.8 730 446 724.3 446.1 718.6 445.9 713 445.6 707.8 445 703 444.1 698.5 442.9 694.5 441.6 691 440 688.2 438 685.9 435.7 684.2 433.5 683 432z" fill="#161616"/><path d="M683 430.8 684.4 431.6 686.4 432.8 688.8 434.1 691.7 435.3 695 436.3 698.6 437.4 702.8 438.3 707.3 439 712.3 439.4 717.9 439.7 723.7 439.8 729.3 439.8 734.6 439.7 739.9 439.4 745.3 439 750.8 438.2 756.5 437.1 762.4 435.7 768.4 434.1 774.4 432.1 780.3 429.7 786.2 427 792.1 424 797.9 420.9 803.6 417.6 809.3 414.1 815 410.5 820.7 406.8 826.5 403 832.4 399 838.3 395.2 844.1 391.7 849.8 388.6 855.5 385.8 861.1 383.4 866.4 381.2 871.2 379.4 875.8 378 880.2 376.8 884.6 375.8 889 374.8 893.4 374.1 897.6 373.5 901.5 373.4 905.1 373.6 908.4 374.2 911.4 375.1 914.2 376.3 916.7 377.8 918.7 379.5 920.8 381.5 923.1 383.5 926.1 385.6 929.6 387.8 932.8 390 935.1 391.7 936.2 392.9 936.5 393.7 936.5 394.3 936.5 394.9 936.7 395.6 936.8 396.3 936.8 397 936.8 397.5 936.7 398.1 936.6 398.5 936.3 399 935.9 399.4 935.3 399.7 934.4 400 933.6 400.2 933 400.4 933 397.8 933 397.8 933 397.8 933 397.8 933 397.8 933 397.8 933 397.8 933 397.8 933 397.8 933 397.8 933 397.8 933 397.8 933 397.8 933.3 398 933.8 398.2 933.8 398.3 933 397.8 930.7 396.6 927.4 394.9 923.9 392.9 921 391 919 389 917.5 386.8 916 384.7 914 383 911.4 381.7 908.6 380.6 905.4 379.8 902 379.5 898.3 379.7 894.3 380.2 890.2 381.1 886 382 881.9 382.9 877.9 383.9 873.6 385.1 869 386.7 863.8 388.7 858.3 391 852.5 393.7 846.7 396.7 840.9 400.2 834.9 404.1 828.9 408.1 823 412 817.2 415.7 811.5 419.2 805.8 422.7 800 426 794.1 429.2 788.1 432.2 782 435 776 437.5 770 439.6 763.9 441.3 757.9 442.8 752 444 746.4 444.9 740.9 445.5 735.5 445.8 730 446 724.3 446.1 718.6 445.9 713 445.6 707.8 445 703 444.1 698.5 442.9 694.5 441.6 691 440 688.2 438 685.9 435.7 684.2 433.5 683 432z" fill="#454545"/><path d="M683 431.1 684.4 432.1 686.3 433.5 688.7 435.1 691.5 436.5 694.8 437.6 698.6 438.8 702.8 439.7 707.4 440.5 712.5 441 718.1 441.3 723.8 441.4 729.5 441.3 734.9 441.2 740.2 440.9 745.5 440.5 751.1 439.7 756.8 438.5 762.8 437.1 768.8 435.4 774.8 433.4 780.7 431 786.6 428.3 792.6 425.3 798.4 422.2 804.2 418.9 809.9 415.4 815.5 411.8 821.3 408.1 827.1 404.3 833 400.3 838.9 396.4 844.7 393 850.5 389.9 856.2 387.1 861.8 384.7 867 382.6 871.8 380.8 876.3 379.4 880.6 378.3 884.9 377.3 889.3 376.4 893.6 375.6 897.8 375.1 901.6 374.9 905.2 375.2 908.4 375.8 911.4 376.8 914.2 378 916.5 379.5 918.4 381.4 920.3 383.4 922.6 385.4 925.6 387.4 929 389.6 932.3 391.6 934.6 393.2 935.6 394.2 935.8 394.8 935.7 395.2 935.6 395.6 935.7 396.2 935.8 396.7 935.8 397.2 935.8 397.6 935.8 398 935.7 398.4 935.5 398.7 935.2 399 934.7 399.2 934.1 399.4 933.4 399.6 933 399.7 933 397.8 933 397.8 933 397.8 933 397.8 933 397.8 933 397.8 933 397.8 933 397.8 933 397.8 933 397.8 933 397.8 933 397.8 933 397.8 933.3 398 933.8 398.2 933.8 398.3 933 397.8 930.7 396.6 927.4 394.9 923.9 392.9 921 391 919 389 917.5 386.8 916 384.7 914 383 911.4 381.7 908.6 380.6 905.4 379.8 902 379.5 898.3 379.7 894.3 380.2 890.2 381.1 886 382 881.9 382.9 877.9 383.9 873.6 385.1 869 386.7 863.8 388.7 858.3 391 852.5 393.7 846.7 396.7 840.9 400.2 834.9 404.1 828.9 408.1 823 412 817.2 415.7 811.5 419.2 805.8 422.7 800 426 794.1 429.2 788.1 432.2 782 435 776 437.5 770 439.6 763.9 441.3 757.9 442.8 752 444 746.4 444.9 740.9 445.5 735.5 445.8 730 446 724.3 446.1 718.6 445.9 713 445.6 707.8 445 703 444.1 698.5 442.9 694.5 441.6 691 440 688.2 438 685.9 435.7 684.2 433.5 683 432z" fill="#b7b7b7"/><path d="M683 431.4 684.3 432.6 686.2 434.3 688.5 436.1 691.4 437.6 694.7 438.9 698.6 440.2 702.9 441.2 707.5 442 712.7 442.5 718.2 442.8 724 442.9 729.6 442.9 735.1 442.7 740.4 442.5 745.8 441.9 751.4 441.1 757.2 440 763.1 438.5 769.2 436.8 775.2 434.8 781.1 432.4 787.1 429.6 793.1 426.6 798.9 423.5 804.7 420.2 810.4 416.7 816.1 413.1 821.9 409.4 827.7 405.6 833.7 401.6 839.6 397.7 845.4 394.2 851.2 391.2 856.9 388.4 862.5 386 867.7 383.9 872.4 382.3 876.9 380.9 881.1 379.8 885.3 378.9 889.6 378 893.9 377.1 898 376.6 901.8 376.4 905.2 376.7 908.5 377.4 911.4 378.4 914.1 379.6 916.3 381.2 918.1 383.2 919.9 385.2 922.1 387.2 925 389.3 928.5 391.4 931.8 393.3 934.1 394.8 935 395.6 935.1 395.9 934.9 396.1 934.7 396.4 934.8 396.7 934.9 397.1 934.9 397.4 934.9 397.7 934.8 397.9 934.8 398.2 934.7 398.4 934.5 398.6 934.1 398.7 933.7 398.9 933.3 399 933 399.1 933 397.8 933 397.8 933 397.8 933 397.8 933 397.8 933 397.8 933 397.8 933 397.8 933 397.8 933 397.8 933 397.8 933 397.8 933 397.8 933.3 398 933.8 398.2 933.8 398.3 933 397.8 930.7 396.6 927.4 394.9 923.9 392.9 921 391 919 389 917.5 386.8 916 384.7 914 383 911.4 381.7 908.6 380.6 905.4 379.8 902 379.5 898.3 379.7 894.3 380.2 890.2 381.1 886 382 881.9 382.9 877.9 383.9 873.6 385.1 869 386.7 863.8 388.7 858.3 391 852.5 393.7 846.7 396.7 840.9 400.2 834.9 404.1 828.9 408.1 823 412 817.2 415.7 811.5 419.2 805.8 422.7 800 426 794.1 429.2 788.1 432.2 782 435 776 437.5 770 439.6 763.9 441.3 757.9 442.8 752 444 746.4 444.9 740.9 445.5 735.5 445.8 730 446 724.3 446.1 718.6 445.9 713 445.6 707.8 445 703 444.1 698.5 442.9 694.5 441.6 691 440 688.2 438 685.9 435.7 684.2 433.5 683 432z" fill="#e3e3e3"/><path d="M683 431.7 684.3 433 686.1 435 688.4 437 691.2 438.8 694.6 440.3 698.5 441.5 702.9 442.6 707.7 443.5 712.8 444.1 718.4 444.4 724.2 444.5 729.8 444.4 735.3 444.3 740.6 444 746.1 443.4 751.7 442.6 757.5 441.4 763.5 439.9 769.6 438.2 775.6 436.1 781.6 433.7 787.6 430.9 793.6 427.9 799.5 424.7 805.3 421.4 811 418 816.7 414.4 822.4 410.7 828.3 406.9 834.3 402.8 840.2 398.9 846 395.5 851.8 392.4 857.6 389.7 863.1 387.4 868.3 385.3 873 383.7 877.4 382.4 881.5 381.4 885.6 380.4 889.9 379.5 894.1 378.7 898.1 378.1 901.9 378 905.3 378.3 908.5 379 911.4 380 914.1 381.3 916.2 383 917.8 385 919.5 387.1 921.5 389.1 924.5 391.1 928 393.1 931.2 395 933.5 396.3 934.4 396.9 934.4 397.1 934.1 397 933.9 397.1 933.9 397.3 933.9 397.4 933.9 397.6 933.9 397.7 933.9 397.9 933.9 398 933.8 398.1 933.7 398.2 933.6 398.3 933.4 398.3 933.1 398.4 933 398.4 933 397.8 933 397.8 933 397.8 933 397.8 933 397.8 933 397.8 933 397.8 933 397.8 933 397.8 933 397.8 933 397.8 933 397.8 933 397.8 933.3 398 933.8 398.2 933.8 398.3 933 397.8 930.7 396.6 927.4 394.9 923.9 392.9 921 391 919 389 917.5 386.8 916 384.7 914 383 911.4 381.7 908.6 380.6 905.4 379.8 902 379.5 898.3 379.7 894.3 380.2 890.2 381.1 886 382 881.9 382.9 877.9 383.9 873.6 385.1 869 386.7 863.8 388.7 858.3 391 852.5 393.7 846.7 396.7 840.9 400.2 834.9 404.1 828.9 408.1 823 412 817.2 415.7 811.5 419.2 805.8 422.7 800 426 794.1 429.2 788.1 432.2 782 435 776 437.5 770 439.6 763.9 441.3 757.9 442.8 752 444 746.4 444.9 740.9 445.5 735.5 445.8 730 446 724.3 446.1 718.6 445.9 713 445.6 707.8 445 703 444.1 698.5 442.9 694.5 441.6 691 440 688.2 438 685.9 435.7 684.2 433.5 683 432z" fill="#bebebe"/><path d="M683 427 685 425.6 687.8 423.5 691 421.5 694 420 696.6 419.4 699.1 419.3 701.9 419.3 705.5 419.4 710.2 419.4 715.7 419.5 721.5 419.6 727 419.6 732 419.7 736.8 419.8 741.6 419.8 746.7 419.4 752.1 418.6 757.7 417.5 763.4 416.1 769 414.4 774.5 412.4 780 410 785.5 407.3 791 404.4 796.6 401.1 802.1 397.5 807.7 393.7 813.3 390 818.9 386.3 824.4 382.6 829.9 379 835.5 375.5 841.1 372.2 846.6 369 852.2 366 857.8 363.3 863.4 360.9 869 358.8 874.6 356.9 880 355.5 885.3 354.5 890.5 353.9 895.4 353.7 900 353.5 904.1 353.5 907.8 353.6 911.4 353.9 915 354.5 918.8 355.2 922.7 356 926.5 357.2 930 359 933.4 361.6 936.6 364.9 939.5 368.5 942 372 944 375.4 945.6 378.9 946.8 382.3 947.8 385.5 948.5 388.5 949 391.5 949.1 394.2 949 396.7 948.7 398.9 948.1 401 947.1 402.8 945.5 404.4 942.7 405.8 939 407.1 935.5 408.1 933 408.8 933 403.6 934.3 403.3 936.2 402.7 938.1 402.1 939.6 401.3 940.5 400.4 941 399.5 941.3 398.4 941.5 397.2 941.6 395.9 941.5 394.4 941.2 392.9 940.8 391.3 940.5 389.6 940 388 939.2 386.1 937.8 384.1 935.4 381.7 932.3 379 928.9 376.4 925.8 374 923 372.1 920.2 370.5 917.5 369.1 914.5 367.9 911.4 367 908.2 366.3 904.7 365.9 900.9 365.7 896.8 365.9 892.3 366.3 887.6 367 882.8 368 878.1 369.1 873.2 370.6 868.2 372.3 863.1 374.3 857.7 376.7 852.1 379.3 846.4 382.3 840.8 385.5 835.1 388.9 829.3 392.7 823.6 396.6 817.9 400.3 812.2 404 806.5 407.7 800.9 411.3 795.2 414.6 789.5 417.6 783.8 420.4 778 423 772.3 425.3 766.5 427.1 760.6 428.7 754.8 430 749.2 431 743.9 431.6 738.7 431.9 733.6 432 728.4 432 722.8 432 717.1 431.9 711.5 431.7 706.6 431.4 702.4 431 698.8 430.4 695.6 429.8 692.6 429.4 689.7 429.2 686.9 429.2 684.6 429.3 683 429.4z" fill="url(#fdT)"/><ellipse cx="693.3" cy="419" rx="11.6" ry="11.6" fill="url(#rb)"/><ellipse cx="933" cy="397.8" rx="10.6" ry="10.6" fill="url(#rb)"/></g><use href="#lh0" transform="translate(1923.0 0) scale(-1 1)"/><g id="lh1"><g transform="translate(675 703)"><path d="M-13-15c3-3 7-3 10 0c3-4 9-5 13-2l5 4-6 8c4 4 7 10 7 16l-7 2-3 8-8-3-6 3c-4-4-5-10-3-15l-6-5c-2-6 0-12 4-16z" fill="#5a5a5a" stroke="#2e2e0c" stroke-width="2"/><path d="M-9-10c2 3 4 5 8 6M-1-12c0 4 0 7 2 10M9-11c-3 3-5 6-5 10" fill="none" stroke="#7e7e7e" stroke-width="3"/><path d="M-8 8c3 3 5 8 5 13M2 6c2 5 4 10 4 14M8 2c3 3 6 8 7 13" fill="none" stroke="#777" stroke-width="3"/><path d="M-12 6c8-1 15-4 21-10" fill="none" stroke="#a8a8a8" stroke-width="2.2"/><path d="M-6 12l-2 8M5 12l1 10M11 9l5 7" stroke="#3c3c3c" stroke-width="1.6"/></g><ellipse cx="657.6" cy="716.7" rx="13.2" ry="11.399999999999999" fill="#2e2e0c"/><ellipse cx="694.6" cy="691" rx="13.0" ry="13.0" fill="#2e2e0c"/><ellipse cx="935.5" cy="697.4" rx="12.2" ry="12.2" fill="#2e2e0c"/><clipPath id="pcl"><rect x="540" y="600" width="420" height="196.3"/></clipPath><g clip-path="url(#pcl)"><path d="M557.5 797.5 557.5 792.6 557.5 785.7 557.5 777.8 557.5 770 557.4 762.1 557.2 753.6 557.2 745.5 557.5 738.7 558.1 733.8 558.8 730.3 560 727.2 561.6 723.6 563.9 719.2 566.6 714.6 569.7 710 573 706 576.4 702.6 580 699.6 583.8 697 588 694.7 592.6 692.6 597.4 690.8 602.6 689.3 607.9 688.3 613.6 687.7 619.6 687.6 625.6 687.8 631 688.3 635.8 689.1 640.2 690.3 644.4 691.8 648.4 693.5 652.5 695.5 656.6 697.8 660.4 700.3 663.4 702.8 665.7 705.3 667.5 708 668.6 710.7 669.2 713.2 669.2 715.7 668.5 718.3 667.4 720.6 665.7 722.5 663.1 724 659.6 725.1 656.3 725.9 654 726.5 657.6 716.7 657.6 716.7 657.6 716.7 657.6 716.7 657.6 716.7 657.6 716.7 657.6 716.7 657.6 716.7 657.6 716.7 658 716.7 658.7 716.8 658.8 716.8 657.6 716.7 654.3 716.5 649.5 716.2 644.4 715.9 640 715.5 636.7 715 633.8 714.5 631 714 628 713.8 624.5 713.9 620.8 714.1 617.2 714.5 614 715 611.6 715.5 609.6 716.1 607.7 716.8 605.6 717.8 603 719.1 600.2 720.7 597.4 722.3 595 724 592.9 725.6 591 727.3 589.4 728.9 588 730.5 587 731.3 586.2 731.7 585.7 732.9 585.3 736.3 585.1 742.9 585.1 751.8 585.2 761.4 585.3 770 585.3 778 585.3 785.9 585.3 792.7 585.3 797.5z" fill="none" stroke="#2e2e0c" stroke-width="2.6" stroke-linejoin="round"/><path d="M557.5 797.5 557.5 792.6 557.5 785.7 557.5 777.8 557.5 770 557.4 762.1 557.2 753.6 557.2 745.5 557.5 738.7 558.1 733.8 558.8 730.3 560 727.2 561.6 723.6 563.9 719.2 566.6 714.6 569.7 710 573 706 576.4 702.6 580 699.6 583.8 697 588 694.7 592.6 692.6 597.4 690.8 602.6 689.3 607.9 688.3 613.6 687.7 619.6 687.6 625.6 687.8 631 688.3 635.8 689.1 640.2 690.3 644.4 691.8 648.4 693.5 652.5 695.5 656.6 697.8 660.4 700.3 663.4 702.8 665.7 705.3 667.5 708 668.6 710.7 669.2 713.2 669.2 715.7 668.5 718.3 667.4 720.6 665.7 722.5 663.1 724 659.6 725.1 656.3 725.9 654 726.5 657.6 716.7 657.6 716.7 657.6 716.7 657.6 716.7 657.6 716.7 657.6 716.7 657.6 716.7 657.6 716.7 657.6 716.7 658 716.7 658.7 716.8 658.8 716.8 657.6 716.7 654.3 716.5 649.5 716.2 644.4 715.9 640 715.5 636.7 715 633.8 714.5 631 714 628 713.8 624.5 713.9 620.8 714.1 617.2 714.5 614 715 611.6 715.5 609.6 716.1 607.7 716.8 605.6 717.8 603 719.1 600.2 720.7 597.4 722.3 595 724 592.9 725.6 591 727.3 589.4 728.9 588 730.5 587 731.3 586.2 731.7 585.7 732.9 585.3 736.3 585.1 742.9 585.1 751.8 585.2 761.4 585.3 770 585.3 778 585.3 785.9 585.3 792.7 585.3 797.5z" fill="#b6b6b6"/><path d="M559.6 797.5 559.6 792.7 559.6 785.7 559.6 777.8 559.6 770 559.5 762 559.4 753.4 559.4 745.3 559.6 738.5 560.2 733.8 560.9 730.4 562 727.5 563.6 724.1 565.8 720 568.5 715.5 571.5 711.2 574.7 707.4 578 704.1 581.5 701.3 585.3 698.7 589.4 696.5 593.7 694.5 598.4 692.7 603.3 691.3 608.4 690.4 613.9 689.8 619.7 689.6 625.5 689.8 630.8 690.3 635.4 691.1 639.7 692.2 643.8 693.6 647.8 695.2 651.9 697.1 656.1 699.2 659.9 701.5 663 703.9 665.2 706.2 666.8 708.7 667.8 711.1 668.3 713.5 668.3 715.8 667.7 718.1 666.6 720.3 665.1 722.1 662.7 723.4 659.5 724.4 656.4 725.2 654.3 725.7 657.6 716.7 657.6 716.7 657.6 716.7 657.6 716.7 657.6 716.7 657.6 716.7 657.6 716.7 657.6 716.7 657.6 716.7 658 716.7 658.7 716.8 658.8 716.8 657.6 716.7 654.3 716.5 649.5 716.2 644.4 715.9 640 715.5 636.7 715 633.8 714.5 631 714 628 713.8 624.5 713.9 620.8 714.1 617.2 714.5 614 715 611.6 715.5 609.6 716.1 607.7 716.8 605.6 717.8 603 719.1 600.2 720.7 597.4 722.3 595 724 592.9 725.6 591 727.3 589.4 728.9 588 730.5 587 731.3 586.2 731.7 585.7 732.9 585.3 736.3 585.1 742.9 585.1 751.8 585.2 761.4 585.3 770 585.3 778 585.3 785.9 585.3 792.7 585.3 797.5z" fill="#d6d6d6"/><path d="M561.8 797.5 561.8 792.7 561.8 785.7 561.8 777.8 561.8 770 561.7 762 561.5 753.3 561.5 745.1 561.8 738.3 562.3 733.7 563 730.5 564.1 727.8 565.7 724.7 567.8 720.7 570.4 716.5 573.3 712.4 576.4 708.8 579.6 705.7 583.1 702.9 586.8 700.4 590.7 698.3 594.9 696.3 599.3 694.7 604 693.4 608.8 692.4 614.1 691.8 619.8 691.7 625.4 691.8 630.5 692.2 635.1 693 639.2 694 643.2 695.4 647.1 696.9 651.3 698.6 655.5 700.7 659.4 702.8 662.5 704.9 664.7 707.1 666.1 709.3 667 711.6 667.4 713.7 667.4 715.9 666.9 718 665.9 720 664.5 721.6 662.2 722.8 659.3 723.8 656.5 724.5 654.6 725 657.6 716.7 657.6 716.7 657.6 716.7 657.6 716.7 657.6 716.7 657.6 716.7 657.6 716.7 657.6 716.7 657.6 716.7 658 716.7 658.7 716.8 658.8 716.8 657.6 716.7 654.3 716.5 649.5 716.2 644.4 715.9 640 715.5 636.7 715 633.8 714.5 631 714 628 713.8 624.5 713.9 620.8 714.1 617.2 714.5 614 715 611.6 715.5 609.6 716.1 607.7 716.8 605.6 717.8 603 719.1 600.2 720.7 597.4 722.3 595 724 592.9 725.6 591 727.3 589.4 728.9 588 730.5 587 731.3 586.2 731.7 585.7 732.9 585.3 736.3 585.1 742.9 585.1 751.8 585.2 761.4 585.3 770 585.3 778 585.3 785.9 585.3 792.7 585.3 797.5z" fill="#dfdfdf"/><path d="M563.9 797.5 563.9 792.7 563.9 785.7 563.9 777.8 563.9 770 563.8 761.9 563.7 753.2 563.6 744.9 563.9 738.1 564.4 733.6 565.2 730.6 566.2 728.1 567.7 725.2 569.7 721.5 572.2 717.5 575.1 713.6 578.1 710.2 581.2 707.2 584.6 704.5 588.3 702.1 592.1 700 596.1 698.2 600.2 696.6 604.7 695.4 609.3 694.5 614.4 693.9 619.9 693.7 625.3 693.8 630.3 694.2 634.7 694.9 638.7 695.9 642.6 697.2 646.5 698.6 650.7 700.2 655 702.1 659 704 662.1 706 664.1 708 665.4 710 666.2 712.1 666.5 714 666.5 716 666 717.9 665.1 719.7 663.8 721.2 661.8 722.3 659.2 723.1 656.6 723.8 654.8 724.2 657.6 716.7 657.6 716.7 657.6 716.7 657.6 716.7 657.6 716.7 657.6 716.7 657.6 716.7 657.6 716.7 657.6 716.7 658 716.7 658.7 716.8 658.8 716.8 657.6 716.7 654.3 716.5 649.5 716.2 644.4 715.9 640 715.5 636.7 715 633.8 714.5 631 714 628 713.8 624.5 713.9 620.8 714.1 617.2 714.5 614 715 611.6 715.5 609.6 716.1 607.7 716.8 605.6 717.8 603 719.1 600.2 720.7 597.4 722.3 595 724 592.9 725.6 591 727.3 589.4 728.9 588 730.5 587 731.3 586.2 731.7 585.7 732.9 585.3 736.3 585.1 742.9 585.1 751.8 585.2 761.4 585.3 770 585.3 778 585.3 785.9 585.3 792.7 585.3 797.5z" fill="#d9d9d9"/><path d="M566.1 797.5 566.1 792.7 566.1 785.8 566.1 777.8 566.1 770 566 761.8 565.8 753 565.8 744.7 566.1 738 566.6 733.6 567.3 730.7 568.3 728.5 569.7 725.7 571.7 722.2 574.1 718.5 576.9 714.8 579.8 711.5 582.9 708.7 586.2 706.1 589.7 703.8 593.4 701.8 597.2 700.1 601.2 698.6 605.3 697.4 609.8 696.5 614.7 696 620 695.7 625.2 695.8 630.1 696.1 634.3 696.8 638.2 697.8 642 698.9 645.8 700.3 650 701.8 654.4 703.5 658.5 705.3 661.6 707.1 663.6 708.9 664.8 710.7 665.4 712.5 665.6 714.3 665.6 716 665.2 717.8 664.4 719.4 663.2 720.7 661.4 721.7 659 722.5 656.7 723.1 655.1 723.5 657.6 716.7 657.6 716.7 657.6 716.7 657.6 716.7 657.6 716.7 657.6 716.7 657.6 716.7 657.6 716.7 657.6 716.7 658 716.7 658.7 716.8 658.8 716.8 657.6 716.7 654.3 716.5 649.5 716.2 644.4 715.9 640 715.5 636.7 715 633.8 714.5 631 714 628 713.8 624.5 713.9 620.8 714.1 617.2 714.5 614 715 611.6 715.5 609.6 716.1 607.7 716.8 605.6 717.8 603 719.1 600.2 720.7 597.4 722.3 595 724 592.9 725.6 591 727.3 589.4 728.9 588 730.5 587 731.3 586.2 731.7 585.7 732.9 585.3 736.3 585.1 742.9 585.1 751.8 585.2 761.4 585.3 770 585.3 778 585.3 785.9 585.3 792.7 585.3 797.5z" fill="#c6c6c6"/><path d="M568.2 797.5 568.2 792.7 568.2 785.8 568.2 777.9 568.2 770 568.1 761.8 568 752.9 567.9 744.5 568.2 737.8 568.7 733.5 569.4 730.8 570.3 728.8 571.8 726.3 573.7 723 576 719.5 578.6 716 581.5 712.9 584.5 710.2 587.8 707.7 591.2 705.5 594.8 703.6 598.4 701.9 602.1 700.5 606 699.4 610.2 698.6 615 698 620.1 697.8 625.2 697.8 629.8 698.1 634 698.7 637.7 699.6 641.4 700.7 645.2 702 649.4 703.3 653.9 704.9 658 706.5 661.2 708.1 663.1 709.7 664.1 711.4 664.5 713 664.7 714.5 664.7 716.1 664.3 717.7 663.6 719.1 662.6 720.3 661 721.2 658.9 721.9 656.8 722.4 655.4 722.7 657.6 716.7 657.6 716.7 657.6 716.7 657.6 716.7 657.6 716.7 657.6 716.7 657.6 716.7 657.6 716.7 657.6 716.7 658 716.7 658.7 716.8 658.8 716.8 657.6 716.7 654.3 716.5 649.5 716.2 644.4 715.9 640 715.5 636.7 715 633.8 714.5 631 714 628 713.8 624.5 713.9 620.8 714.1 617.2 714.5 614 715 611.6 715.5 609.6 716.1 607.7 716.8 605.6 717.8 603 719.1 600.2 720.7 597.4 722.3 595 724 592.9 725.6 591 727.3 589.4 728.9 588 730.5 587 731.3 586.2 731.7 585.7 732.9 585.3 736.3 585.1 742.9 585.1 751.8 585.2 761.4 585.3 770 585.3 778 585.3 785.9 585.3 792.7 585.3 797.5z" fill="#ababab"/><path d="M570.3 797.5 570.3 792.7 570.3 785.8 570.3 777.9 570.3 770 570.2 761.7 570.1 752.8 570.1 744.3 570.3 737.6 570.8 733.4 571.5 730.9 572.4 729.1 573.8 726.8 575.6 723.7 577.9 720.4 580.4 717.2 583.2 714.3 586.1 711.7 589.3 709.4 592.7 707.2 596.1 705.4 599.6 703.8 603 702.5 606.7 701.4 610.7 700.6 615.2 700.1 620.1 699.8 625.1 699.8 629.6 700.1 633.6 700.6 637.2 701.5 640.8 702.5 644.5 703.7 648.8 704.9 653.4 706.3 657.6 707.8 660.7 709.2 662.5 710.6 663.4 712 663.7 713.5 663.8 714.8 663.8 716.2 663.5 717.5 662.9 718.8 662 719.8 660.5 720.6 658.7 721.2 656.9 721.7 655.7 722 657.6 716.7 657.6 716.7 657.6 716.7 657.6 716.7 657.6 716.7 657.6 716.7 657.6 716.7 657.6 716.7 657.6 716.7 658 716.7 658.7 716.8 658.8 716.8 657.6 716.7 654.3 716.5 649.5 716.2 644.4 715.9 640 715.5 636.7 715 633.8 714.5 631 714 628 713.8 624.5 713.9 620.8 714.1 617.2 714.5 614 715 611.6 715.5 609.6 716.1 607.7 716.8 605.6 717.8 603 719.1 600.2 720.7 597.4 722.3 595 724 592.9 725.6 591 727.3 589.4 728.9 588 730.5 587 731.3 586.2 731.7 585.7 732.9 585.3 736.3 585.1 742.9 585.1 751.8 585.2 761.4 585.3 770 585.3 778 585.3 785.9 585.3 792.7 585.3 797.5z" fill="#727272"/><path d="M572.5 797.5 572.5 792.7 572.5 785.8 572.5 777.9 572.5 770 572.4 761.7 572.3 752.6 572.2 744.1 572.5 737.4 572.9 733.3 573.6 731.1 574.5 729.4 575.8 727.3 577.6 724.4 579.8 721.4 582.2 718.4 584.8 715.7 587.7 713.2 590.9 711 594.2 708.9 597.5 707.1 600.7 705.6 604 704.4 607.4 703.4 611.2 702.7 615.5 702.2 620.2 701.9 625 701.8 629.4 702 633.2 702.5 636.7 703.3 640.2 704.3 643.9 705.3 648.2 706.5 652.8 707.7 657.1 709 660.3 710.3 662 711.5 662.7 712.7 662.9 713.9 663 715.1 662.9 716.3 662.7 717.4 662.1 718.5 661.3 719.4 660.1 720.1 658.5 720.6 657 720.9 655.9 721.2 657.6 716.7 657.6 716.7 657.6 716.7 657.6 716.7 657.6 716.7 657.6 716.7 657.6 716.7 657.6 716.7 657.6 716.7 658 716.7 658.7 716.8 658.8 716.8 657.6 716.7 654.3 716.5 649.5 716.2 644.4 715.9 640 715.5 636.7 715 633.8 714.5 631 714 628 713.8 624.5 713.9 620.8 714.1 617.2 714.5 614 715 611.6 715.5 609.6 716.1 607.7 716.8 605.6 717.8 603 719.1 600.2 720.7 597.4 722.3 595 724 592.9 725.6 591 727.3 589.4 728.9 588 730.5 587 731.3 586.2 731.7 585.7 732.9 585.3 736.3 585.1 742.9 585.1 751.8 585.2 761.4 585.3 770 585.3 778 585.3 785.9 585.3 792.7 585.3 797.5z" fill="#3a3a3a"/><path d="M574.6 797.5 574.6 792.7 574.6 785.8 574.6 777.9 574.6 770 574.5 761.6 574.4 752.5 574.4 743.9 574.6 737.2 575.1 733.3 575.7 731.2 576.6 729.7 577.8 727.8 579.6 725.2 581.6 722.4 584 719.6 586.5 717.1 589.3 714.8 592.4 712.6 595.6 710.6 598.8 708.9 601.9 707.5 604.9 706.4 608.1 705.4 611.7 704.7 615.8 704.2 620.3 703.9 624.9 703.8 629.2 704 632.9 704.5 636.2 705.2 639.6 706.1 643.2 707 647.5 708 652.3 709.1 656.6 710.3 659.8 711.4 661.5 712.4 662.1 713.4 662.1 714.4 662.1 715.4 662.1 716.3 661.8 717.3 661.4 718.2 660.7 718.9 659.7 719.5 658.4 719.9 657.1 720.2 656.2 720.5 657.6 716.7 657.6 716.7 657.6 716.7 657.6 716.7 657.6 716.7 657.6 716.7 657.6 716.7 657.6 716.7 657.6 716.7 658 716.7 658.7 716.8 658.8 716.8 657.6 716.7 654.3 716.5 649.5 716.2 644.4 715.9 640 715.5 636.7 715 633.8 714.5 631 714 628 713.8 624.5 713.9 620.8 714.1 617.2 714.5 614 715 611.6 715.5 609.6 716.1 607.7 716.8 605.6 717.8 603 719.1 600.2 720.7 597.4 722.3 595 724 592.9 725.6 591 727.3 589.4 728.9 588 730.5 587 731.3 586.2 731.7 585.7 732.9 585.3 736.3 585.1 742.9 585.1 751.8 585.2 761.4 585.3 770 585.3 778 585.3 785.9 585.3 792.7 585.3 797.5z" fill="#1d1d1d"/><path d="M576.7 797.5 576.7 792.7 576.7 785.8 576.7 777.9 576.7 770 576.7 761.6 576.6 752.3 576.5 743.7 576.7 737 577.2 733.2 577.8 731.3 578.7 730.1 579.9 728.4 581.5 725.9 583.5 723.4 585.8 720.8 588.2 718.5 591 716.3 594 714.2 597.1 712.3 600.2 710.7 603.1 709.4 605.9 708.3 608.8 707.5 612.1 706.8 616.1 706.3 620.4 706 624.8 705.8 628.9 706 632.5 706.4 635.8 707.1 639 707.9 642.6 708.7 646.9 709.6 651.7 710.6 656.2 711.5 659.4 712.4 661 713.3 661.4 714.1 661.3 714.9 661.2 715.6 661.2 716.4 661 717.2 660.6 717.9 660.1 718.5 659.3 718.9 658.2 719.3 657.2 719.5 656.5 719.7 657.6 716.7 657.6 716.7 657.6 716.7 657.6 716.7 657.6 716.7 657.6 716.7 657.6 716.7 657.6 716.7 657.6 716.7 658 716.7 658.7 716.8 658.8 716.8 657.6 716.7 654.3 716.5 649.5 716.2 644.4 715.9 640 715.5 636.7 715 633.8 714.5 631 714 628 713.8 624.5 713.9 620.8 714.1 617.2 714.5 614 715 611.6 715.5 609.6 716.1 607.7 716.8 605.6 717.8 603 719.1 600.2 720.7 597.4 722.3 595 724 592.9 725.6 591 727.3 589.4 728.9 588 730.5 587 731.3 586.2 731.7 585.7 732.9 585.3 736.3 585.1 742.9 585.1 751.8 585.2 761.4 585.3 770 585.3 778 585.3 785.9 585.3 792.7 585.3 797.5z" fill="#131313"/><path d="M578.9 797.5 578.9 792.7 578.9 785.8 578.9 777.9 578.9 770 578.8 761.5 578.7 752.2 578.7 743.5 578.9 736.9 579.3 733.1 579.9 731.4 580.7 730.4 581.9 728.9 583.5 726.7 585.4 724.3 587.5 722 589.9 719.8 592.6 717.8 595.5 715.8 598.6 714 601.5 712.5 604.2 711.2 606.8 710.3 609.5 709.5 612.6 708.8 616.3 708.3 620.5 708 624.7 707.8 628.7 707.9 632.1 708.3 635.3 708.9 638.4 709.7 641.9 710.4 646.3 711.2 651.2 712 655.7 712.8 658.9 713.5 660.4 714.1 660.7 714.8 660.5 715.3 660.3 715.9 660.3 716.5 660.1 717.1 659.9 717.6 659.5 718 658.9 718.4 658.1 718.6 657.3 718.8 656.8 719 657.6 716.7 657.6 716.7 657.6 716.7 657.6 716.7 657.6 716.7 657.6 716.7 657.6 716.7 657.6 716.7 657.6 716.7 658 716.7 658.7 716.8 658.8 716.8 657.6 716.7 654.3 716.5 649.5 716.2 644.4 715.9 640 715.5 636.7 715 633.8 714.5 631 714 628 713.8 624.5 713.9 620.8 714.1 617.2 714.5 614 715 611.6 715.5 609.6 716.1 607.7 716.8 605.6 717.8 603 719.1 600.2 720.7 597.4 722.3 595 724 592.9 725.6 591 727.3 589.4 728.9 588 730.5 587 731.3 586.2 731.7 585.7 732.9 585.3 736.3 585.1 742.9 585.1 751.8 585.2 761.4 585.3 770 585.3 778 585.3 785.9 585.3 792.7 585.3 797.5z" fill="#121212"/><path d="M581 797.5 581 792.7 581 785.8 581 777.9 581 770 581 761.5 580.8 752.1 580.8 743.3 581 736.7 581.4 733 582 731.5 582.8 730.7 583.9 729.4 585.4 727.4 587.3 725.3 589.3 723.2 591.6 721.2 594.2 719.3 597.1 717.4 600.1 715.7 602.9 714.2 605.4 713.1 607.7 712.2 610.2 711.5 613.1 710.9 616.6 710.4 620.6 710 624.7 709.8 628.5 709.9 631.7 710.2 634.8 710.8 637.8 711.5 641.3 712.1 645.7 712.7 650.6 713.4 655.2 714 658.5 714.6 659.9 715 660 715.4 659.6 715.8 659.4 716.2 659.4 716.6 659.3 716.9 659.1 717.3 658.8 717.6 658.4 717.8 657.9 718 657.4 718.1 657 718.2 657.6 716.7 657.6 716.7 657.6 716.7 657.6 716.7 657.6 716.7 657.6 716.7 657.6 716.7 657.6 716.7 657.6 716.7 658 716.7 658.7 716.8 658.8 716.8 657.6 716.7 654.3 716.5 649.5 716.2 644.4 715.9 640 715.5 636.7 715 633.8 714.5 631 714 628 713.8 624.5 713.9 620.8 714.1 617.2 714.5 614 715 611.6 715.5 609.6 716.1 607.7 716.8 605.6 717.8 603 719.1 600.2 720.7 597.4 722.3 595 724 592.9 725.6 591 727.3 589.4 728.9 588 730.5 587 731.3 586.2 731.7 585.7 732.9 585.3 736.3 585.1 742.9 585.1 751.8 585.2 761.4 585.3 770 585.3 778 585.3 785.9 585.3 792.7 585.3 797.5z" fill="#1b1b1b"/><path d="M583.2 797.5 583.2 792.7 583.2 785.8 583.2 777.9 583.2 770 583.1 761.4 583 751.9 583 743.1 583.2 736.5 583.6 733 584.1 731.6 584.9 731 586 730 587.4 728.2 589.1 726.3 591.1 724.4 593.3 722.6 595.8 720.8 598.7 719.1 601.5 717.4 604.2 716 606.6 715 608.7 714.1 610.9 713.5 613.5 712.9 616.9 712.5 620.7 712.1 624.6 711.9 628.2 711.8 631.4 712.1 634.3 712.6 637.2 713.3 640.6 713.8 645 714.3 650.1 714.8 654.8 715.3 658 715.6 659.4 715.9 659.4 716.1 658.8 716.3 658.5 716.4 658.5 716.6 658.4 716.8 658.4 717 658.2 717.1 658 717.3 657.8 717.3 657.5 717.4 657.3 717.5 657.6 716.7 657.6 716.7 657.6 716.7 657.6 716.7 657.6 716.7 657.6 716.7 657.6 716.7 657.6 716.7 657.6 716.7 658 716.7 658.7 716.8 658.8 716.8 657.6 716.7 654.3 716.5 649.5 716.2 644.4 715.9 640 715.5 636.7 715 633.8 714.5 631 714 628 713.8 624.5 713.9 620.8 714.1 617.2 714.5 614 715 611.6 715.5 609.6 716.1 607.7 716.8 605.6 717.8 603 719.1 600.2 720.7 597.4 722.3 595 724 592.9 725.6 591 727.3 589.4 728.9 588 730.5 587 731.3 586.2 731.7 585.7 732.9 585.3 736.3 585.1 742.9 585.1 751.8 585.2 761.4 585.3 770 585.3 778 585.3 785.9 585.3 792.7 585.3 797.5z" fill="#676767"/></g><ellipse cx="657.6" cy="716.7" rx="12" ry="10.2" fill="url(#rb)"/><path d="M684 702 685.9 699.9 688.6 696.9 691.8 693.9 695 692 698.1 691.6 701.2 692.1 704.8 693.1 709 694 713.9 694.9 719.4 696 725.5 697.1 732 697.8 739.5 698.2 747.8 698.4 756 698.3 763.3 697.8 769.2 697 774.3 695.8 779.1 694.3 784 692.6 789.2 690.7 794.5 688.5 799.8 686.1 805 683.7 810.2 681.2 815.4 678.5 820.6 675.9 825.8 673.3 831 670.9 836.2 668.5 841.5 666.2 846.7 664 852 661.8 857.3 659.7 862.5 657.7 867.5 656 872.1 654.6 876.5 653.6 880.7 652.7 885 652 889.3 651.5 893.6 651.2 897.8 651 902 651 906.1 651.1 910.2 651.4 914.2 651.9 918 652.5 921.7 653.3 925.4 654.3 928.8 655.5 932 657 934.9 658.9 937.5 661 939.9 663.4 942 666 943.8 668.7 945.4 671.7 946.7 674.8 947.8 678 948.8 681.4 949.7 685 950.2 688.6 950.4 692 950.2 695.4 949.6 698.8 948.6 701.9 947 704.4 944.4 706.2 941 707.5 937.8 708.4 935.5 709 935.5 697.4 935.5 697.4 935.5 697.4 935.5 697.4 935.5 697.4 935.5 697.4 935.5 697.4 935.5 697.4 935.5 697.4 935.5 697.4 935.5 697.4 935.5 697.4 935.5 697.4 935.8 697.6 936.4 698 936.5 698.1 935.5 697.4 932.8 695.7 928.8 693.1 924.6 690.4 921 688 918.4 686 916.3 684.1 914.3 682.4 912 681 909.5 680 906.8 679.2 904 678.8 901 678.5 897.8 678.4 894.4 678.6 890.8 678.9 887 679.5 883.1 680.3 878.9 681.3 874.6 682.5 870 684 865.1 685.8 859.9 687.9 854.5 690.2 849 692.5 843.4 694.9 837.6 697.5 831.8 700 826 702.5 820.2 704.9 814.4 707.2 808.7 709.5 803 711.5 797.5 713.2 792.1 714.8 786.7 716.2 781 717.5 775.1 718.9 768.9 720.3 762.6 721.5 756 722.3 748.8 722.7 741.2 722.8 733.8 722.6 727 722.3 721.1 721.7 715.7 721 710.7 720 706 719 701.4 717.9 697.1 716.7 693.2 715.4 690 714 687.7 712.4 686 710.7 684.8 709.1 684 708z" fill="none" stroke="#2e2e0c" stroke-width="2.6" stroke-linejoin="round"/><path d="M684 702 685.9 699.9 688.6 696.9 691.8 693.9 695 692 698.1 691.6 701.2 692.1 704.8 693.1 709 694 713.9 694.9 719.4 696 725.5 697.1 732 697.8 739.5 698.2 747.8 698.4 756 698.3 763.3 697.8 769.2 697 774.3 695.8 779.1 694.3 784 692.6 789.2 690.7 794.5 688.5 799.8 686.1 805 683.7 810.2 681.2 815.4 678.5 820.6 675.9 825.8 673.3 831 670.9 836.2 668.5 841.5 666.2 846.7 664 852 661.8 857.3 659.7 862.5 657.7 867.5 656 872.1 654.6 876.5 653.6 880.7 652.7 885 652 889.3 651.5 893.6 651.2 897.8 651 902 651 906.1 651.1 910.2 651.4 914.2 651.9 918 652.5 921.7 653.3 925.4 654.3 928.8 655.5 932 657 934.9 658.9 937.5 661 939.9 663.4 942 666 943.8 668.7 945.4 671.7 946.7 674.8 947.8 678 948.8 681.4 949.7 685 950.2 688.6 950.4 692 950.2 695.4 949.6 698.8 948.6 701.9 947 704.4 944.4 706.2 941 707.5 937.8 708.4 935.5 709 935.5 697.4 935.5 697.4 935.5 697.4 935.5 697.4 935.5 697.4 935.5 697.4 935.5 697.4 935.5 697.4 935.5 697.4 935.5 697.4 935.5 697.4 935.5 697.4 935.5 697.4 935.8 697.6 936.4 698 936.5 698.1 935.5 697.4 932.8 695.7 928.8 693.1 924.6 690.4 921 688 918.4 686 916.3 684.1 914.3 682.4 912 681 909.5 680 906.8 679.2 904 678.8 901 678.5 897.8 678.4 894.4 678.6 890.8 678.9 887 679.5 883.1 680.3 878.9 681.3 874.6 682.5 870 684 865.1 685.8 859.9 687.9 854.5 690.2 849 692.5 843.4 694.9 837.6 697.5 831.8 700 826 702.5 820.2 704.9 814.4 707.2 808.7 709.5 803 711.5 797.5 713.2 792.1 714.8 786.7 716.2 781 717.5 775.1 718.9 768.9 720.3 762.6 721.5 756 722.3 748.8 722.7 741.2 722.8 733.8 722.6 727 722.3 721.1 721.7 715.7 721 710.7 720 706 719 701.4 717.9 697.1 716.7 693.2 715.4 690 714 687.7 712.4 686 710.7 684.8 709.1 684 708z" fill="#afafaf"/><path d="M684 702.4 685.8 700.5 688.5 697.7 691.5 695 694.7 693.3 697.8 693 701 693.6 704.6 694.6 708.8 695.5 713.7 696.4 719.2 697.5 725.2 698.5 731.7 699.2 739.2 699.6 747.4 699.8 755.6 699.7 762.9 699.2 768.8 698.4 774 697.2 778.8 695.7 783.8 694.1 789.1 692.2 794.4 690 799.6 687.7 804.9 685.3 810.1 682.8 815.3 680.2 820.6 677.6 825.8 675 831.1 672.6 836.3 670.2 841.6 667.9 846.8 665.7 852.1 663.5 857.5 661.3 862.7 659.3 867.6 657.6 872.3 656.3 876.6 655.2 880.9 654.3 885.1 653.6 889.4 653.1 893.6 652.8 897.8 652.6 901.9 652.6 906 652.8 910 653 913.9 653.5 917.6 654.2 921.3 655 924.8 656 928.2 657.3 931.4 658.8 934.3 660.7 937 662.9 939.5 665.3 941.6 667.8 943.4 670.5 944.8 673.2 946 676.1 947.1 679.1 948 682.3 948.8 685.7 949.4 689.1 949.5 692.3 949.3 695.5 948.8 698.7 947.8 701.6 946.3 704 943.9 705.7 940.7 706.9 937.6 707.7 935.5 708.3 935.5 697.4 935.5 697.4 935.5 697.4 935.5 697.4 935.5 697.4 935.5 697.4 935.5 697.4 935.5 697.4 935.5 697.4 935.5 697.4 935.5 697.4 935.5 697.4 935.5 697.4 935.8 697.6 936.4 698 936.5 698.1 935.5 697.4 932.8 695.7 928.8 693.1 924.6 690.4 921 688 918.4 686 916.3 684.1 914.3 682.4 912 681 909.5 680 906.8 679.2 904 678.8 901 678.5 897.8 678.4 894.4 678.6 890.8 678.9 887 679.5 883.1 680.3 878.9 681.3 874.6 682.5 870 684 865.1 685.8 859.9 687.9 854.5 690.2 849 692.5 843.4 694.9 837.6 697.5 831.8 700 826 702.5 820.2 704.9 814.4 707.2 808.7 709.5 803 711.5 797.5 713.2 792.1 714.8 786.7 716.2 781 717.5 775.1 718.9 768.9 720.3 762.6 721.5 756 722.3 748.8 722.7 741.2 722.8 733.8 722.6 727 722.3 721.1 721.7 715.7 721 710.7 720 706 719 701.4 717.9 697.1 716.7 693.2 715.4 690 714 687.7 712.4 686 710.7 684.8 709.1 684 708z" fill="#d1d1d1"/><path d="M684 702.7 685.8 701 688.3 698.5 691.3 696.1 694.4 694.6 697.5 694.4 700.8 695 704.4 696 708.6 696.9 713.5 697.9 719 699 724.9 700 731.4 700.7 738.8 701.1 747 701.2 755.2 701.1 762.4 700.7 768.4 699.8 773.7 698.6 778.6 697.2 783.6 695.5 788.9 693.7 794.2 691.6 799.5 689.3 804.8 687 810 684.5 815.3 681.9 820.6 679.3 825.8 676.7 831.1 674.3 836.4 671.9 841.7 669.6 847 667.4 852.3 665.2 857.6 663 862.8 661 867.8 659.3 872.4 657.9 876.8 656.8 881 655.9 885.2 655.2 889.5 654.7 893.7 654.4 897.8 654.2 901.9 654.2 905.9 654.4 909.8 654.7 913.6 655.2 917.3 655.9 920.9 656.7 924.3 657.8 927.6 659.1 930.7 660.6 933.7 662.6 936.5 664.8 939.1 667.2 941.2 669.7 943 672.2 944.3 674.8 945.4 677.5 946.4 680.3 947.2 683.3 948 686.4 948.5 689.6 948.6 692.6 948.4 695.6 947.9 698.6 947 701.4 945.6 703.6 943.4 705.2 940.4 706.3 937.5 707.1 935.5 707.6 935.5 697.4 935.5 697.4 935.5 697.4 935.5 697.4 935.5 697.4 935.5 697.4 935.5 697.4 935.5 697.4 935.5 697.4 935.5 697.4 935.5 697.4 935.5 697.4 935.5 697.4 935.8 697.6 936.4 698 936.5 698.1 935.5 697.4 932.8 695.7 928.8 693.1 924.6 690.4 921 688 918.4 686 916.3 684.1 914.3 682.4 912 681 909.5 680 906.8 679.2 904 678.8 901 678.5 897.8 678.4 894.4 678.6 890.8 678.9 887 679.5 883.1 680.3 878.9 681.3 874.6 682.5 870 684 865.1 685.8 859.9 687.9 854.5 690.2 849 692.5 843.4 694.9 837.6 697.5 831.8 700 826 702.5 820.2 704.9 814.4 707.2 808.7 709.5 803 711.5 797.5 713.2 792.1 714.8 786.7 716.2 781 717.5 775.1 718.9 768.9 720.3 762.6 721.5 756 722.3 748.8 722.7 741.2 722.8 733.8 722.6 727 722.3 721.1 721.7 715.7 721 710.7 720 706 719 701.4 717.9 697.1 716.7 693.2 715.4 690 714 687.7 712.4 686 710.7 684.8 709.1 684 708z" fill="#dcdcdc"/><path d="M684 703.1 685.7 701.5 688.2 699.3 691.1 697.2 694.1 695.9 697.2 695.8 700.5 696.5 704.2 697.5 708.5 698.4 713.4 699.3 718.8 700.4 724.7 701.4 731.1 702.1 738.5 702.5 746.6 702.7 754.8 702.6 762 702.1 768 701.3 773.3 700.1 778.3 698.6 783.5 697 788.8 695.2 794.1 693.1 799.4 690.9 804.6 688.6 809.9 686.2 815.2 683.6 820.5 681 825.8 678.5 831.2 676 836.5 673.6 841.8 671.3 847.1 669 852.4 666.8 857.8 664.7 863 662.7 867.9 660.9 872.6 659.6 876.9 658.5 881.1 657.6 885.4 656.9 889.6 656.3 893.7 656 897.8 655.8 901.8 655.9 905.7 656 909.6 656.3 913.3 656.8 916.9 657.5 920.4 658.4 923.8 659.5 927 660.9 930.1 662.5 933.1 664.4 936 666.7 938.6 669.1 940.9 671.5 942.5 673.9 943.8 676.3 944.8 678.8 945.6 681.4 946.5 684.2 947.2 687.2 947.6 690.1 947.8 693 947.6 695.7 947.1 698.5 946.3 701.1 945 703.2 942.9 704.7 940.1 705.7 937.4 706.4 935.5 707 935.5 697.4 935.5 697.4 935.5 697.4 935.5 697.4 935.5 697.4 935.5 697.4 935.5 697.4 935.5 697.4 935.5 697.4 935.5 697.4 935.5 697.4 935.5 697.4 935.5 697.4 935.8 697.6 936.4 698 936.5 698.1 935.5 697.4 932.8 695.7 928.8 693.1 924.6 690.4 921 688 918.4 686 916.3 684.1 914.3 682.4 912 681 909.5 680 906.8 679.2 904 678.8 901 678.5 897.8 678.4 894.4 678.6 890.8 678.9 887 679.5 883.1 680.3 878.9 681.3 874.6 682.5 870 684 865.1 685.8 859.9 687.9 854.5 690.2 849 692.5 843.4 694.9 837.6 697.5 831.8 700 826 702.5 820.2 704.9 814.4 707.2 808.7 709.5 803 711.5 797.5 713.2 792.1 714.8 786.7 716.2 781 717.5 775.1 718.9 768.9 720.3 762.6 721.5 756 722.3 748.8 722.7 741.2 722.8 733.8 722.6 727 722.3 721.1 721.7 715.7 721 710.7 720 706 719 701.4 717.9 697.1 716.7 693.2 715.4 690 714 687.7 712.4 686 710.7 684.8 709.1 684 708z" fill="#cccccc"/><path d="M684 703.4 685.7 702.1 688 700.1 690.8 698.3 693.8 697.2 696.9 697.2 700.3 697.9 704 698.9 708.3 699.9 713.2 700.8 718.5 701.9 724.4 702.9 730.8 703.6 738.1 703.9 746.3 704.1 754.3 704 761.6 703.6 767.7 702.7 773 701.5 778.1 700.1 783.3 698.5 788.6 696.7 793.9 694.7 799.2 692.5 804.5 690.2 809.9 687.8 815.2 685.3 820.5 682.7 825.8 680.2 831.2 677.7 836.6 675.3 841.9 673 847.2 670.7 852.6 668.5 857.9 666.3 863.1 664.3 868.1 662.6 872.7 661.2 877.1 660.1 881.3 659.2 885.5 658.5 889.7 657.9 893.8 657.6 897.8 657.5 901.8 657.5 905.6 657.6 909.4 658 913.1 658.5 916.6 659.2 920 660.1 923.2 661.3 926.4 662.7 929.4 664.3 932.5 666.3 935.5 668.6 938.2 671 940.5 673.4 942.1 675.6 943.3 677.9 944.1 680.2 944.9 682.6 945.7 685.2 946.3 687.9 946.8 690.6 946.9 693.3 946.7 695.9 946.3 698.5 945.5 700.8 944.3 702.8 942.3 704.1 939.7 705.1 937.2 705.8 935.5 706.3 935.5 697.4 935.5 697.4 935.5 697.4 935.5 697.4 935.5 697.4 935.5 697.4 935.5 697.4 935.5 697.4 935.5 697.4 935.5 697.4 935.5 697.4 935.5 697.4 935.5 697.4 935.8 697.6 936.4 698 936.5 698.1 935.5 697.4 932.8 695.7 928.8 693.1 924.6 690.4 921 688 918.4 686 916.3 684.1 914.3 682.4 912 681 909.5 680 906.8 679.2 904 678.8 901 678.5 897.8 678.4 894.4 678.6 890.8 678.9 887 679.5 883.1 680.3 878.9 681.3 874.6 682.5 870 684 865.1 685.8 859.9 687.9 854.5 690.2 849 692.5 843.4 694.9 837.6 697.5 831.8 700 826 702.5 820.2 704.9 814.4 707.2 808.7 709.5 803 711.5 797.5 713.2 792.1 714.8 786.7 716.2 781 717.5 775.1 718.9 768.9 720.3 762.6 721.5 756 722.3 748.8 722.7 741.2 722.8 733.8 722.6 727 722.3 721.1 721.7 715.7 721 710.7 720 706 719 701.4 717.9 697.1 716.7 693.2 715.4 690 714 687.7 712.4 686 710.7 684.8 709.1 684 708z" fill="#adadad"/><path d="M684 703.8 685.6 702.6 687.9 700.9 690.6 699.3 693.5 698.5 696.6 698.6 700 699.4 703.8 700.4 708.1 701.4 713 702.3 718.3 703.4 724.2 704.3 730.5 705 737.8 705.4 745.9 705.6 753.9 705.4 761.2 705 767.3 704.2 772.7 703 777.9 701.5 783.1 699.9 788.5 698.2 793.8 696.2 799.1 694.1 804.4 691.9 809.8 689.5 815.1 687 820.5 684.4 825.9 681.9 831.2 679.4 836.7 677 842 674.7 847.4 672.4 852.7 670.2 858.1 668 863.3 666 868.2 664.2 872.8 662.8 877.2 661.7 881.4 660.8 885.6 660.1 889.7 659.6 893.8 659.2 897.8 659.1 901.7 659.1 905.5 659.3 909.2 659.6 912.8 660.1 916.2 660.9 919.5 661.9 922.7 663 925.8 664.5 928.8 666.1 931.8 668.1 935 670.5 937.8 672.9 940.1 675.2 941.7 677.4 942.7 679.4 943.5 681.5 944.2 683.7 944.9 686.1 945.5 688.6 945.9 691.2 946 693.6 945.8 696 945.4 698.4 944.7 700.6 943.6 702.3 941.8 703.6 939.4 704.5 937.1 705.1 935.5 705.6 935.5 697.4 935.5 697.4 935.5 697.4 935.5 697.4 935.5 697.4 935.5 697.4 935.5 697.4 935.5 697.4 935.5 697.4 935.5 697.4 935.5 697.4 935.5 697.4 935.5 697.4 935.8 697.6 936.4 698 936.5 698.1 935.5 697.4 932.8 695.7 928.8 693.1 924.6 690.4 921 688 918.4 686 916.3 684.1 914.3 682.4 912 681 909.5 680 906.8 679.2 904 678.8 901 678.5 897.8 678.4 894.4 678.6 890.8 678.9 887 679.5 883.1 680.3 878.9 681.3 874.6 682.5 870 684 865.1 685.8 859.9 687.9 854.5 690.2 849 692.5 843.4 694.9 837.6 697.5 831.8 700 826 702.5 820.2 704.9 814.4 707.2 808.7 709.5 803 711.5 797.5 713.2 792.1 714.8 786.7 716.2 781 717.5 775.1 718.9 768.9 720.3 762.6 721.5 756 722.3 748.8 722.7 741.2 722.8 733.8 722.6 727 722.3 721.1 721.7 715.7 721 710.7 720 706 719 701.4 717.9 697.1 716.7 693.2 715.4 690 714 687.7 712.4 686 710.7 684.8 709.1 684 708z" fill="#c4c4c4"/><path d="M684 704.1 685.5 703.2 687.7 701.8 690.3 700.4 693.2 699.8 696.3 700 699.8 700.8 703.6 701.8 707.9 702.8 712.8 703.8 718.1 704.8 723.9 705.8 730.2 706.4 737.5 706.8 745.5 707 753.5 706.9 760.7 706.4 766.9 705.6 772.4 704.4 777.6 703 782.9 701.4 788.3 699.7 793.7 697.8 799 695.7 804.3 693.5 809.7 691.2 815.1 688.7 820.5 686.1 825.9 683.6 831.3 681.2 836.7 678.7 842.2 676.3 847.5 674.1 852.9 671.8 858.2 669.6 863.4 667.6 868.4 665.9 873 664.5 877.4 663.3 881.6 662.4 885.7 661.7 889.8 661.2 893.9 660.8 897.8 660.7 901.6 660.7 905.4 660.9 909 661.2 912.5 661.8 915.9 662.6 919.1 663.6 922.2 664.8 925.2 666.2 928.1 667.9 931.2 670 934.4 672.4 937.4 674.8 939.7 677.1 941.2 679.1 942.2 681 942.8 682.8 943.5 684.8 944.1 687 944.7 689.4 945 691.7 945.1 693.9 945 696.1 944.6 698.3 944 700.3 942.9 701.9 941.3 703.1 939.1 703.9 937 704.5 935.5 704.9 935.5 697.4 935.5 697.4 935.5 697.4 935.5 697.4 935.5 697.4 935.5 697.4 935.5 697.4 935.5 697.4 935.5 697.4 935.5 697.4 935.5 697.4 935.5 697.4 935.5 697.4 935.8 697.6 936.4 698 936.5 698.1 935.5 697.4 932.8 695.7 928.8 693.1 924.6 690.4 921 688 918.4 686 916.3 684.1 914.3 682.4 912 681 909.5 680 906.8 679.2 904 678.8 901 678.5 897.8 678.4 894.4 678.6 890.8 678.9 887 679.5 883.1 680.3 878.9 681.3 874.6 682.5 870 684 865.1 685.8 859.9 687.9 854.5 690.2 849 692.5 843.4 694.9 837.6 697.5 831.8 700 826 702.5 820.2 704.9 814.4 707.2 808.7 709.5 803 711.5 797.5 713.2 792.1 714.8 786.7 716.2 781 717.5 775.1 718.9 768.9 720.3 762.6 721.5 756 722.3 748.8 722.7 741.2 722.8 733.8 722.6 727 722.3 721.1 721.7 715.7 721 710.7 720 706 719 701.4 717.9 697.1 716.7 693.2 715.4 690 714 687.7 712.4 686 710.7 684.8 709.1 684 708z" fill="#ebebeb"/><path d="M684 704.5 685.5 703.7 687.5 702.6 690.1 701.5 692.9 701.1 696.1 701.4 699.5 702.2 703.4 703.3 707.8 704.3 712.6 705.3 717.9 706.3 723.6 707.2 729.9 707.9 737.1 708.3 745.1 708.4 753.1 708.3 760.3 707.9 766.5 707 772.1 705.9 777.4 704.4 782.8 702.9 788.2 701.2 793.5 699.3 798.8 697.3 804.2 695.1 809.6 692.8 815 690.4 820.4 687.8 825.9 685.3 831.3 682.9 836.8 680.4 842.3 678 847.6 675.7 853 673.5 858.4 671.3 863.6 669.3 868.5 667.5 873.1 666.1 877.5 665 881.7 664.1 885.8 663.3 889.9 662.8 893.9 662.4 897.8 662.3 901.6 662.3 905.2 662.5 908.8 662.9 912.2 663.4 915.5 664.2 918.7 665.3 921.6 666.5 924.5 668 927.5 669.8 930.6 671.8 933.9 674.3 937 676.7 939.3 678.9 940.8 680.8 941.7 682.5 942.2 684.2 942.7 686 943.3 688 943.8 690.1 944.2 692.2 944.3 694.2 944.1 696.2 943.8 698.2 943.2 700 942.3 701.5 940.8 702.6 938.8 703.3 936.8 703.8 935.5 704.2 935.5 697.4 935.5 697.4 935.5 697.4 935.5 697.4 935.5 697.4 935.5 697.4 935.5 697.4 935.5 697.4 935.5 697.4 935.5 697.4 935.5 697.4 935.5 697.4 935.5 697.4 935.8 697.6 936.4 698 936.5 698.1 935.5 697.4 932.8 695.7 928.8 693.1 924.6 690.4 921 688 918.4 686 916.3 684.1 914.3 682.4 912 681 909.5 680 906.8 679.2 904 678.8 901 678.5 897.8 678.4 894.4 678.6 890.8 678.9 887 679.5 883.1 680.3 878.9 681.3 874.6 682.5 870 684 865.1 685.8 859.9 687.9 854.5 690.2 849 692.5 843.4 694.9 837.6 697.5 831.8 700 826 702.5 820.2 704.9 814.4 707.2 808.7 709.5 803 711.5 797.5 713.2 792.1 714.8 786.7 716.2 781 717.5 775.1 718.9 768.9 720.3 762.6 721.5 756 722.3 748.8 722.7 741.2 722.8 733.8 722.6 727 722.3 721.1 721.7 715.7 721 710.7 720 706 719 701.4 717.9 697.1 716.7 693.2 715.4 690 714 687.7 712.4 686 710.7 684.8 709.1 684 708z" fill="#dcdcdc"/><path d="M684 704.8 685.4 704.2 687.4 703.4 689.8 702.6 692.6 702.4 695.8 702.8 699.3 703.7 703.2 704.8 707.6 705.8 712.4 706.7 717.7 707.8 723.4 708.7 729.6 709.3 736.8 709.7 744.7 709.9 752.6 709.8 759.9 709.3 766.1 708.5 771.8 707.3 777.2 705.9 782.6 704.3 788 702.7 793.4 700.8 798.7 698.9 804.1 696.8 809.5 694.5 815 692 820.4 689.5 825.9 687 831.4 684.6 836.9 682.1 842.4 679.7 847.8 677.4 853.2 675.2 858.5 673 863.7 670.9 868.7 669.2 873.3 667.8 877.6 666.6 881.8 665.7 885.9 664.9 890 664.4 894 664.1 897.8 663.9 901.5 663.9 905.1 664.1 908.6 664.5 912 665.1 915.2 665.9 918.2 667 921.1 668.3 923.9 669.8 926.8 671.6 930 673.7 933.4 676.1 936.5 678.6 938.9 680.8 940.4 682.5 941.1 684.1 941.6 685.5 942 687.1 942.5 688.9 943 690.8 943.3 692.7 943.4 694.5 943.3 696.3 943 698.1 942.4 699.8 941.6 701.1 940.2 702.1 938.4 702.7 936.7 703.2 935.5 703.5 935.5 697.4 935.5 697.4 935.5 697.4 935.5 697.4 935.5 697.4 935.5 697.4 935.5 697.4 935.5 697.4 935.5 697.4 935.5 697.4 935.5 697.4 935.5 697.4 935.5 697.4 935.8 697.6 936.4 698 936.5 698.1 935.5 697.4 932.8 695.7 928.8 693.1 924.6 690.4 921 688 918.4 686 916.3 684.1 914.3 682.4 912 681 909.5 680 906.8 679.2 904 678.8 901 678.5 897.8 678.4 894.4 678.6 890.8 678.9 887 679.5 883.1 680.3 878.9 681.3 874.6 682.5 870 684 865.1 685.8 859.9 687.9 854.5 690.2 849 692.5 843.4 694.9 837.6 697.5 831.8 700 826 702.5 820.2 704.9 814.4 707.2 808.7 709.5 803 711.5 797.5 713.2 792.1 714.8 786.7 716.2 781 717.5 775.1 718.9 768.9 720.3 762.6 721.5 756 722.3 748.8 722.7 741.2 722.8 733.8 722.6 727 722.3 721.1 721.7 715.7 721 710.7 720 706 719 701.4 717.9 697.1 716.7 693.2 715.4 690 714 687.7 712.4 686 710.7 684.8 709.1 684 708z" fill="#5b5b5b"/><path d="M684 705.2 685.3 704.8 687.2 704.2 689.6 703.7 692.4 703.6 695.5 704.2 699 705.1 703 706.2 707.4 707.2 712.2 708.2 717.4 709.2 723.1 710.1 729.4 710.8 736.5 711.1 744.3 711.3 752.2 711.2 759.4 710.8 765.7 709.9 771.5 708.7 776.9 707.3 782.4 705.8 787.9 704.2 793.2 702.4 798.6 700.5 803.9 698.4 809.4 696.2 814.9 693.7 820.4 691.2 825.9 688.8 831.4 686.3 837 683.8 842.5 681.4 847.9 679.1 853.3 676.8 858.7 674.6 863.9 672.6 868.8 670.8 873.4 669.4 877.8 668.2 882 667.3 886.1 666.6 890.1 666 894 665.7 897.8 665.5 901.5 665.6 905 665.8 908.4 666.1 911.7 666.7 914.8 667.6 917.8 668.7 920.6 670.1 923.3 671.6 926.2 673.4 929.4 675.6 932.9 678 936.1 680.5 938.6 682.6 940 684.3 940.6 685.6 940.9 686.9 941.3 688.3 941.8 689.9 942.2 691.6 942.4 693.2 942.5 694.9 942.4 696.5 942.1 698.1 941.6 699.5 940.9 700.7 939.7 701.5 938.1 702.1 936.6 702.6 935.5 702.9 935.5 697.4 935.5 697.4 935.5 697.4 935.5 697.4 935.5 697.4 935.5 697.4 935.5 697.4 935.5 697.4 935.5 697.4 935.5 697.4 935.5 697.4 935.5 697.4 935.5 697.4 935.8 697.6 936.4 698 936.5 698.1 935.5 697.4 932.8 695.7 928.8 693.1 924.6 690.4 921 688 918.4 686 916.3 684.1 914.3 682.4 912 681 909.5 680 906.8 679.2 904 678.8 901 678.5 897.8 678.4 894.4 678.6 890.8 678.9 887 679.5 883.1 680.3 878.9 681.3 874.6 682.5 870 684 865.1 685.8 859.9 687.9 854.5 690.2 849 692.5 843.4 694.9 837.6 697.5 831.8 700 826 702.5 820.2 704.9 814.4 707.2 808.7 709.5 803 711.5 797.5 713.2 792.1 714.8 786.7 716.2 781 717.5 775.1 718.9 768.9 720.3 762.6 721.5 756 722.3 748.8 722.7 741.2 722.8 733.8 722.6 727 722.3 721.1 721.7 715.7 721 710.7 720 706 719 701.4 717.9 697.1 716.7 693.2 715.4 690 714 687.7 712.4 686 710.7 684.8 709.1 684 708z" fill="#1f1f1f"/><path d="M684 705.5 685.3 705.3 687.1 705 689.4 704.8 692.1 704.9 695.2 705.6 698.8 706.6 702.8 707.7 707.2 708.7 712 709.7 717.2 710.7 722.9 711.6 729.1 712.2 736.1 712.6 743.9 712.7 751.8 712.6 759 712.2 765.3 711.4 771.1 710.2 776.7 708.8 782.2 707.2 787.7 705.7 793.1 703.9 798.4 702.1 803.8 700.1 809.3 697.8 814.8 695.4 820.4 692.9 825.9 690.5 831.5 688 837.1 685.5 842.6 683.1 848.1 680.8 853.5 678.5 858.8 676.3 864 674.2 869 672.5 873.6 671 877.9 669.9 882.1 668.9 886.2 668.2 890.2 667.6 894.1 667.3 897.8 667.1 901.4 667.2 904.9 667.4 908.2 667.8 911.4 668.4 914.5 669.3 917.3 670.4 920 671.8 922.7 673.4 925.5 675.2 928.8 677.4 932.4 679.9 935.7 682.4 938.2 684.5 939.5 686 940.1 687.2 940.3 688.2 940.6 689.4 941 690.8 941.3 692.3 941.6 693.8 941.6 695.2 941.5 696.6 941.3 698 940.9 699.2 940.2 700.3 939.2 701 937.8 701.5 936.4 701.9 935.5 702.2 935.5 697.4 935.5 697.4 935.5 697.4 935.5 697.4 935.5 697.4 935.5 697.4 935.5 697.4 935.5 697.4 935.5 697.4 935.5 697.4 935.5 697.4 935.5 697.4 935.5 697.4 935.8 697.6 936.4 698 936.5 698.1 935.5 697.4 932.8 695.7 928.8 693.1 924.6 690.4 921 688 918.4 686 916.3 684.1 914.3 682.4 912 681 909.5 680 906.8 679.2 904 678.8 901 678.5 897.8 678.4 894.4 678.6 890.8 678.9 887 679.5 883.1 680.3 878.9 681.3 874.6 682.5 870 684 865.1 685.8 859.9 687.9 854.5 690.2 849 692.5 843.4 694.9 837.6 697.5 831.8 700 826 702.5 820.2 704.9 814.4 707.2 808.7 709.5 803 711.5 797.5 713.2 792.1 714.8 786.7 716.2 781 717.5 775.1 718.9 768.9 720.3 762.6 721.5 756 722.3 748.8 722.7 741.2 722.8 733.8 722.6 727 722.3 721.1 721.7 715.7 721 710.7 720 706 719 701.4 717.9 697.1 716.7 693.2 715.4 690 714 687.7 712.4 686 710.7 684.8 709.1 684 708z" fill="#171717"/><path d="M684 705.9 685.2 705.9 686.9 705.8 689.1 705.9 691.8 706.2 694.9 707 698.5 708 702.6 709.1 707.1 710.2 711.8 711.2 717 712.2 722.6 713 728.8 713.7 735.8 714 743.6 714.2 751.4 714.1 758.6 713.7 764.9 712.8 770.8 711.6 776.5 710.2 782.1 708.7 787.6 707.2 793 705.5 798.3 703.7 803.7 701.7 809.2 699.5 814.8 697.1 820.4 694.6 825.9 692.2 831.5 689.7 837.1 687.2 842.7 684.8 848.2 682.4 853.6 680.2 859 677.9 864.2 675.9 869.1 674.1 873.7 672.7 878.1 671.5 882.2 670.5 886.3 669.8 890.3 669.2 894.1 668.9 897.8 668.7 901.4 668.8 904.8 669 908 669.4 911.1 670.1 914.1 670.9 916.9 672.1 919.5 673.6 922.1 675.2 924.9 677.1 928.2 679.3 931.9 681.8 935.3 684.3 937.8 686.3 939.1 687.7 939.6 688.7 939.7 689.6 939.8 690.6 940.2 691.8 940.5 693 940.7 694.3 940.8 695.5 940.7 696.7 940.5 697.9 940.1 699 939.6 699.9 938.6 700.5 937.5 701 936.3 701.3 935.5 701.5 935.5 697.4 935.5 697.4 935.5 697.4 935.5 697.4 935.5 697.4 935.5 697.4 935.5 697.4 935.5 697.4 935.5 697.4 935.5 697.4 935.5 697.4 935.5 697.4 935.5 697.4 935.8 697.6 936.4 698 936.5 698.1 935.5 697.4 932.8 695.7 928.8 693.1 924.6 690.4 921 688 918.4 686 916.3 684.1 914.3 682.4 912 681 909.5 680 906.8 679.2 904 678.8 901 678.5 897.8 678.4 894.4 678.6 890.8 678.9 887 679.5 883.1 680.3 878.9 681.3 874.6 682.5 870 684 865.1 685.8 859.9 687.9 854.5 690.2 849 692.5 843.4 694.9 837.6 697.5 831.8 700 826 702.5 820.2 704.9 814.4 707.2 808.7 709.5 803 711.5 797.5 713.2 792.1 714.8 786.7 716.2 781 717.5 775.1 718.9 768.9 720.3 762.6 721.5 756 722.3 748.8 722.7 741.2 722.8 733.8 722.6 727 722.3 721.1 721.7 715.7 721 710.7 720 706 719 701.4 717.9 697.1 716.7 693.2 715.4 690 714 687.7 712.4 686 710.7 684.8 709.1 684 708z" fill="#131313"/><path d="M684 706.2 685.2 706.4 686.8 706.6 688.9 707 691.5 707.5 694.6 708.4 698.3 709.5 702.4 710.6 706.9 711.6 711.7 712.6 716.8 713.6 722.4 714.5 728.5 715.1 735.5 715.5 743.2 715.6 751 715.5 758.1 715.1 764.5 714.3 770.5 713.1 776.2 711.7 781.9 710.2 787.4 708.7 792.8 707 798.2 705.3 803.6 703.3 809.1 701.2 814.7 698.8 820.3 696.4 825.9 693.9 831.6 691.5 837.2 688.9 842.8 686.5 848.3 684.1 853.7 681.8 859.1 679.6 864.3 677.5 869.3 675.8 873.9 674.3 878.2 673.1 882.4 672.2 886.4 671.4 890.3 670.9 894.1 670.5 897.8 670.4 901.3 670.4 904.6 670.6 907.8 671.1 910.8 671.7 913.8 672.6 916.5 673.8 919 675.3 921.5 677 924.2 678.9 927.6 681.1 931.4 683.7 934.9 686.2 937.4 688.2 938.7 689.4 939 690.3 939 690.9 939.1 691.7 939.4 692.7 939.7 693.7 939.8 694.8 939.9 695.8 939.8 696.8 939.6 697.8 939.3 698.7 938.9 699.5 938.1 700 937.1 700.4 936.2 700.6 935.5 700.8 935.5 697.4 935.5 697.4 935.5 697.4 935.5 697.4 935.5 697.4 935.5 697.4 935.5 697.4 935.5 697.4 935.5 697.4 935.5 697.4 935.5 697.4 935.5 697.4 935.5 697.4 935.8 697.6 936.4 698 936.5 698.1 935.5 697.4 932.8 695.7 928.8 693.1 924.6 690.4 921 688 918.4 686 916.3 684.1 914.3 682.4 912 681 909.5 680 906.8 679.2 904 678.8 901 678.5 897.8 678.4 894.4 678.6 890.8 678.9 887 679.5 883.1 680.3 878.9 681.3 874.6 682.5 870 684 865.1 685.8 859.9 687.9 854.5 690.2 849 692.5 843.4 694.9 837.6 697.5 831.8 700 826 702.5 820.2 704.9 814.4 707.2 808.7 709.5 803 711.5 797.5 713.2 792.1 714.8 786.7 716.2 781 717.5 775.1 718.9 768.9 720.3 762.6 721.5 756 722.3 748.8 722.7 741.2 722.8 733.8 722.6 727 722.3 721.1 721.7 715.7 721 710.7 720 706 719 701.4 717.9 697.1 716.7 693.2 715.4 690 714 687.7 712.4 686 710.7 684.8 709.1 684 708z" fill="#161616"/><path d="M684 706.6 685.1 706.9 686.6 707.4 688.6 708.1 691.2 708.8 694.3 709.8 698 710.9 702.2 712.1 706.7 713.1 711.5 714.1 716.6 715.1 722.1 715.9 728.2 716.5 735.1 716.9 742.8 717.1 750.5 717 757.7 716.5 764.2 715.7 770.2 714.5 776 713.1 781.7 711.6 787.3 710.2 792.7 708.6 798 706.9 803.5 705 809 702.8 814.7 700.5 820.3 698.1 826 695.6 831.6 693.2 837.3 690.7 842.9 688.2 848.5 685.8 853.9 683.5 859.3 681.3 864.5 679.2 869.4 677.4 874 676 878.4 674.8 882.5 673.8 886.5 673 890.4 672.5 894.2 672.1 897.8 672 901.2 672 904.5 672.3 907.6 672.7 910.6 673.4 913.4 674.3 916 675.5 918.4 677.1 920.9 678.8 923.6 680.7 927 683 930.9 685.6 934.4 688.1 937 690 938.2 691.2 938.5 691.8 938.4 692.2 938.4 692.8 938.6 693.6 938.8 694.5 939 695.3 939 696.1 938.9 696.9 938.8 697.7 938.6 698.5 938.2 699 937.6 699.5 936.8 699.8 936 700 935.5 700.1 935.5 697.4 935.5 697.4 935.5 697.4 935.5 697.4 935.5 697.4 935.5 697.4 935.5 697.4 935.5 697.4 935.5 697.4 935.5 697.4 935.5 697.4 935.5 697.4 935.5 697.4 935.8 697.6 936.4 698 936.5 698.1 935.5 697.4 932.8 695.7 928.8 693.1 924.6 690.4 921 688 918.4 686 916.3 684.1 914.3 682.4 912 681 909.5 680 906.8 679.2 904 678.8 901 678.5 897.8 678.4 894.4 678.6 890.8 678.9 887 679.5 883.1 680.3 878.9 681.3 874.6 682.5 870 684 865.1 685.8 859.9 687.9 854.5 690.2 849 692.5 843.4 694.9 837.6 697.5 831.8 700 826 702.5 820.2 704.9 814.4 707.2 808.7 709.5 803 711.5 797.5 713.2 792.1 714.8 786.7 716.2 781 717.5 775.1 718.9 768.9 720.3 762.6 721.5 756 722.3 748.8 722.7 741.2 722.8 733.8 722.6 727 722.3 721.1 721.7 715.7 721 710.7 720 706 719 701.4 717.9 697.1 716.7 693.2 715.4 690 714 687.7 712.4 686 710.7 684.8 709.1 684 708z" fill="#454545"/><path d="M684 706.9 685 707.5 686.5 708.2 688.4 709.2 690.9 710.1 694 711.2 697.8 712.3 702 713.5 706.5 714.6 711.3 715.6 716.3 716.6 721.8 717.4 727.9 718 734.8 718.3 742.4 718.5 750.1 718.4 757.3 718 763.8 717.1 769.9 715.9 775.8 714.6 781.5 713.1 787.1 711.7 792.5 710.1 797.9 708.5 803.4 706.6 809 704.5 814.6 702.2 820.3 699.8 826 697.3 831.7 694.9 837.4 692.4 843.1 689.9 848.6 687.5 854 685.2 859.4 682.9 864.6 680.8 869.6 679.1 874.2 677.6 878.5 676.4 882.6 675.4 886.6 674.6 890.5 674.1 894.2 673.7 897.8 673.6 901.2 673.6 904.4 673.9 907.4 674.3 910.3 675 913.1 676 915.6 677.2 917.9 678.8 920.2 680.6 922.9 682.5 926.4 684.8 930.3 687.5 934 690 936.6 691.9 937.8 692.9 938 693.3 937.8 693.6 937.7 694 937.8 694.6 938 695.2 938.1 695.8 938.1 696.4 938.1 697 938 697.6 937.8 698.2 937.5 698.6 937.1 699 936.5 699.2 935.9 699.3 935.5 699.4 935.5 697.4 935.5 697.4 935.5 697.4 935.5 697.4 935.5 697.4 935.5 697.4 935.5 697.4 935.5 697.4 935.5 697.4 935.5 697.4 935.5 697.4 935.5 697.4 935.5 697.4 935.8 697.6 936.4 698 936.5 698.1 935.5 697.4 932.8 695.7 928.8 693.1 924.6 690.4 921 688 918.4 686 916.3 684.1 914.3 682.4 912 681 909.5 680 906.8 679.2 904 678.8 901 678.5 897.8 678.4 894.4 678.6 890.8 678.9 887 679.5 883.1 680.3 878.9 681.3 874.6 682.5 870 684 865.1 685.8 859.9 687.9 854.5 690.2 849 692.5 843.4 694.9 837.6 697.5 831.8 700 826 702.5 820.2 704.9 814.4 707.2 808.7 709.5 803 711.5 797.5 713.2 792.1 714.8 786.7 716.2 781 717.5 775.1 718.9 768.9 720.3 762.6 721.5 756 722.3 748.8 722.7 741.2 722.8 733.8 722.6 727 722.3 721.1 721.7 715.7 721 710.7 720 706 719 701.4 717.9 697.1 716.7 693.2 715.4 690 714 687.7 712.4 686 710.7 684.8 709.1 684 708z" fill="#b7b7b7"/><path d="M684 707.3 685 708 686.3 709.1 688.1 710.2 690.6 711.4 693.8 712.6 697.6 713.8 701.8 715 706.4 716.1 711.1 717.1 716.1 718 721.6 718.8 727.6 719.4 734.5 719.8 742 719.9 749.7 719.8 756.9 719.4 763.4 718.6 769.6 717.4 775.5 716 781.4 714.6 787 713.2 792.4 711.7 797.8 710 803.2 708.2 808.9 706.2 814.6 703.9 820.3 701.5 826 699.1 831.7 696.6 837.5 694.1 843.2 691.5 848.7 689.1 854.2 686.8 859.6 684.6 864.8 682.5 869.7 680.7 874.3 679.2 878.6 678 882.8 677 886.8 676.3 890.6 675.7 894.3 675.3 897.8 675.2 901.1 675.3 904.3 675.5 907.2 676 910 676.7 912.7 677.6 915.1 679 917.4 680.6 919.6 682.4 922.3 684.4 925.8 686.7 929.8 689.4 933.6 691.9 936.3 693.7 937.4 694.6 937.5 694.9 937.1 694.9 936.9 695.1 937.1 695.5 937.2 695.9 937.2 696.4 937.3 696.8 937.2 697.2 937.2 697.6 937 697.9 936.9 698.2 936.5 698.4 936.2 698.6 935.8 698.7 935.5 698.8 935.5 697.4 935.5 697.4 935.5 697.4 935.5 697.4 935.5 697.4 935.5 697.4 935.5 697.4 935.5 697.4 935.5 697.4 935.5 697.4 935.5 697.4 935.5 697.4 935.5 697.4 935.8 697.6 936.4 698 936.5 698.1 935.5 697.4 932.8 695.7 928.8 693.1 924.6 690.4 921 688 918.4 686 916.3 684.1 914.3 682.4 912 681 909.5 680 906.8 679.2 904 678.8 901 678.5 897.8 678.4 894.4 678.6 890.8 678.9 887 679.5 883.1 680.3 878.9 681.3 874.6 682.5 870 684 865.1 685.8 859.9 687.9 854.5 690.2 849 692.5 843.4 694.9 837.6 697.5 831.8 700 826 702.5 820.2 704.9 814.4 707.2 808.7 709.5 803 711.5 797.5 713.2 792.1 714.8 786.7 716.2 781 717.5 775.1 718.9 768.9 720.3 762.6 721.5 756 722.3 748.8 722.7 741.2 722.8 733.8 722.6 727 722.3 721.1 721.7 715.7 721 710.7 720 706 719 701.4 717.9 697.1 716.7 693.2 715.4 690 714 687.7 712.4 686 710.7 684.8 709.1 684 708z" fill="#e3e3e3"/><path d="M684 707.6 684.9 708.6 686.2 709.9 687.9 711.3 690.3 712.7 693.5 714 697.3 715.2 701.6 716.4 706.2 717.5 710.9 718.5 715.9 719.5 721.3 720.3 727.3 720.9 734.1 721.2 741.6 721.4 749.3 721.3 756.4 720.9 763 720 769.3 718.8 775.3 717.4 781.2 716 786.8 714.7 792.3 713.2 797.6 711.6 803.1 709.9 808.8 707.8 814.5 705.6 820.2 703.2 826 700.8 831.8 698.3 837.5 695.8 843.3 693.2 848.9 690.8 854.3 688.5 859.7 686.2 864.9 684.2 869.9 682.4 874.5 680.9 878.8 679.7 882.9 678.7 886.9 677.9 890.7 677.3 894.3 677 897.8 676.8 901.1 676.9 904.1 677.1 907 677.6 909.7 678.3 912.4 679.3 914.7 680.7 916.8 682.3 919 684.2 921.6 686.2 925.2 688.5 929.3 691.2 933.2 693.8 935.9 695.6 936.9 696.3 936.9 696.4 936.5 696.3 936.2 696.3 936.3 696.5 936.3 696.7 936.4 696.9 936.4 697.1 936.4 697.3 936.3 697.5 936.3 697.7 936.2 697.8 936 697.9 935.8 698 935.6 698 935.5 698.1 935.5 697.4 935.5 697.4 935.5 697.4 935.5 697.4 935.5 697.4 935.5 697.4 935.5 697.4 935.5 697.4 935.5 697.4 935.5 697.4 935.5 697.4 935.5 697.4 935.5 697.4 935.8 697.6 936.4 698 936.5 698.1 935.5 697.4 932.8 695.7 928.8 693.1 924.6 690.4 921 688 918.4 686 916.3 684.1 914.3 682.4 912 681 909.5 680 906.8 679.2 904 678.8 901 678.5 897.8 678.4 894.4 678.6 890.8 678.9 887 679.5 883.1 680.3 878.9 681.3 874.6 682.5 870 684 865.1 685.8 859.9 687.9 854.5 690.2 849 692.5 843.4 694.9 837.6 697.5 831.8 700 826 702.5 820.2 704.9 814.4 707.2 808.7 709.5 803 711.5 797.5 713.2 792.1 714.8 786.7 716.2 781 717.5 775.1 718.9 768.9 720.3 762.6 721.5 756 722.3 748.8 722.7 741.2 722.8 733.8 722.6 727 722.3 721.1 721.7 715.7 721 710.7 720 706 719 701.4 717.9 697.1 716.7 693.2 715.4 690 714 687.7 712.4 686 710.7 684.8 709.1 684 708z" fill="#bebebe"/><path d="M684 702 685.9 699.9 688.6 696.9 691.8 693.9 695 692 698.1 691.6 701.2 692.1 704.8 693.1 709 694 713.9 694.9 719.4 696 725.5 697.1 732 697.8 739.5 698.2 747.8 698.4 756 698.3 763.3 697.8 769.2 697 774.3 695.8 779.1 694.3 784 692.6 789.2 690.7 794.5 688.5 799.8 686.1 805 683.7 810.2 681.2 815.4 678.5 820.6 675.9 825.8 673.3 831 670.9 836.2 668.5 841.5 666.2 846.7 664 852 661.8 857.3 659.7 862.5 657.7 867.5 656 872.1 654.6 876.5 653.6 880.7 652.7 885 652 889.3 651.5 893.6 651.2 897.8 651 902 651 906.1 651.1 910.2 651.4 914.2 651.9 918 652.5 921.7 653.3 925.4 654.3 928.8 655.5 932 657 934.9 658.9 937.5 661 939.9 663.4 942 666 943.8 668.7 945.4 671.7 946.7 674.8 947.8 678 948.8 681.4 949.7 685 950.2 688.6 950.4 692 950.2 695.4 949.6 698.8 948.6 701.9 947 704.4 944.4 706.2 941 707.5 937.8 708.4 935.5 709 935.5 703.5 936.7 703.2 938.4 702.7 940.2 702.1 941.6 701.1 942.4 699.8 943 698.1 943.3 696.3 943.4 694.5 943.3 692.7 943 690.8 942.6 688.9 942 687.1 941.6 685.5 941.2 684 940.4 682.5 938.9 680.8 936.5 678.6 933.4 676.1 930 673.7 926.8 671.6 923.9 669.8 921.1 668.3 918.2 667 915.2 665.9 912 665.1 908.6 664.5 905.1 664.1 901.5 663.9 897.8 663.9 894 664 890 664.4 885.9 664.9 881.8 665.7 877.6 666.6 873.3 667.7 868.7 669.2 863.7 670.9 858.5 672.9 853.2 675.1 847.8 677.4 842.4 679.7 836.9 682.1 831.4 684.6 825.9 687 820.4 689.5 815 692 809.5 694.5 804.1 696.8 798.7 698.9 793.4 700.8 788 702.6 782.6 704.3 777.2 705.9 771.8 707.3 766.1 708.5 759.9 709.3 752.7 709.8 744.7 709.9 736.8 709.7 729.6 709.3 723.4 708.7 717.7 707.7 712.4 706.7 707.6 705.8 703.2 704.7 699.3 703.7 695.8 702.8 692.6 702.3 689.8 702.6 687.4 703.4 685.4 704.2 684 704.8z" fill="url(#fdT)"/><ellipse cx="694.6" cy="691" rx="11.8" ry="11.8" fill="url(#rb)"/><ellipse cx="935.5" cy="697.4" rx="11" ry="11" fill="url(#rb)"/></g><use href="#lh1" transform="translate(1923.0 0) scale(-1 1)"/><g transform="translate(961.5 382) scale(1.0)"><path d="M-10 10c-2 8-8 15-18 22c6 1.500 11 0.500 14-3c3 6 8 9 14 11c6-2 11-5 14-11c3 3.500 8 4.500 14 3c-10-7-16-14-18-22z" fill="#565656" stroke="#2e2e0c" stroke-width="2"/><path d="M-6 11c-1 8-5 14-12 19M6 11c1 8 5 14 12 19" fill="none" stroke="#808080" stroke-width="2.6"/><path d="M0 11v16" stroke="#777" stroke-width="3"/><path d="M-3.500 26c0 5 1 9 3.500 12c2.500-3 3.500-7 3.500-12z" fill="#a4a4a4"/><path d="M-12 2c-4-12-13-24-27-27c-5-2-7-8-3-12c3-3 9-3 12 1c1-5 6-8 11-6c3-6 8-8 10-4l9 2 9-2c2-4 7-2 10 4c5-2 10 1 11 6c3-4 9-4 12-1c4 4 2 10-3 12c-14 3-23 15-27 27z" fill="#484848" stroke="#2e2e0c" stroke-width="2.2"/><circle cx="-38.500" cy="-30" r="6.200" fill="#8e8e8e"/><circle cx="-39" cy="-31" r="3.500" fill="#a0a0a0"/><g transform="scale(-1 1)"><circle cx="-38.500" cy="-30" r="6.200" fill="#8e8e8e"/><circle cx="-39" cy="-31" r="3.500" fill="#a0a0a0"/></g><path d="M-9 1c-5-13-14-25-28-31c-1-3 1-6 5-6c13 5 23 19 28 37z" fill="#5c5c5c"/><path d="M-8 1c-5-14-15-27-29-33" fill="none" stroke="#9c9c9c" stroke-width="3"/><path d="M-33-35c11 5 21 18 26 34" fill="none" stroke="#2e2e2e" stroke-width="2.2"/><g transform="scale(-1 1)"><path d="M-9 1c-5-13-14-25-28-31c-1-3 1-6 5-6c13 5 23 19 28 37z" fill="#5c5c5c"/><path d="M-8 1c-5-14-15-27-29-33" fill="none" stroke="#9c9c9c" stroke-width="3"/><path d="M-33-35c11 5 21 18 26 34" fill="none" stroke="#2e2e2e" stroke-width="2.2"/></g><path d="M-3.500 1c-3-15-10-30-21-38c-1-3 1-7 5-6c10 7 17 24 20 44z" fill="#606060"/><path d="M-3 1c-3-16-10-31-21-40" fill="none" stroke="#a6a6a6" stroke-width="3"/><path d="M-20-42c9 7 15 22 18 40" fill="none" stroke="#303030" stroke-width="2.2"/><g transform="scale(-1 1)"><path d="M-3.500 1c-3-15-10-30-21-38c-1-3 1-7 5-6c10 7 17 24 20 44z" fill="#606060"/><path d="M-3 1c-3-16-10-31-21-40" fill="none" stroke="#a6a6a6" stroke-width="3"/><path d="M-20-42c9 7 15 22 18 40" fill="none" stroke="#303030" stroke-width="2.2"/></g><path d="M0-57c7 0 11.500 5.500 11.500 12.500c0 8-5.500 12.500-7.500 21.500c-1 8-1 16-1 24h-6c0-8 0-16-1-24c-2-9-7.500-13.500-7.500-21.500c0-7 4.500-12.500 11.500-12.500z" fill="url(#bud)" stroke="#2e2e0c" stroke-width="2"/><ellipse cx="0" cy="-47" rx="5.500" ry="4.500" fill="#ededed" opacity="0.8"/><path d="M0-33v34" stroke="#4e4e4e" stroke-width="2.600"/><path d="M-3-22c-1-5-4-9-6-13M3-22c1-5 4-9 6-13" stroke="#9a9a9a" stroke-width="1.500" fill="none"/><rect x="-12.500" y="-0.500" width="25" height="11" rx="2.500" fill="#8a8a8a" stroke="#555" stroke-width="1"/><path d="M-11 2.500h22" stroke="#a8a8a8" stroke-width="2.200"/><path d="M-11 8.500h22" stroke="#6e6e6e" stroke-width="1.600"/></g><g transform="translate(961.5 684) scale(0.9)"><path d="M-10 10c-2 8-8 15-18 22c6 1.500 11 0.500 14-3c3 6 8 9 14 11c6-2 11-5 14-11c3 3.500 8 4.500 14 3c-10-7-16-14-18-22z" fill="#565656" stroke="#2e2e0c" stroke-width="2"/><path d="M-6 11c-1 8-5 14-12 19M6 11c1 8 5 14 12 19" fill="none" stroke="#808080" stroke-width="2.6"/><path d="M0 11v16" stroke="#777" stroke-width="3"/><path d="M-3.500 26c0 5 1 9 3.500 12c2.500-3 3.500-7 3.500-12z" fill="#a4a4a4"/><path d="M-12 2c-4-12-13-24-27-27c-5-2-7-8-3-12c3-3 9-3 12 1c1-5 6-8 11-6c3-6 8-8 10-4l9 2 9-2c2-4 7-2 10 4c5-2 10 1 11 6c3-4 9-4 12-1c4 4 2 10-3 12c-14 3-23 15-27 27z" fill="#484848" stroke="#2e2e0c" stroke-width="2.2"/><circle cx="-38.500" cy="-30" r="6.200" fill="#8e8e8e"/><circle cx="-39" cy="-31" r="3.500" fill="#a0a0a0"/><g transform="scale(-1 1)"><circle cx="-38.500" cy="-30" r="6.200" fill="#8e8e8e"/><circle cx="-39" cy="-31" r="3.500" fill="#a0a0a0"/></g><path d="M-9 1c-5-13-14-25-28-31c-1-3 1-6 5-6c13 5 23 19 28 37z" fill="#5c5c5c"/><path d="M-8 1c-5-14-15-27-29-33" fill="none" stroke="#9c9c9c" stroke-width="3"/><path d="M-33-35c11 5 21 18 26 34" fill="none" stroke="#2e2e2e" stroke-width="2.2"/><g transform="scale(-1 1)"><path d="M-9 1c-5-13-14-25-28-31c-1-3 1-6 5-6c13 5 23 19 28 37z" fill="#5c5c5c"/><path d="M-8 1c-5-14-15-27-29-33" fill="none" stroke="#9c9c9c" stroke-width="3"/><path d="M-33-35c11 5 21 18 26 34" fill="none" stroke="#2e2e2e" stroke-width="2.2"/></g><path d="M-3.500 1c-3-15-10-30-21-38c-1-3 1-7 5-6c10 7 17 24 20 44z" fill="#606060"/><path d="M-3 1c-3-16-10-31-21-40" fill="none" stroke="#a6a6a6" stroke-width="3"/><path d="M-20-42c9 7 15 22 18 40" fill="none" stroke="#303030" stroke-width="2.2"/><g transform="scale(-1 1)"><path d="M-3.500 1c-3-15-10-30-21-38c-1-3 1-7 5-6c10 7 17 24 20 44z" fill="#606060"/><path d="M-3 1c-3-16-10-31-21-40" fill="none" stroke="#a6a6a6" stroke-width="3"/><path d="M-20-42c9 7 15 22 18 40" fill="none" stroke="#303030" stroke-width="2.2"/></g><path d="M0-57c7 0 11.500 5.500 11.500 12.500c0 8-5.500 12.500-7.500 21.500c-1 8-1 16-1 24h-6c0-8 0-16-1-24c-2-9-7.500-13.500-7.500-21.500c0-7 4.500-12.500 11.500-12.500z" fill="url(#bud)" stroke="#2e2e0c" stroke-width="2"/><ellipse cx="0" cy="-47" rx="5.500" ry="4.500" fill="#ededed" opacity="0.8"/><path d="M0-33v34" stroke="#4e4e4e" stroke-width="2.600"/><path d="M-3-22c-1-5-4-9-6-13M3-22c1-5 4-9 6-13" stroke="#9a9a9a" stroke-width="1.500" fill="none"/><rect x="-12.500" y="-0.500" width="25" height="11" rx="2.500" fill="#8a8a8a" stroke="#555" stroke-width="1"/><path d="M-11 2.500h22" stroke="#a8a8a8" stroke-width="2.200"/><path d="M-11 8.500h22" stroke="#6e6e6e" stroke-width="1.600"/></g><circle cx="927.5" cy="657" r="5.2" fill="url(#rb)"/><circle cx="995.5" cy="657" r="5.2" fill="url(#rb)"/></g></svg>
<div class="a" style="left:347px;top:976px;width:25px;height:21px;background:#f0f0f0;border:1px solid;border-color:#fff #808080 #808080 #fff"></div>
<svg style="left:347px;top:976px" width="25" height="21" viewBox="0 0 25 21"><path d="M8.500 5v3M8.500 10v3M8.500 15v1" stroke="#111" stroke-width="1.400"/><path d="M12 5.500l5.500 5-5.500 5z" fill="#111"/></svg>
<div class="a" style="left:394px;top:986px;width:1136px;height:3px;background:linear-gradient(#8c8c8c 66%,#d4d4d4 66%)"></div>
<div class="a" style="left:346px;top:1002px;width:1227px;height:53px;border:1px solid;border-color:#a0a0a0 #fff #fff #a0a0a0"></div>
<div class="a" style="left:372px;top:1024px;width:32px;height:25px;background:#000"></div>
<div class="a" style="left:354px;top:1009px;width:32px;height:25px;background:#fff;border:1px solid #333;box-shadow:1px 1px 0 #777"></div>
<svg style="left:388px;top:1009px" width="18" height="14" viewBox="0 0 18 14"><rect x="1.500" y="1.500" width="9" height="6.500" rx="2.500" fill="none" stroke="#222" stroke-width="1.300"/><rect x="5.500" y="5.500" width="10" height="6.500" rx="2.500" fill="none" stroke="#222" stroke-width="1.300"/></svg>
<div class="sw" style="left:417px;background:#ffffff"></div>
<div class="sw" style="left:462px;background:#000000"></div>
<div class="sw" style="left:507px;background:#00ffff"></div>
<div class="sw" style="left:552px;background:#3040e0"></div>
<div class="sw" style="left:597px;background:#5cbd50"></div>
<div class="sw" style="left:642px;background:#d81020"></div>
<div class="sw" style="left:687px;background:#a030e4"></div>
<div class="sw" style="left:732px;background:#ffff80"></div>
<div class="sw" style="left:777px;background:#b0a034"></div>
<div class="sw" style="left:822px;background:#f9c31a"></div>
<div class="sw" style="left:867px;background:#0a0a0a"></div>
<div class="sw" style="left:912px;background:#0a0a0a"></div>
<div class="sw" style="left:957px;background:#0a0a0a"></div>
<div class="sw" style="left:1002px;background:#0a0a0a"></div>
<div class="sw" style="left:1047px;background:#0a0a0a"></div>
<div class="sw" style="left:1092px;background:#0a0a0a"></div>
<div class="sw" style="left:1137px;background:#0a0a0a"></div>
<div class="sw" style="left:1182px;background:#0a0a0a"></div>
<div class="sw" style="left:1227px;background:#0a0a0a"></div>
<div class="sw" style="left:1272px;background:#0a0a0a"></div>
<div class="sw" style="left:1317px;background:#0a0a0a"></div>
<div class="sw" style="left:1362px;background:#0a0a0a"></div>
<div class="sw" style="left:1407px;background:#0a0a0a"></div>
<div class="sw" style="left:1452px;background:#0a0a0a"></div>
<div class="sw" style="left:1497px;background:#0a0a0a"></div>
<div class="a" style="left:1578px;top:54px;width:2px;height:1002px;background:linear-gradient(90deg,#a0a0a0 50%,#fff 50%)"></div>
<div class="rh" style="top:56px"><b>Vectors</b><div class="cb" style="left:280px;top:1px"><i></i></div></div>
<div class="rh" style="top:215px"><b>Bitmaps</b><div class="cb" style="left:280px;top:1px"><i></i></div></div>
<div class="rh" style="top:316px"><b>Reliefs</b><div class="cb" style="left:280px;top:1px"><i></i></div></div>
<div class="dd" style="top:78px"><span>Default Sheet</span><em><i></i></em></div>
<div class="dd" style="top:338px"><span>Front Relief</span><em><i></i></em></div>
<div class="row" style="top:140px;height:32px"></div>
<div class="row" style="top:266px;height:30px"></div>
<div class="row" style="top:400px;height:32px"></div>
<div class="t" style="left:1622px;top:149px;font-size:15.1px;color:#222">Default Layer</div>
<div class="t" style="left:1622px;top:274px;font-size:15.1px;color:#222">Bitmap Layer 1</div>
<div class="t" style="left:1648px;top:409px;font-size:15.1px;color:#222">Relief Layer 1</div>
<svg style="left:0;top:0" width="1920" height="1080" viewBox="0 0 1920 1080"><defs><linearGradient id="gGraySq" x1="0" y1="0" x2="1" y2="1"><stop offset="0" stop-color="#9a9a9a"/><stop offset="1" stop-color="#f2f2f2"/></linearGradient></defs><g transform="translate(1600 124)"><path d="M-3 9l11-1 3-4-6 0z" fill="#999" opacity="0.500" filter="url(#b05)"/><path d="M-8-9h8l5 5v13h-13z" fill="url(#gDoc)"/><path d="M0-9l5 5h-5z" fill="#eef3fb"/></g><g transform="translate(1646 124)"><path d="M-6 8l16-1 3-4-12 1z" fill="#999" opacity="0.450" filter="url(#b05)"/><path d="M-10-4c0-2 2-4 4-4l4-1 2 2 6-1c1.500 0 2 1 2 2v5l-15 4z" fill="#f3df12"/><path d="M-10-4l2 11c0 1 1 1.500 2 1.300l16-3 3-6c0.500-1-0.500-1.500-1.500-1.300l-15 2.500c-1.500 0.300-2 1-2.500 2.500z" fill="url(#gFold)"/></g><g transform="translate(1691 124)"><path d="M-3 9l14-1 2-4-4 0z" fill="#999" opacity="0.450" filter="url(#b05)"/><rect x="-8.500" y="-9" width="17" height="18" rx="1" fill="url(#gSave)"/><rect x="-5.500" y="-8.500" width="11" height="8" fill="#e9edf2"/><rect x="-5" y="2.500" width="10" height="6.500" fill="#d4d9e2"/><rect x="-3" y="3.500" width="3.500" height="5.500" fill="#1c4cae"/></g><g transform="translate(1737 124)"><path d="M-2 10l12-1 2-3-5 0z" fill="#999" opacity="0.450" filter="url(#b05)"/><path d="M-8-9l3-1 1 1.500 3-1 8 8 2 10-12 2-1-3-2 0 0-3-2 0 1-3-2 0 1-3-2-1 1-3z" fill="#c4a070"/><path d="M-4-8l8 9 2 9" fill="none" stroke="#a88450" stroke-width="1.200"/><path d="M-8-9l3-1 1 1.500 3-1 8 8" fill="none" stroke="#dcc098" stroke-width="1"/></g><g transform="translate(1784 124)"><rect x="-7.500" y="-10" width="14" height="20" fill="#7f9ad0"/><path d="M-7.500-10h14v7l-14 6z" fill="#a8bde4"/><path d="M2.500-10l4 4h-4z" fill="#e4ebf8"/><g transform="translate(0 1) scale(0.78)"><path d="M-3 6h6v3.500c0 1.500-1 2.500-3 2.500s-3-1-3-2.500z" fill="#3a2208"/><path d="M-2.500 7.500h5" stroke="#c87818" stroke-width="1"/><circle cx="0" cy="-1.500" r="7.600" fill="url(#gBulb)"/><path d="M-3 6c0-3-2-4-2-4h10s-2 1-2 4z" fill="#f0a820"/><ellipse cx="-2" cy="-4.500" rx="3" ry="2.500" fill="#fffef0" opacity="0.850"/></g></g><g transform="translate(1831 124)"><path d="M-6.500-5l1.500 12c0 1.500 2.500 2.500 5 2.500s5-1 5-2.500l1.500-12z" fill="#4a8ee0"/><path d="M-2-5l0.500 14c1 0.500 2 0.500 3 0l0.500-14z" fill="#8cc0f4" opacity="0.700"/><ellipse cx="0" cy="-5.500" rx="7" ry="3" fill="#7ab4f0" stroke="#2f6cc0" stroke-width="1"/><ellipse cx="0" cy="-5.500" rx="4.500" ry="1.600" fill="#cfe6fb"/></g><g transform="translate(1876 124)"><rect x="-11" y="-11" width="22" height="22" fill="#f6f6f6"/><path d="M-11 11v-22h22" fill="none" stroke="#b4b4b4"/><g transform="translate(-3.5 1.5) scale(0.9)"><path d="M-3 6h6v3.500c0 1.500-1 2.500-3 2.500s-3-1-3-2.500z" fill="#3a2208"/><path d="M-2.500 7.500h5" stroke="#c87818" stroke-width="1"/><circle cx="0" cy="-1.500" r="7.600" fill="url(#gBulb)"/><path d="M-3 6c0-3-2-4-2-4h10s-2 1-2 4z" fill="#f0a820"/><ellipse cx="-2" cy="-4.500" rx="3" ry="2.500" fill="#fffef0" opacity="0.850"/></g><g transform="translate(3.5 -1.5) scale(0.9)"><path d="M-3 6h6v3.500c0 1.500-1 2.500-3 2.500s-3-1-3-2.500z" fill="#3a2208"/><path d="M-2.500 7.500h5" stroke="#c87818" stroke-width="1"/><circle cx="0" cy="-1.500" r="7.600" fill="url(#gBulb)"/><path d="M-3 6c0-3-2-4-2-4h10s-2 1-2 4z" fill="#f0a820"/><ellipse cx="-2" cy="-4.500" rx="3" ry="2.500" fill="#fffef0" opacity="0.850"/></g></g><rect x="1595.500" y="146.500" width="20" height="20" fill="#e0e0e0"/><path d="M1595.500 166.500v-20h20" fill="none" stroke="#f8f8f8"/><path d="M1615.500 146.500v20h-20" fill="none" stroke="#a0a0a0"/><circle cx="1605.500" cy="156.500" r="8.300" fill="#000"/><rect x="1822.500" y="146" width="20" height="21" fill="#d0d0d0"/><path d="M1822.500 167v-21h20" fill="none" stroke="#f4f4f4"/><path d="M1842.500 146v21h-20" fill="none" stroke="#909090"/><g transform="translate(1833 157)"><path d="M-4 0v-3a4 4 0 0 1 8 0v1" fill="none" stroke="#f2f2f2" stroke-width="2.200"/><rect x="-5.500" y="0" width="11" height="8" rx="1" fill="#9a9a9a"/><path d="M0 2v5M-2 4.500l2-2.500 2 2.500" stroke="#111" stroke-width="1.300" fill="none"/></g><g transform="translate(1855 157)"><path d="M-7-9v19M-9 8h19" stroke="#111" stroke-width="1" stroke-dasharray="2 1.500"/><path d="M8-9l-10 6 2.500 1.500-6 6 1.500 1.500 6-6 1.500 2.500z" fill="#111"/></g><rect x="1866.500" y="146" width="21" height="21" fill="#e4e4e4"/><path d="M1866.500 167v-21h21" fill="none" stroke="#bcbcbc"/><g transform="translate(1877 156)"><g transform="translate(0 0) scale(0.95)"><path d="M-3 6h6v3.500c0 1.500-1 2.500-3 2.500s-3-1-3-2.500z" fill="#3a2208"/><path d="M-2.500 7.500h5" stroke="#c87818" stroke-width="1"/><circle cx="0" cy="-1.500" r="7.600" fill="url(#gBulb)"/><path d="M-3 6c0-3-2-4-2-4h10s-2 1-2 4z" fill="#f0a820"/><ellipse cx="-2" cy="-4.500" rx="3" ry="2.500" fill="#fffef0" opacity="0.850"/></g></g><g transform="translate(1859.5 183.5)"><rect x="-7.500" y="-7.500" width="15" height="15" rx="1.500" fill="#1a48b4"/><rect x="-7.500" y="-7.500" width="15" height="7" rx="1.500" fill="#3a6cd4" opacity="0.700"/><path d="M0 4.500v-8M-3.500-0.500l3.500-3.500 3.500 3.500" fill="none" stroke="#fff" stroke-width="2.200"/></g><g transform="translate(1882.5 183.5)"><rect x="-7.500" y="-7.500" width="15" height="15" rx="1.500" fill="#1a48b4"/><rect x="-7.500" y="-7.500" width="15" height="7" rx="1.500" fill="#3a6cd4" opacity="0.700"/><path d="M0-4.500v8M-3.500 0.500l3.500 3.500 3.500-3.500" fill="none" stroke="#fff" stroke-width="2.200"/></g><g transform="translate(1600 250)"><path d="M-3 9l11-1 3-4-6 0z" fill="#999" opacity="0.500" filter="url(#b05)"/><path d="M-8-9h8l5 5v13h-13z" fill="url(#gDoc)"/><path d="M0-9l5 5h-5z" fill="#eef3fb"/></g><g transform="translate(1640 250)"><path d="M-6 8l16-1 3-4-12 1z" fill="#999" opacity="0.450" filter="url(#b05)"/><path d="M-10-4c0-2 2-4 4-4l4-1 2 2 6-1c1.500 0 2 1 2 2v5l-15 4z" fill="#f3df12"/><path d="M-10-4l2 11c0 1 1 1.500 2 1.300l16-3 3-6c0.500-1-0.500-1.500-1.500-1.300l-15 2.500c-1.500 0.300-2 1-2.500 2.500z" fill="url(#gFold)"/></g><g transform="translate(1678 250)"><path d="M-3 9l14-1 2-4-4 0z" fill="#999" opacity="0.450" filter="url(#b05)"/><rect x="-8.500" y="-9" width="17" height="18" rx="1" fill="url(#gSave)"/><rect x="-5.500" y="-8.500" width="11" height="8" fill="#e9edf2"/><rect x="-5" y="2.500" width="10" height="6.500" fill="#d4d9e2"/><rect x="-3" y="3.500" width="3.500" height="5.500" fill="#1c4cae"/></g><g transform="translate(1719 250)"><path d="M-2 10l12-1 2-3-5 0z" fill="#999" opacity="0.450" filter="url(#b05)"/><path d="M-8-9l3-1 1 1.500 3-1 8 8 2 10-12 2-1-3-2 0 0-3-2 0 1-3-2 0 1-3-2-1 1-3z" fill="#c4a070"/><path d="M-4-8l8 9 2 9" fill="none" stroke="#a88450" stroke-width="1.200"/><path d="M-8-9l3-1 1 1.500 3-1 8 8" fill="none" stroke="#dcc098" stroke-width="1"/></g><g transform="translate(1758 250)"><path d="M-3 9l11-1 2-3-5 0z" fill="#999" opacity="0.450" filter="url(#b05)"/><rect x="-8" y="-9" width="16" height="16" fill="url(#gGraySq)"/></g><g transform="translate(1798 250)"><rect x="-2" y="-1" width="12" height="10" fill="#6a78d0"/><path d="M-2 4l12-3v8h-12z" fill="#8e9ae4"/><g transform="translate(-3 -2)"><clipPath id="mc13"><rect x="-6.5" y="-7.0" width="13" height="14"/></clipPath><g clip-path="url(#mc13)"><rect x="-6.5" y="-7.0" width="13" height="14" fill="url(#gMona)"/><path d="M-6.5 -7.0h13v4.8999999999999995l-3.9 1.4000000000000001l-9.1-2.1z" fill="#8a9a50" opacity="0.500"/><path d="M-6 7.0c-1-5 0-9 1.500-12c-1-4 1.500-7 4.500-7s5.500 3 4.500 7c2 3 3 7 2.500 12z" fill="#2a1c0c"/><ellipse cx="0" cy="-3.500" rx="2.800" ry="3.500" fill="#e8c07a"/><path d="M-3 3c1.500-1.500 4.500-1.500 6 0l1 4.0h-8z" fill="#d8a860"/></g></g></g><g transform="translate(1837 250)"><path d="M-6.500-5l1.500 12c0 1.500 2.500 2.500 5 2.500s5-1 5-2.500l1.500-12z" fill="#4a8ee0"/><path d="M-2-5l0.500 14c1 0.500 2 0.500 3 0l0.500-14z" fill="#8cc0f4" opacity="0.700"/><ellipse cx="0" cy="-5.500" rx="7" ry="3" fill="#7ab4f0" stroke="#2f6cc0" stroke-width="1"/><ellipse cx="0" cy="-5.500" rx="4.500" ry="1.600" fill="#cfe6fb"/></g><g transform="translate(1876 250)"><rect x="-11" y="-11" width="22" height="22" fill="#f6f6f6"/><path d="M-11 11v-22h22" fill="none" stroke="#b4b4b4"/><g transform="translate(-3.5 1.5) scale(0.9)"><path d="M-3 6h6v3.500c0 1.500-1 2.500-3 2.500s-3-1-3-2.500z" fill="#3a2208"/><path d="M-2.500 7.500h5" stroke="#c87818" stroke-width="1"/><circle cx="0" cy="-1.500" r="7.600" fill="url(#gBulb)"/><path d="M-3 6c0-3-2-4-2-4h10s-2 1-2 4z" fill="#f0a820"/><ellipse cx="-2" cy="-4.500" rx="3" ry="2.500" fill="#fffef0" opacity="0.850"/></g><g transform="translate(3.5 -1.5) scale(0.9)"><path d="M-3 6h6v3.500c0 1.500-1 2.500-3 2.500s-3-1-3-2.500z" fill="#3a2208"/><path d="M-2.500 7.500h5" stroke="#c87818" stroke-width="1"/><circle cx="0" cy="-1.500" r="7.600" fill="url(#gBulb)"/><path d="M-3 6c0-3-2-4-2-4h10s-2 1-2 4z" fill="#f0a820"/><ellipse cx="-2" cy="-4.500" rx="3" ry="2.500" fill="#fffef0" opacity="0.850"/></g></g><g transform="translate(1604 281)"><clipPath id="mc20"><rect x="-10.0" y="-10.5" width="20" height="21"/></clipPath><g clip-path="url(#mc20)"><rect x="-10.0" y="-10.5" width="20" height="21" fill="url(#gMona)"/><path d="M-10.0 -10.5h20v7.35l-6.0 2.1l-14.0-3.15z" fill="#8a9a50" opacity="0.500"/><path d="M-6 10.5c-1-5 0-9 1.500-12c-1-4 1.500-7 4.500-7s5.500 3 4.500 7c2 3 3 7 2.500 12z" fill="#2a1c0c"/><ellipse cx="0" cy="-3.500" rx="2.800" ry="3.500" fill="#e8c07a"/><path d="M-3 3c1.500-1.500 4.500-1.500 6 0l1 7.5h-8z" fill="#d8a860"/></g></g><g transform="translate(1600 384)"><path d="M-3 9l11-1 3-4-6 0z" fill="#999" opacity="0.500" filter="url(#b05)"/><path d="M-8-9h8l5 5v13h-13z" fill="url(#gDoc)"/><path d="M0-9l5 5h-5z" fill="#eef3fb"/></g><g transform="translate(1635 384)"><path d="M-6 8l16-1 3-4-12 1z" fill="#999" opacity="0.450" filter="url(#b05)"/><path d="M-10-4c0-2 2-4 4-4l4-1 2 2 6-1c1.500 0 2 1 2 2v5l-15 4z" fill="#f3df12"/><path d="M-10-4l2 11c0 1 1 1.500 2 1.300l16-3 3-6c0.500-1-0.500-1.500-1.500-1.300l-15 2.500c-1.500 0.300-2 1-2.500 2.500z" fill="url(#gFold)"/></g><g transform="translate(1668 384)"><path d="M-3 9l14-1 2-4-4 0z" fill="#999" opacity="0.450" filter="url(#b05)"/><rect x="-8.500" y="-9" width="17" height="18" rx="1" fill="url(#gSave)"/><rect x="-5.500" y="-8.500" width="11" height="8" fill="#e9edf2"/><rect x="-5" y="2.500" width="10" height="6.500" fill="#d4d9e2"/><rect x="-3" y="3.500" width="3.500" height="5.500" fill="#1c4cae"/></g><g transform="translate(1703 384)"><path d="M-2 10l12-1 2-3-5 0z" fill="#999" opacity="0.450" filter="url(#b05)"/><path d="M-8-9l3-1 1 1.500 3-1 8 8 2 10-12 2-1-3-2 0 0-3-2 0 1-3-2 0 1-3-2-1 1-3z" fill="#c4a070"/><path d="M-4-8l8 9 2 9" fill="none" stroke="#a88450" stroke-width="1.200"/><path d="M-8-9l3-1 1 1.500 3-1 8 8" fill="none" stroke="#dcc098" stroke-width="1"/></g><g transform="translate(1738 384)"><path d="M-9 4l9-5 9 5-9 5z" fill="#c81818"/><path d="M-9 4v1.500l9 5 9-5v-1.500l-9 5z" fill="#8a0c0c"/><path d="M-3 4l3-2 3 2-3 2z" fill="#f8e020"/><path d="M-9-4l9-5 9 5-9 5z" fill="#8c8ce0" opacity="0.920"/><path d="M-9-4l9-5 9 5" fill="none" stroke="#b8b8f4" stroke-width="0.800"/></g><g transform="translate(1773 384)"><rect x="-7.500" y="-10" width="14" height="20" fill="#7f9ad0"/><path d="M-7.500-10h14v7l-14 6z" fill="#a8bde4"/><path d="M2.500-10l4 4h-4z" fill="#e4ebf8"/><g transform="translate(0 1) scale(0.78)"><path d="M-3 6h6v3.500c0 1.500-1 2.500-3 2.500s-3-1-3-2.500z" fill="#3a2208"/><path d="M-2.500 7.500h5" stroke="#c87818" stroke-width="1"/><circle cx="0" cy="-1.500" r="7.600" fill="url(#gBulb)"/><path d="M-3 6c0-3-2-4-2-4h10s-2 1-2 4z" fill="#f0a820"/><ellipse cx="-2" cy="-4.500" rx="3" ry="2.500" fill="#fffef0" opacity="0.850"/></g></g><g transform="translate(1807.5 384)"><rect x="-9" y="-9" width="18" height="18" fill="#050505"/><ellipse cx="0" cy="-3.500" rx="3.800" ry="3.200" fill="#bbb"/><circle cx="-3.500" cy="-6.500" r="1.500" fill="#bbb"/><circle cx="3.500" cy="-6.500" r="1.500" fill="#bbb"/><ellipse cx="0" cy="3.500" rx="5.500" ry="5" fill="#aaa"/><ellipse cx="0" cy="4" rx="3" ry="3" fill="#666"/><text x="4.500" y="-3" font-family="Liberation Sans,sans-serif" font-weight="bold" font-size="5.500" fill="#eee">T</text><path d="M-8-8h2M-8-5h1.500" stroke="#999" stroke-width="0.800"/></g><g transform="translate(1842 384)"><path d="M-6.500-5l1.500 12c0 1.500 2.500 2.500 5 2.500s5-1 5-2.500l1.500-12z" fill="#4a8ee0"/><path d="M-2-5l0.500 14c1 0.500 2 0.500 3 0l0.500-14z" fill="#8cc0f4" opacity="0.700"/><ellipse cx="0" cy="-5.500" rx="7" ry="3" fill="#7ab4f0" stroke="#2f6cc0" stroke-width="1"/><ellipse cx="0" cy="-5.500" rx="4.500" ry="1.600" fill="#cfe6fb"/></g><g transform="translate(1877 384)"><rect x="-11" y="-11" width="22" height="22" fill="#f6f6f6"/><path d="M-11 11v-22h22" fill="none" stroke="#b4b4b4"/><g transform="translate(-3.5 1.5) scale(0.9)"><path d="M-3 6h6v3.500c0 1.500-1 2.500-3 2.500s-3-1-3-2.500z" fill="#3a2208"/><path d="M-2.500 7.500h5" stroke="#c87818" stroke-width="1"/><circle cx="0" cy="-1.500" r="7.600" fill="url(#gBulb)"/><path d="M-3 6c0-3-2-4-2-4h10s-2 1-2 4z" fill="#f0a820"/><ellipse cx="-2" cy="-4.500" rx="3" ry="2.500" fill="#fffef0" opacity="0.850"/></g><g transform="translate(3.5 -1.5) scale(0.9)"><path d="M-3 6h6v3.500c0 1.500-1 2.500-3 2.500s-3-1-3-2.500z" fill="#3a2208"/><path d="M-2.500 7.500h5" stroke="#c87818" stroke-width="1"/><circle cx="0" cy="-1.500" r="7.600" fill="url(#gBulb)"/><path d="M-3 6c0-3-2-4-2-4h10s-2 1-2 4z" fill="#f0a820"/><ellipse cx="-2" cy="-4.500" rx="3" ry="2.500" fill="#fffef0" opacity="0.850"/></g></g><g transform="translate(1613 416)"><path d="M-11 4c1-9 7-13 13-12s9 6 10 11l-4 2c-1-5-4-8-8-8s-7 3-7 8z" fill="url(#gGold)"/><path d="M-11 4c1-9 7-13 13-12" fill="none" stroke="#fff2b4" stroke-width="1"/><path d="M-10 5c0-5 3-8 7-8s6 2 8 7z" fill="#8888d8"/><path d="M-7 8.500v7M-10.500 12h7" stroke="#111" stroke-width="1.300"/></g><path d="M1636 412l5 4.500-5 4.500z" fill="#0a0a0a"/><rect x="1866.500" y="405.500" width="21" height="22" fill="#e4e4e4"/><path d="M1866.500 427.500v-22h21" fill="none" stroke="#bcbcbc"/><g transform="translate(1877 415.5)"><g transform="translate(0 0) scale(0.95)"><path d="M-3 6h6v3.500c0 1.500-1 2.500-3 2.500s-3-1-3-2.500z" fill="#3a2208"/><path d="M-2.500 7.500h5" stroke="#c87818" stroke-width="1"/><circle cx="0" cy="-1.500" r="7.600" fill="url(#gBulb)"/><path d="M-3 6c0-3-2-4-2-4h10s-2 1-2 4z" fill="#f0a820"/><ellipse cx="-2" cy="-4.500" rx="3" ry="2.500" fill="#fffef0" opacity="0.850"/></g></g><g transform="translate(1859.5 444)"><rect x="-7.500" y="-7.500" width="15" height="15" rx="1.500" fill="#1a48b4"/><rect x="-7.500" y="-7.500" width="15" height="7" rx="1.500" fill="#3a6cd4" opacity="0.700"/><path d="M0 4.500v-8M-3.500-0.500l3.500-3.500 3.500 3.500" fill="none" stroke="#fff" stroke-width="2.200"/></g><g transform="translate(1882.5 444)"><rect x="-7.500" y="-7.500" width="15" height="15" rx="1.500" fill="#1a48b4"/><rect x="-7.500" y="-7.500" width="15" height="7" rx="1.500" fill="#3a6cd4" opacity="0.700"/><path d="M0-4.500v8M-3.500 0.500l3.500 3.500 3.500-3.500" fill="none" stroke="#fff" stroke-width="2.200"/></g></svg>
<svg style="left:1580px;top:1021px" width="340" height="34" viewBox="0 0 340 34"><rect x="0" y="0" width="340" height="34" filter="url(#nz)"/><path d="M0 0.500h340" stroke="#a8a8a8"/><path d="M0 33.300h340" stroke="#8c8c8c" stroke-width="1.400"/></svg>
<div class="a" style="left:1580px;top:1019px;width:62px;height:35px;background:#f0f0f0;border-right:1px solid #a0a0a0;border-bottom:1.4px solid #8c8c8c;border-bottom-right-radius:7px"></div>
<div class="a" style="left:1642px;top:1021px;width:60px;height:33px;background:#f0f0f0;border:1px solid #a0a0a0;border-bottom:1.4px solid #8c8c8c;border-top-color:#a8a8a8;border-bottom-right-radius:7px;border-bottom-left-radius:4px"></div>
<div class="t" style="left:1591.5px;top:1029px;font-size:14px;letter-spacing:-0.25px;color:#222">Layers</div>
<div class="t" style="left:1651.5px;top:1029px;font-size:14.7px;color:#222">Add In</div>
</body></html>
